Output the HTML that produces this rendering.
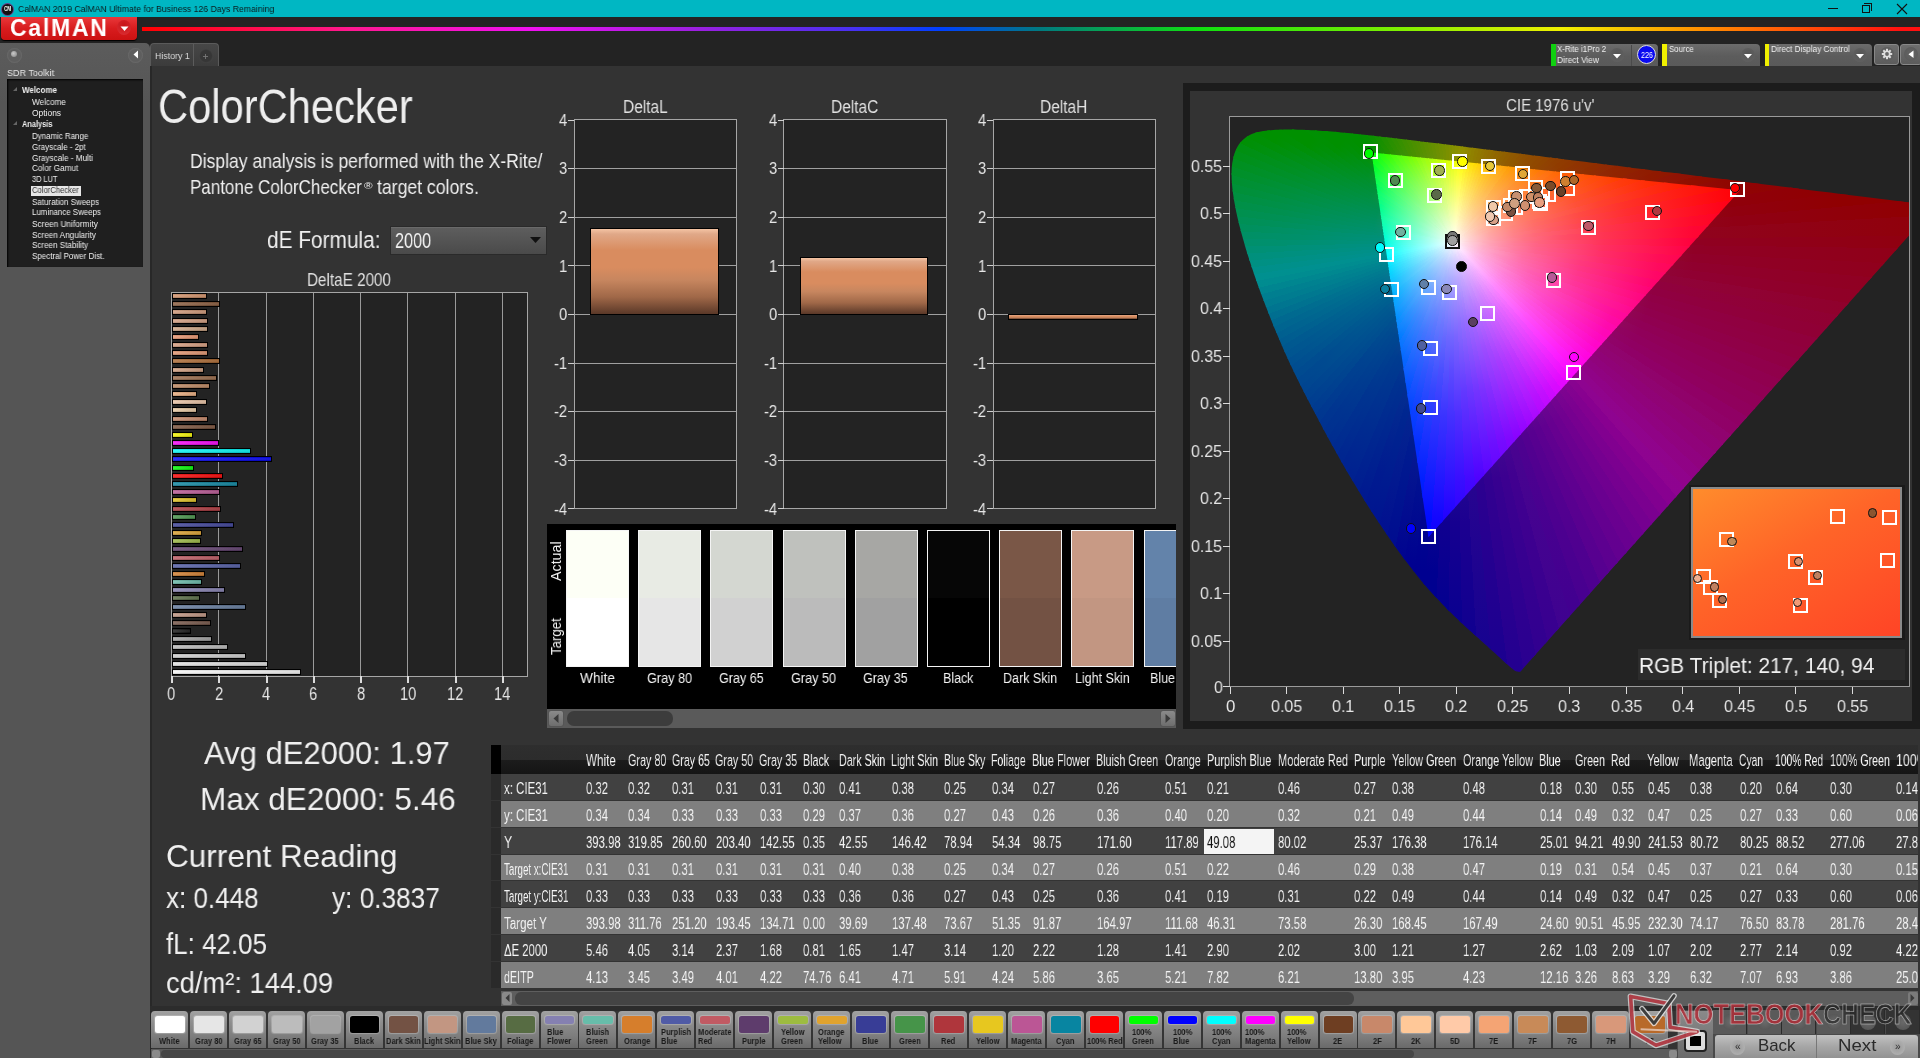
<!DOCTYPE html><html><head><meta charset="utf-8"><style>
*{margin:0;padding:0;box-sizing:border-box}
html,body{width:1920px;height:1058px;overflow:hidden;background:#232323;font-family:"Liberation Sans",sans-serif}
.b{position:absolute}
.t{position:absolute;white-space:nowrap;transform-origin:0 0;will-change:transform}
svg{position:absolute}
</style></head><body>
<div class="b" style="left:0px;top:0px;width:1920px;height:17px;background:#00b7c3"></div>
<div class="b" style="left:2px;top:4px;width:11px;height:11px;border-radius:50%;background:#111;box-shadow:0 0 0 1px #6a3d8a"></div>
<div class="t" style="left:4.00px;top:5.96px;font-size:6.54px;line-height:6.54px;color:#fff;font-weight:bold;transform:scaleX(0.6882);">CM</div>
<div class="t" style="left:17.50px;top:3.93px;font-size:9.88px;line-height:9.88px;color:#0b1a1c;transform:scaleX(0.8793);">CalMAN 2019 CalMAN Ultimate for Business 126 Days Remaining</div>
<div class="b" style="left:1828px;top:8px;width:10px;height:1px;background:#111"></div>
<div class="b" style="left:1862px;top:5px;width:8px;height:8px;border:1px solid #111"></div>
<div class="b" style="left:1864px;top:3px;width:8px;height:8px;border-top:1px solid #111;border-right:1px solid #111"></div>
<svg style="left:1896px;top:3px" width="12" height="12"><path d="M1 1L11 11M11 1L1 11" stroke="#111" stroke-width="1.1"/></svg>
<div class="b" style="left:1px;top:17px;width:136px;height:23px;border-radius:0 0 4px 4px;background:linear-gradient(#e8383a,#d81c1e 50%,#cc1212);box-shadow:0 1px 1px #000"></div>
<div class="t" style="left:10.00px;top:15.89px;font-size:23.98px;line-height:23.98px;color:#fff;font-weight:bold;transform:scaleX(0.9606);letter-spacing:1.8px;">CalMAN</div>
<div class="b" style="left:117px;top:20px;width:14px;height:15px;border-radius:50%;background:radial-gradient(circle at 50% 30%,#c81418,#dc3034)"></div>
<svg style="left:120px;top:26px" width="9" height="6"><path d="M0.5 0.5H8.5L4.5 5z" fill="#fff"/></svg>
<div class="b" style="left:142px;top:27px;width:1778px;height:3.5px;background:linear-gradient(90deg,#ff0000 0%,#ff1890 11.7%,#f010f0 21.8%,#9a20e0 31.4%,#4a30f0 39.8%,#0040ff 44.9%,#007a80 50.5%,#10e010 59.5%,#80f000 70.8%,#f0f000 79.8%,#ff9000 87.6%,#ff1010 99%,#ff1010 100%)"></div>
<div class="b" style="left:0;top:43px;width:150px;height:1015px;border-radius:0 5px 0 0;background:linear-gradient(#5c5c5c,#555 60px,#555)"></div>
<div class="b" style="left:7px;top:48px;width:15px;height:15px;border-radius:50%;background:radial-gradient(#5e5e5e 55%,#6e6e6e 75%,#5c5c5c)"></div>
<div class="b" style="left:11px;top:51px;width:6px;height:6px;border-radius:50%;background:radial-gradient(circle at 40% 40%,#c8c8c8,#808080)"></div>
<div class="b" style="left:128px;top:48px;width:15px;height:15px;border-radius:50%;background:radial-gradient(#5e5e5e 55%,#6e6e6e 75%,#5c5c5c)"></div>
<svg style="left:133px;top:50px" width="6" height="10"><path d="M5 0.5V8.5L0.5 4.5z" fill="#fff"/></svg>
<div class="t" style="left:7.00px;top:67.63px;font-size:9.88px;line-height:9.88px;color:#e8e8e8;transform:scaleX(0.9136);">SDR Toolkit</div>
<div class="b" style="left:7px;top:79px;width:136px;height:188px;background:#1f1f1f;box-shadow:inset 1px 1px 2px #000"></div>
<div class="t" style="left:21.70px;top:85.76px;font-size:8.43px;line-height:8.43px;color:#f0f0f0;font-weight:bold;transform:scaleX(0.9473);">Welcome</div>
<div class="t" style="left:31.60px;top:97.96px;font-size:8.43px;line-height:8.43px;color:#f0f0f0;transform:scaleX(0.9718);">Welcome</div>
<div class="t" style="left:31.60px;top:108.76px;font-size:8.43px;line-height:8.43px;color:#f0f0f0;transform:scaleX(0.9848);">Options</div>
<div class="t" style="left:21.70px;top:119.96px;font-size:8.43px;line-height:8.43px;color:#f0f0f0;font-weight:bold;transform:scaleX(0.8763);">Analysis</div>
<div class="t" style="left:31.60px;top:131.76px;font-size:8.43px;line-height:8.43px;color:#f0f0f0;transform:scaleX(0.9403);">Dynamic Range</div>
<div class="t" style="left:31.60px;top:142.56px;font-size:8.43px;line-height:8.43px;color:#f0f0f0;transform:scaleX(0.9395);">Grayscale - 2pt</div>
<div class="t" style="left:31.60px;top:153.66px;font-size:8.43px;line-height:8.43px;color:#f0f0f0;transform:scaleX(0.9632);">Grayscale - Multi</div>
<div class="t" style="left:31.60px;top:164.46px;font-size:8.43px;line-height:8.43px;color:#f0f0f0;transform:scaleX(0.9665);">Color Gamut</div>
<div class="t" style="left:31.60px;top:175.26px;font-size:8.43px;line-height:8.43px;color:#f0f0f0;transform:scaleX(0.8780);">3D LUT</div>
<div class="b" style="left:31px;top:185.6px;width:49.5px;height:10.3px;background:#e6e6e6"></div>
<div class="t" style="left:32.10px;top:186.36px;font-size:8.43px;line-height:8.43px;color:#333;transform:scaleX(0.9078);">ColorChecker</div>
<div class="t" style="left:31.60px;top:197.66px;font-size:8.43px;line-height:8.43px;color:#f0f0f0;transform:scaleX(0.9495);">Saturation Sweeps</div>
<div class="t" style="left:31.60px;top:208.46px;font-size:8.43px;line-height:8.43px;color:#f0f0f0;transform:scaleX(0.9375);">Luminance Sweeps</div>
<div class="t" style="left:31.60px;top:219.76px;font-size:8.43px;line-height:8.43px;color:#f0f0f0;transform:scaleX(0.9839);">Screen Uniformity</div>
<div class="t" style="left:31.60px;top:230.96px;font-size:8.43px;line-height:8.43px;color:#f0f0f0;transform:scaleX(0.9698);">Screen Angularity</div>
<div class="t" style="left:31.60px;top:241.36px;font-size:8.43px;line-height:8.43px;color:#f0f0f0;transform:scaleX(0.9575);">Screen Stability</div>
<div class="t" style="left:31.60px;top:252.46px;font-size:8.43px;line-height:8.43px;color:#f0f0f0;transform:scaleX(0.9505);">Spectral Power Dist.</div>
<svg style="left:13px;top:87px" width="5" height="5"><path d="M4 0V4H0z" fill="#666"/></svg>
<svg style="left:13px;top:121px" width="5" height="5"><path d="M4 0V4H0z" fill="#666"/></svg>
<div class="b" style="left:150px;top:43px;width:44px;height:23px;border-radius:4px 0 0 0;background:linear-gradient(#474747,#3c3c3c);border:1px solid #5a5a5a;border-bottom:none;border-right:1px solid #4a4a4a"></div>
<div class="t" style="left:154.60px;top:50.63px;font-size:9.88px;line-height:9.88px;color:#ddd;transform:scaleX(0.8925);">History 1</div>
<div class="b" style="left:193px;top:43px;width:26px;height:23px;border-radius:0 4px 0 0;background:linear-gradient(#474747,#3c3c3c);border:1px solid #5a5a5a;border-left:none;border-bottom:none"></div>
<div class="b" style="left:192.6px;top:44px;width:1.6px;height:22px;background:#5c5c5c"></div>
<div class="b" style="left:198.5px;top:49px;width:14px;height:14px;border-radius:50%;background:radial-gradient(#363636 55%,#4a4a4a 80%,#3e3e3e)"></div>
<svg style="left:203px;top:54px" width="5" height="5"><path d="M2.5 0V5M0 2.5H5" stroke="#777" stroke-width="0.9"/></svg>
<div class="b" style="left:1551px;top:44px;width:107px;height:22px;background:linear-gradient(#6c6c6c,#5c5c5c 55%,#5a5a5a);border-radius:0 4px 0 0;"></div>
<div class="b" style="left:1551px;top:44px;width:4.5px;height:22px;background:#10d010"></div>
<div class="t" style="left:1557.40px;top:45.32px;font-size:8.72px;line-height:8.72px;color:#f0f0f0;transform:scaleX(0.9026);">X-Rite i1Pro 2</div>
<div class="t" style="left:1557.40px;top:55.52px;font-size:8.72px;line-height:8.72px;color:#f0f0f0;transform:scaleX(0.9533);">Direct View</div>
<div class="b" style="left:1609.7px;top:47.9px;width:14px;height:14px;border-radius:50%;background:radial-gradient(circle at 50% 40%,#555,#606060 75%,#666)"></div>
<svg style="left:1612.7px;top:53.9px" width="8" height="5"><path d="M0 0H8L4 4.5z" fill="#fff"/></svg>
<div class="b" style="left:1631px;top:45px;width:1px;height:21px;background:#4a4a4a"></div>
<div class="b" style="left:1637px;top:45.2px;width:19px;height:19px;border-radius:50%;background:#0a0af0;border:1px solid #ddd"></div>
<div class="t" style="left:1640.50px;top:50.66px;font-size:8.43px;line-height:8.43px;color:#fff;transform:scaleX(0.8523);">226</div>
<div class="b" style="left:1662px;top:44px;width:98px;height:22px;background:linear-gradient(#6c6c6c,#5c5c5c 55%,#5a5a5a);border-radius:0 4px 0 0;"></div>
<div class="b" style="left:1662px;top:44px;width:4.5px;height:22px;background:#f0f000"></div>
<div class="t" style="left:1668.90px;top:45.32px;font-size:8.72px;line-height:8.72px;color:#f0f0f0;transform:scaleX(0.8971);">Source</div>
<div class="b" style="left:1740.8px;top:47.8px;width:14px;height:14px;border-radius:50%;background:radial-gradient(circle at 50% 40%,#555,#606060 75%,#666)"></div>
<svg style="left:1743.8px;top:53.8px" width="8" height="5"><path d="M0 0H8L4 4.5z" fill="#fff"/></svg>
<div class="b" style="left:1764.5px;top:44px;width:107.5px;height:22px;background:linear-gradient(#6c6c6c,#5c5c5c 55%,#5a5a5a);border-radius:0 4px 0 0;"></div>
<div class="b" style="left:1764.5px;top:44px;width:4.5px;height:22px;background:#f0f000"></div>
<div class="t" style="left:1771.25px;top:45.32px;font-size:8.72px;line-height:8.72px;color:#f0f0f0;transform:scaleX(0.9338);">Direct Display Control</div>
<div class="b" style="left:1853px;top:47.6px;width:14px;height:14px;border-radius:50%;background:radial-gradient(circle at 50% 40%,#555,#606060 75%,#666)"></div>
<svg style="left:1856px;top:53.6px" width="8" height="5"><path d="M0 0H8L4 4.5z" fill="#fff"/></svg>
<div class="b" style="left:1874px;top:44px;width:25px;height:21px;border-radius:3px;background:linear-gradient(#6e6e6e,#5c5c5c);border:1px solid #888"></div>
<div class="b" style="left:1880px;top:47px;width:14px;height:14px;border-radius:50%;background:radial-gradient(#666,#5a5a5a 80%)"></div>
<svg style="left:1881px;top:48px" width="12" height="12" viewBox="-6 -6 12 12"><g fill="#ddd"><circle r="3.6"/><rect x="-1" y="-5.2" width="2" height="10.4"/><rect x="-1" y="-5.2" width="2" height="10.4" transform="rotate(45)"/><rect x="-1" y="-5.2" width="2" height="10.4" transform="rotate(90)"/><rect x="-1" y="-5.2" width="2" height="10.4" transform="rotate(135)"/></g><circle r="1.9" fill="#666"/></svg>
<div class="b" style="left:1900px;top:44px;width:22px;height:21px;border-radius:3px;background:linear-gradient(#6e6e6e,#5c5c5c);border:1px solid #888"></div>
<div class="b" style="left:1904px;top:47px;width:14px;height:14px;border-radius:50%;background:radial-gradient(#666,#5a5a5a 80%)"></div>
<svg style="left:1908px;top:50px" width="6" height="9"><path d="M5.5 0.5V8L0.5 4.25z" fill="#fff"/></svg>
<div class="b" style="left:150px;top:66px;width:1770px;height:992px;background:#333333"></div>
<div class="b" style="left:150px;top:66px;width:1.5px;height:992px;background:#282828"></div>
<div class="t" style="left:158.40px;top:82.89px;font-size:47.97px;line-height:47.97px;color:#eeeeee;transform:scaleX(0.8687);">ColorChecker</div>
<div class="t" style="left:190.40px;top:152.39px;font-size:19.62px;line-height:19.62px;color:#f0f0f0;transform:scaleX(0.8956);">Display analysis is performed with the X-Rite/</div>
<div class="t" style="left:190.40px;top:177.69px;font-size:19.62px;line-height:19.62px;color:#f0f0f0;transform:scaleX(0.8666);">Pantone ColorChecker</div>
<div class="t" style="left:363.60px;top:180.70px;font-size:9.45px;line-height:9.45px;color:#f0f0f0;transform:scaleX(1.2385);">®</div>
<div class="t" style="left:377.10px;top:177.69px;font-size:19.62px;line-height:19.62px;color:#f0f0f0;transform:scaleX(0.8984);">target colors.</div>
<div class="t" style="left:267.30px;top:229.11px;font-size:23.26px;line-height:23.26px;color:#f0f0f0;transform:scaleX(0.8963);">dE Formula:</div>
<div class="b" style="left:390px;top:225.5px;width:156.5px;height:29.5px;background:linear-gradient(#5e5e5e,#4a4a4a);border:1px solid #2a2a2a;box-shadow:inset 0 1px 0 #6a6a6a"></div>
<div class="t" style="left:394.80px;top:229.72px;font-size:22.53px;line-height:22.53px;color:#f2f2f2;transform:scaleX(0.7222);">2000</div>
<svg style="left:530px;top:237px" width="11" height="7"><path d="M0 0H11L5.5 6z" fill="#111"/></svg>
<div class="t" style="left:307.00px;top:271.63px;font-size:17.44px;line-height:17.44px;color:#e0e0e0;transform:scaleX(0.8748);">DeltaE 2000</div>
<div class="b" style="left:171px;top:292px;width:356px;height:384px;background:#232323"></div>
<div class="b" style="left:218px;top:292px;width:1px;height:384px;background:#9a9a9a"></div>
<div class="b" style="left:266px;top:292px;width:1px;height:384px;background:#9a9a9a"></div>
<div class="b" style="left:313px;top:292px;width:1px;height:384px;background:#9a9a9a"></div>
<div class="b" style="left:360px;top:292px;width:1px;height:384px;background:#9a9a9a"></div>
<div class="b" style="left:407px;top:292px;width:1px;height:384px;background:#9a9a9a"></div>
<div class="b" style="left:455px;top:292px;width:1px;height:384px;background:#9a9a9a"></div>
<div class="b" style="left:502px;top:292px;width:1px;height:384px;background:#9a9a9a"></div>
<div class="b" style="left:171px;top:291.5px;width:356.5px;height:385px;border:1.3px solid #a6a6a6"></div>
<div class="b" style="left:171px;top:676px;width:1.5px;height:7px;background:#dcdcdc"></div>
<div class="t" style="left:167.43px;top:686.13px;font-size:17.44px;line-height:17.44px;color:#e6e6e6;transform:scaleX(0.8400);">0</div>
<div class="b" style="left:218px;top:676px;width:1.5px;height:7px;background:#dcdcdc"></div>
<div class="t" style="left:214.71px;top:686.13px;font-size:17.44px;line-height:17.44px;color:#e6e6e6;transform:scaleX(0.8400);">2</div>
<div class="b" style="left:266px;top:676px;width:1.5px;height:7px;background:#dcdcdc"></div>
<div class="t" style="left:261.99px;top:686.13px;font-size:17.44px;line-height:17.44px;color:#e6e6e6;transform:scaleX(0.8400);">4</div>
<div class="b" style="left:313px;top:676px;width:1.5px;height:7px;background:#dcdcdc"></div>
<div class="t" style="left:309.27px;top:686.13px;font-size:17.44px;line-height:17.44px;color:#e6e6e6;transform:scaleX(0.8400);">6</div>
<div class="b" style="left:360px;top:676px;width:1.5px;height:7px;background:#dcdcdc"></div>
<div class="t" style="left:356.55px;top:686.13px;font-size:17.44px;line-height:17.44px;color:#e6e6e6;transform:scaleX(0.8400);">8</div>
<div class="b" style="left:407px;top:676px;width:1.5px;height:7px;background:#dcdcdc"></div>
<div class="t" style="left:399.77px;top:686.13px;font-size:17.44px;line-height:17.44px;color:#e6e6e6;transform:scaleX(0.8400);">10</div>
<div class="b" style="left:455px;top:676px;width:1.5px;height:7px;background:#dcdcdc"></div>
<div class="t" style="left:447.05px;top:686.13px;font-size:17.44px;line-height:17.44px;color:#e6e6e6;transform:scaleX(0.8400);">12</div>
<div class="b" style="left:502px;top:676px;width:1.5px;height:7px;background:#dcdcdc"></div>
<div class="t" style="left:494.33px;top:686.13px;font-size:17.44px;line-height:17.44px;color:#e6e6e6;transform:scaleX(0.8400);">14</div>
<div class="b" style="left:172px;top:293.09px;width:34.5px;height:6px;background-color:#d8946a;border:1.5px solid #000;background-image:linear-gradient(rgba(0,0,0,.12),rgba(255,255,255,.12) 50%,rgba(0,0,0,.2)),linear-gradient(90deg,rgba(255,255,255,.12),rgba(0,0,0,.12))"></div>
<div class="b" style="left:172px;top:301.26px;width:47.5px;height:6px;background-color:#8a5a3a;border:1.5px solid #000;background-image:linear-gradient(rgba(0,0,0,.12),rgba(255,255,255,.12) 50%,rgba(0,0,0,.2)),linear-gradient(90deg,rgba(255,255,255,.12),rgba(0,0,0,.12))"></div>
<div class="b" style="left:172px;top:309.43px;width:34.5px;height:6px;background-color:#d49a78;border:1.5px solid #000;background-image:linear-gradient(rgba(0,0,0,.12),rgba(255,255,255,.12) 50%,rgba(0,0,0,.2)),linear-gradient(90deg,rgba(255,255,255,.12),rgba(0,0,0,.12))"></div>
<div class="b" style="left:172px;top:317.60px;width:36.2px;height:6px;background-color:#d8a080;border:1.5px solid #000;background-image:linear-gradient(rgba(0,0,0,.12),rgba(255,255,255,.12) 50%,rgba(0,0,0,.2)),linear-gradient(90deg,rgba(255,255,255,.12),rgba(0,0,0,.12))"></div>
<div class="b" style="left:172px;top:325.77px;width:36.4px;height:6px;background-color:#d4aa88;border:1.5px solid #000;background-image:linear-gradient(rgba(0,0,0,.12),rgba(255,255,255,.12) 50%,rgba(0,0,0,.2)),linear-gradient(90deg,rgba(255,255,255,.12),rgba(0,0,0,.12))"></div>
<div class="b" style="left:172px;top:333.94px;width:26.7px;height:6px;background-color:#f09870;border:1.5px solid #000;background-image:linear-gradient(rgba(0,0,0,.12),rgba(255,255,255,.12) 50%,rgba(0,0,0,.2)),linear-gradient(90deg,rgba(255,255,255,.12),rgba(0,0,0,.12))"></div>
<div class="b" style="left:172px;top:342.11px;width:36.4px;height:6px;background-color:#dca080;border:1.5px solid #000;background-image:linear-gradient(rgba(0,0,0,.12),rgba(255,255,255,.12) 50%,rgba(0,0,0,.2)),linear-gradient(90deg,rgba(255,255,255,.12),rgba(0,0,0,.12))"></div>
<div class="b" style="left:172px;top:350.28px;width:36.4px;height:6px;background-color:#e89870;border:1.5px solid #000;background-image:linear-gradient(rgba(0,0,0,.12),rgba(255,255,255,.12) 50%,rgba(0,0,0,.2)),linear-gradient(90deg,rgba(255,255,255,.12),rgba(0,0,0,.12))"></div>
<div class="b" style="left:172px;top:358.45px;width:47.5px;height:6px;background-color:#b06a30;border:1.5px solid #000;background-image:linear-gradient(rgba(0,0,0,.12),rgba(255,255,255,.12) 50%,rgba(0,0,0,.2)),linear-gradient(90deg,rgba(255,255,255,.12),rgba(0,0,0,.12))"></div>
<div class="b" style="left:172px;top:366.62px;width:31.9px;height:6px;background-color:#d4a080;border:1.5px solid #000;background-image:linear-gradient(rgba(0,0,0,.12),rgba(255,255,255,.12) 50%,rgba(0,0,0,.2)),linear-gradient(90deg,rgba(255,255,255,.12),rgba(0,0,0,.12))"></div>
<div class="b" style="left:172px;top:374.79px;width:45.2px;height:6px;background-color:#9a6a48;border:1.5px solid #000;background-image:linear-gradient(rgba(0,0,0,.12),rgba(255,255,255,.12) 50%,rgba(0,0,0,.2)),linear-gradient(90deg,rgba(255,255,255,.12),rgba(0,0,0,.12))"></div>
<div class="b" style="left:172px;top:382.96px;width:37.8px;height:6px;background-color:#c08860;border:1.5px solid #000;background-image:linear-gradient(rgba(0,0,0,.12),rgba(255,255,255,.12) 50%,rgba(0,0,0,.2)),linear-gradient(90deg,rgba(255,255,255,.12),rgba(0,0,0,.12))"></div>
<div class="b" style="left:172px;top:391.13px;width:24.8px;height:6px;background-color:#f0b080;border:1.5px solid #000;background-image:linear-gradient(rgba(0,0,0,.12),rgba(255,255,255,.12) 50%,rgba(0,0,0,.2)),linear-gradient(90deg,rgba(255,255,255,.12),rgba(0,0,0,.12))"></div>
<div class="b" style="left:172px;top:399.30px;width:34.5px;height:6px;background-color:#f0c8a8;border:1.5px solid #000;background-image:linear-gradient(rgba(0,0,0,.12),rgba(255,255,255,.12) 50%,rgba(0,0,0,.2)),linear-gradient(90deg,rgba(255,255,255,.12),rgba(0,0,0,.12))"></div>
<div class="b" style="left:172px;top:407.47px;width:24.8px;height:6px;background-color:#f0d0a8;border:1.5px solid #000;background-image:linear-gradient(rgba(0,0,0,.12),rgba(255,255,255,.12) 50%,rgba(0,0,0,.2)),linear-gradient(90deg,rgba(255,255,255,.12),rgba(0,0,0,.12))"></div>
<div class="b" style="left:172px;top:415.64px;width:36.4px;height:6px;background-color:#c88868;border:1.5px solid #000;background-image:linear-gradient(rgba(0,0,0,.12),rgba(255,255,255,.12) 50%,rgba(0,0,0,.2)),linear-gradient(90deg,rgba(255,255,255,.12),rgba(0,0,0,.12))"></div>
<div class="b" style="left:172px;top:423.81px;width:43.7px;height:6px;background-color:#7a5038;border:1.5px solid #000;background-image:linear-gradient(rgba(0,0,0,.12),rgba(255,255,255,.12) 50%,rgba(0,0,0,.2)),linear-gradient(90deg,rgba(255,255,255,.12),rgba(0,0,0,.12))"></div>
<div class="b" style="left:172px;top:431.98px;width:20.8px;height:6px;background-color:#ffff00;border:1.5px solid #000;background-image:linear-gradient(rgba(0,0,0,.12),rgba(255,255,255,.12) 50%,rgba(0,0,0,.2)),linear-gradient(90deg,rgba(255,255,255,.12),rgba(0,0,0,.12))"></div>
<div class="b" style="left:172px;top:440.15px;width:46.6px;height:6px;background-color:#ff00ff;border:1.5px solid #000;background-image:linear-gradient(rgba(0,0,0,.12),rgba(255,255,255,.12) 50%,rgba(0,0,0,.2)),linear-gradient(90deg,rgba(255,255,255,.12),rgba(0,0,0,.12))"></div>
<div class="b" style="left:172px;top:448.32px;width:78.5px;height:6px;background-color:#00ffff;border:1.5px solid #000;background-image:linear-gradient(rgba(0,0,0,.12),rgba(255,255,255,.12) 50%,rgba(0,0,0,.2)),linear-gradient(90deg,rgba(255,255,255,.12),rgba(0,0,0,.12))"></div>
<div class="b" style="left:172px;top:456.49px;width:100.2px;height:6px;background-color:#0000ff;border:1.5px solid #000;background-image:linear-gradient(rgba(0,0,0,.12),rgba(255,255,255,.12) 50%,rgba(0,0,0,.2)),linear-gradient(90deg,rgba(255,255,255,.12),rgba(0,0,0,.12))"></div>
<div class="b" style="left:172px;top:464.66px;width:21.7px;height:6px;background-color:#00ff00;border:1.5px solid #000;background-image:linear-gradient(rgba(0,0,0,.12),rgba(255,255,255,.12) 50%,rgba(0,0,0,.2)),linear-gradient(90deg,rgba(255,255,255,.12),rgba(0,0,0,.12))"></div>
<div class="b" style="left:172px;top:472.83px;width:50.6px;height:6px;background-color:#ff0000;border:1.5px solid #000;background-image:linear-gradient(rgba(0,0,0,.12),rgba(255,255,255,.12) 50%,rgba(0,0,0,.2)),linear-gradient(90deg,rgba(255,255,255,.12),rgba(0,0,0,.12))"></div>
<div class="b" style="left:172px;top:481.00px;width:65.5px;height:6px;background-color:#0885a1;border:1.5px solid #000;background-image:linear-gradient(rgba(0,0,0,.12),rgba(255,255,255,.12) 50%,rgba(0,0,0,.2)),linear-gradient(90deg,rgba(255,255,255,.12),rgba(0,0,0,.12))"></div>
<div class="b" style="left:172px;top:489.17px;width:47.8px;height:6px;background-color:#bb5695;border:1.5px solid #000;background-image:linear-gradient(rgba(0,0,0,.12),rgba(255,255,255,.12) 50%,rgba(0,0,0,.2)),linear-gradient(90deg,rgba(255,255,255,.12),rgba(0,0,0,.12))"></div>
<div class="b" style="left:172px;top:497.34px;width:25.3px;height:6px;background-color:#e7c71f;border:1.5px solid #000;background-image:linear-gradient(rgba(0,0,0,.12),rgba(255,255,255,.12) 50%,rgba(0,0,0,.2)),linear-gradient(90deg,rgba(255,255,255,.12),rgba(0,0,0,.12))"></div>
<div class="b" style="left:172px;top:505.51px;width:49.4px;height:6px;background-color:#af363c;border:1.5px solid #000;background-image:linear-gradient(rgba(0,0,0,.12),rgba(255,255,255,.12) 50%,rgba(0,0,0,.2)),linear-gradient(90deg,rgba(255,255,255,.12),rgba(0,0,0,.12))"></div>
<div class="b" style="left:172px;top:513.68px;width:24.3px;height:6px;background-color:#469449;border:1.5px solid #000;background-image:linear-gradient(rgba(0,0,0,.12),rgba(255,255,255,.12) 50%,rgba(0,0,0,.2)),linear-gradient(90deg,rgba(255,255,255,.12),rgba(0,0,0,.12))"></div>
<div class="b" style="left:172px;top:521.85px;width:61.9px;height:6px;background-color:#383d96;border:1.5px solid #000;background-image:linear-gradient(rgba(0,0,0,.12),rgba(255,255,255,.12) 50%,rgba(0,0,0,.2)),linear-gradient(90deg,rgba(255,255,255,.12),rgba(0,0,0,.12))"></div>
<div class="b" style="left:172px;top:530.02px;width:30.0px;height:6px;background-color:#e0a32e;border:1.5px solid #000;background-image:linear-gradient(rgba(0,0,0,.12),rgba(255,255,255,.12) 50%,rgba(0,0,0,.2)),linear-gradient(90deg,rgba(255,255,255,.12),rgba(0,0,0,.12))"></div>
<div class="b" style="left:172px;top:538.19px;width:28.6px;height:6px;background-color:#9dbc40;border:1.5px solid #000;background-image:linear-gradient(rgba(0,0,0,.12),rgba(255,255,255,.12) 50%,rgba(0,0,0,.2)),linear-gradient(90deg,rgba(255,255,255,.12),rgba(0,0,0,.12))"></div>
<div class="b" style="left:172px;top:546.36px;width:70.9px;height:6px;background-color:#5e3c6c;border:1.5px solid #000;background-image:linear-gradient(rgba(0,0,0,.12),rgba(255,255,255,.12) 50%,rgba(0,0,0,.2)),linear-gradient(90deg,rgba(255,255,255,.12),rgba(0,0,0,.12))"></div>
<div class="b" style="left:172px;top:554.53px;width:47.8px;height:6px;background-color:#c15a63;border:1.5px solid #000;background-image:linear-gradient(rgba(0,0,0,.12),rgba(255,255,255,.12) 50%,rgba(0,0,0,.2)),linear-gradient(90deg,rgba(255,255,255,.12),rgba(0,0,0,.12))"></div>
<div class="b" style="left:172px;top:562.70px;width:68.6px;height:6px;background-color:#505ba6;border:1.5px solid #000;background-image:linear-gradient(rgba(0,0,0,.12),rgba(255,255,255,.12) 50%,rgba(0,0,0,.2)),linear-gradient(90deg,rgba(255,255,255,.12),rgba(0,0,0,.12))"></div>
<div class="b" style="left:172px;top:570.87px;width:33.3px;height:6px;background-color:#d67e2c;border:1.5px solid #000;background-image:linear-gradient(rgba(0,0,0,.12),rgba(255,255,255,.12) 50%,rgba(0,0,0,.2)),linear-gradient(90deg,rgba(255,255,255,.12),rgba(0,0,0,.12))"></div>
<div class="b" style="left:172px;top:579.04px;width:30.3px;height:6px;background-color:#67bdaa;border:1.5px solid #000;background-image:linear-gradient(rgba(0,0,0,.12),rgba(255,255,255,.12) 50%,rgba(0,0,0,.2)),linear-gradient(90deg,rgba(255,255,255,.12),rgba(0,0,0,.12))"></div>
<div class="b" style="left:172px;top:587.21px;width:52.5px;height:6px;background-color:#8580b1;border:1.5px solid #000;background-image:linear-gradient(rgba(0,0,0,.12),rgba(255,255,255,.12) 50%,rgba(0,0,0,.2)),linear-gradient(90deg,rgba(255,255,255,.12),rgba(0,0,0,.12))"></div>
<div class="b" style="left:172px;top:595.38px;width:28.4px;height:6px;background-color:#576c43;border:1.5px solid #000;background-image:linear-gradient(rgba(0,0,0,.12),rgba(255,255,255,.12) 50%,rgba(0,0,0,.2)),linear-gradient(90deg,rgba(255,255,255,.12),rgba(0,0,0,.12))"></div>
<div class="b" style="left:172px;top:603.55px;width:74.2px;height:6px;background-color:#627a9d;border:1.5px solid #000;background-image:linear-gradient(rgba(0,0,0,.12),rgba(255,255,255,.12) 50%,rgba(0,0,0,.2)),linear-gradient(90deg,rgba(255,255,255,.12),rgba(0,0,0,.12))"></div>
<div class="b" style="left:172px;top:611.72px;width:34.8px;height:6px;background-color:#c29682;border:1.5px solid #000;background-image:linear-gradient(rgba(0,0,0,.12),rgba(255,255,255,.12) 50%,rgba(0,0,0,.2)),linear-gradient(90deg,rgba(255,255,255,.12),rgba(0,0,0,.12))"></div>
<div class="b" style="left:172px;top:619.89px;width:39.0px;height:6px;background-color:#735244;border:1.5px solid #000;background-image:linear-gradient(rgba(0,0,0,.12),rgba(255,255,255,.12) 50%,rgba(0,0,0,.2)),linear-gradient(90deg,rgba(255,255,255,.12),rgba(0,0,0,.12))"></div>
<div class="b" style="left:172px;top:628.06px;width:19.1px;height:6px;background-color:#111111;border:1.5px solid #000;background-image:linear-gradient(rgba(0,0,0,.12),rgba(255,255,255,.12) 50%,rgba(0,0,0,.2)),linear-gradient(90deg,rgba(255,255,255,.12),rgba(0,0,0,.12))"></div>
<div class="b" style="left:172px;top:636.23px;width:39.7px;height:6px;background-color:#a2a2a2;border:1.5px solid #000;background-image:linear-gradient(rgba(0,0,0,.12),rgba(255,255,255,.12) 50%,rgba(0,0,0,.2)),linear-gradient(90deg,rgba(255,255,255,.12),rgba(0,0,0,.12))"></div>
<div class="b" style="left:172px;top:644.40px;width:56.0px;height:6px;background-color:#bdbdbd;border:1.5px solid #000;background-image:linear-gradient(rgba(0,0,0,.12),rgba(255,255,255,.12) 50%,rgba(0,0,0,.2)),linear-gradient(90deg,rgba(255,255,255,.12),rgba(0,0,0,.12))"></div>
<div class="b" style="left:172px;top:652.57px;width:74.2px;height:6px;background-color:#d2d2d2;border:1.5px solid #000;background-image:linear-gradient(rgba(0,0,0,.12),rgba(255,255,255,.12) 50%,rgba(0,0,0,.2)),linear-gradient(90deg,rgba(255,255,255,.12),rgba(0,0,0,.12))"></div>
<div class="b" style="left:172px;top:660.74px;width:95.7px;height:6px;background-color:#e6e6e6;border:1.5px solid #000;background-image:linear-gradient(rgba(0,0,0,.12),rgba(255,255,255,.12) 50%,rgba(0,0,0,.2)),linear-gradient(90deg,rgba(255,255,255,.12),rgba(0,0,0,.12))"></div>
<div class="b" style="left:172px;top:668.91px;width:129.1px;height:6px;background-color:#ffffff;border:1.5px solid #000;background-image:linear-gradient(rgba(0,0,0,.12),rgba(255,255,255,.12) 50%,rgba(0,0,0,.2)),linear-gradient(90deg,rgba(255,255,255,.12),rgba(0,0,0,.12))"></div>
<div class="b" style="left:574px;top:119px;width:163px;height:389px;background:#232323"></div>
<div class="b" style="left:574px;top:460px;width:163px;height:1px;background:#a0a0a0"></div>
<div class="b" style="left:574px;top:411px;width:163px;height:1px;background:#a0a0a0"></div>
<div class="b" style="left:574px;top:363px;width:163px;height:1px;background:#a0a0a0"></div>
<div class="b" style="left:574px;top:314px;width:163px;height:1px;background:#a0a0a0"></div>
<div class="b" style="left:574px;top:265px;width:163px;height:1px;background:#a0a0a0"></div>
<div class="b" style="left:574px;top:217px;width:163px;height:1px;background:#a0a0a0"></div>
<div class="b" style="left:574px;top:168px;width:163px;height:1px;background:#a0a0a0"></div>
<div class="b" style="left:573.7px;top:118.5px;width:163.5px;height:390px;border:1.3px solid #a6a6a6"></div>
<div class="b" style="left:568px;top:508px;width:6px;height:1px;background:#d0d0d0"></div>
<div class="t" style="left:554.29px;top:501.72px;font-size:16.86px;line-height:16.86px;color:#e6e6e6;transform:scaleX(0.8800);">-4</div>
<div class="b" style="left:568px;top:460px;width:6px;height:1px;background:#d0d0d0"></div>
<div class="t" style="left:554.29px;top:453.10px;font-size:16.86px;line-height:16.86px;color:#e6e6e6;transform:scaleX(0.8800);">-3</div>
<div class="b" style="left:568px;top:411px;width:6px;height:1px;background:#d0d0d0"></div>
<div class="t" style="left:554.29px;top:404.47px;font-size:16.86px;line-height:16.86px;color:#e6e6e6;transform:scaleX(0.8800);">-2</div>
<div class="b" style="left:568px;top:363px;width:6px;height:1px;background:#d0d0d0"></div>
<div class="t" style="left:554.29px;top:355.85px;font-size:16.86px;line-height:16.86px;color:#e6e6e6;transform:scaleX(0.8800);">-1</div>
<div class="b" style="left:568px;top:314px;width:6px;height:1px;background:#d0d0d0"></div>
<div class="t" style="left:559.27px;top:307.22px;font-size:16.86px;line-height:16.86px;color:#e6e6e6;transform:scaleX(0.8800);">0</div>
<div class="b" style="left:568px;top:265px;width:6px;height:1px;background:#d0d0d0"></div>
<div class="t" style="left:559.27px;top:258.60px;font-size:16.86px;line-height:16.86px;color:#e6e6e6;transform:scaleX(0.8800);">1</div>
<div class="b" style="left:568px;top:217px;width:6px;height:1px;background:#d0d0d0"></div>
<div class="t" style="left:559.27px;top:209.97px;font-size:16.86px;line-height:16.86px;color:#e6e6e6;transform:scaleX(0.8800);">2</div>
<div class="b" style="left:568px;top:168px;width:6px;height:1px;background:#d0d0d0"></div>
<div class="t" style="left:559.27px;top:161.35px;font-size:16.86px;line-height:16.86px;color:#e6e6e6;transform:scaleX(0.8800);">3</div>
<div class="b" style="left:568px;top:120px;width:6px;height:1px;background:#d0d0d0"></div>
<div class="t" style="left:559.27px;top:112.72px;font-size:16.86px;line-height:16.86px;color:#e6e6e6;transform:scaleX(0.8800);">4</div>
<div class="t" style="left:623.01px;top:97.70px;font-size:18.90px;line-height:18.90px;color:#e0e0e0;transform:scaleX(0.8200);">DeltaL</div>
<div class="b" style="left:590px;top:228.3px;width:129px;height:87.19999999999999px;border:1.2px solid #000;background:linear-gradient(#f4c4a4 0,#e0a888 6%,#d98c5f 25%,#d98c5f 45%,#c7865f 60%,#a06848 80%,#5a3828 100%)"></div>
<div class="b" style="left:783.5px;top:119px;width:163px;height:389px;background:#232323"></div>
<div class="b" style="left:783.5px;top:460px;width:163px;height:1px;background:#a0a0a0"></div>
<div class="b" style="left:783.5px;top:411px;width:163px;height:1px;background:#a0a0a0"></div>
<div class="b" style="left:783.5px;top:363px;width:163px;height:1px;background:#a0a0a0"></div>
<div class="b" style="left:783.5px;top:314px;width:163px;height:1px;background:#a0a0a0"></div>
<div class="b" style="left:783.5px;top:265px;width:163px;height:1px;background:#a0a0a0"></div>
<div class="b" style="left:783.5px;top:217px;width:163px;height:1px;background:#a0a0a0"></div>
<div class="b" style="left:783.5px;top:168px;width:163px;height:1px;background:#a0a0a0"></div>
<div class="b" style="left:783.2px;top:118.5px;width:163.5px;height:390px;border:1.3px solid #a6a6a6"></div>
<div class="b" style="left:777.5px;top:508px;width:6px;height:1px;background:#d0d0d0"></div>
<div class="t" style="left:763.79px;top:501.72px;font-size:16.86px;line-height:16.86px;color:#e6e6e6;transform:scaleX(0.8800);">-4</div>
<div class="b" style="left:777.5px;top:460px;width:6px;height:1px;background:#d0d0d0"></div>
<div class="t" style="left:763.79px;top:453.10px;font-size:16.86px;line-height:16.86px;color:#e6e6e6;transform:scaleX(0.8800);">-3</div>
<div class="b" style="left:777.5px;top:411px;width:6px;height:1px;background:#d0d0d0"></div>
<div class="t" style="left:763.79px;top:404.47px;font-size:16.86px;line-height:16.86px;color:#e6e6e6;transform:scaleX(0.8800);">-2</div>
<div class="b" style="left:777.5px;top:363px;width:6px;height:1px;background:#d0d0d0"></div>
<div class="t" style="left:763.79px;top:355.85px;font-size:16.86px;line-height:16.86px;color:#e6e6e6;transform:scaleX(0.8800);">-1</div>
<div class="b" style="left:777.5px;top:314px;width:6px;height:1px;background:#d0d0d0"></div>
<div class="t" style="left:768.77px;top:307.22px;font-size:16.86px;line-height:16.86px;color:#e6e6e6;transform:scaleX(0.8800);">0</div>
<div class="b" style="left:777.5px;top:265px;width:6px;height:1px;background:#d0d0d0"></div>
<div class="t" style="left:768.77px;top:258.60px;font-size:16.86px;line-height:16.86px;color:#e6e6e6;transform:scaleX(0.8800);">1</div>
<div class="b" style="left:777.5px;top:217px;width:6px;height:1px;background:#d0d0d0"></div>
<div class="t" style="left:768.77px;top:209.97px;font-size:16.86px;line-height:16.86px;color:#e6e6e6;transform:scaleX(0.8800);">2</div>
<div class="b" style="left:777.5px;top:168px;width:6px;height:1px;background:#d0d0d0"></div>
<div class="t" style="left:768.77px;top:161.35px;font-size:16.86px;line-height:16.86px;color:#e6e6e6;transform:scaleX(0.8800);">3</div>
<div class="b" style="left:777.5px;top:120px;width:6px;height:1px;background:#d0d0d0"></div>
<div class="t" style="left:768.77px;top:112.72px;font-size:16.86px;line-height:16.86px;color:#e6e6e6;transform:scaleX(0.8800);">4</div>
<div class="t" style="left:831.13px;top:97.70px;font-size:18.90px;line-height:18.90px;color:#e0e0e0;transform:scaleX(0.8200);">DeltaC</div>
<div class="b" style="left:799.5px;top:257.2px;width:128.5px;height:58.30000000000001px;border:1.2px solid #000;background:linear-gradient(#f4c4a4 0,#e0a888 6%,#d98c5f 25%,#d98c5f 45%,#c7865f 60%,#a06848 80%,#5a3828 100%)"></div>
<div class="b" style="left:993px;top:119px;width:163px;height:389px;background:#232323"></div>
<div class="b" style="left:993px;top:460px;width:163px;height:1px;background:#a0a0a0"></div>
<div class="b" style="left:993px;top:411px;width:163px;height:1px;background:#a0a0a0"></div>
<div class="b" style="left:993px;top:363px;width:163px;height:1px;background:#a0a0a0"></div>
<div class="b" style="left:993px;top:314px;width:163px;height:1px;background:#a0a0a0"></div>
<div class="b" style="left:993px;top:265px;width:163px;height:1px;background:#a0a0a0"></div>
<div class="b" style="left:993px;top:217px;width:163px;height:1px;background:#a0a0a0"></div>
<div class="b" style="left:993px;top:168px;width:163px;height:1px;background:#a0a0a0"></div>
<div class="b" style="left:992.7px;top:118.5px;width:163.5px;height:390px;border:1.3px solid #a6a6a6"></div>
<div class="b" style="left:987px;top:508px;width:6px;height:1px;background:#d0d0d0"></div>
<div class="t" style="left:973.29px;top:501.72px;font-size:16.86px;line-height:16.86px;color:#e6e6e6;transform:scaleX(0.8800);">-4</div>
<div class="b" style="left:987px;top:460px;width:6px;height:1px;background:#d0d0d0"></div>
<div class="t" style="left:973.29px;top:453.10px;font-size:16.86px;line-height:16.86px;color:#e6e6e6;transform:scaleX(0.8800);">-3</div>
<div class="b" style="left:987px;top:411px;width:6px;height:1px;background:#d0d0d0"></div>
<div class="t" style="left:973.29px;top:404.47px;font-size:16.86px;line-height:16.86px;color:#e6e6e6;transform:scaleX(0.8800);">-2</div>
<div class="b" style="left:987px;top:363px;width:6px;height:1px;background:#d0d0d0"></div>
<div class="t" style="left:973.29px;top:355.85px;font-size:16.86px;line-height:16.86px;color:#e6e6e6;transform:scaleX(0.8800);">-1</div>
<div class="b" style="left:987px;top:314px;width:6px;height:1px;background:#d0d0d0"></div>
<div class="t" style="left:978.27px;top:307.22px;font-size:16.86px;line-height:16.86px;color:#e6e6e6;transform:scaleX(0.8800);">0</div>
<div class="b" style="left:987px;top:265px;width:6px;height:1px;background:#d0d0d0"></div>
<div class="t" style="left:978.27px;top:258.60px;font-size:16.86px;line-height:16.86px;color:#e6e6e6;transform:scaleX(0.8800);">1</div>
<div class="b" style="left:987px;top:217px;width:6px;height:1px;background:#d0d0d0"></div>
<div class="t" style="left:978.27px;top:209.97px;font-size:16.86px;line-height:16.86px;color:#e6e6e6;transform:scaleX(0.8800);">2</div>
<div class="b" style="left:987px;top:168px;width:6px;height:1px;background:#d0d0d0"></div>
<div class="t" style="left:978.27px;top:161.35px;font-size:16.86px;line-height:16.86px;color:#e6e6e6;transform:scaleX(0.8800);">3</div>
<div class="b" style="left:987px;top:120px;width:6px;height:1px;background:#d0d0d0"></div>
<div class="t" style="left:978.27px;top:112.72px;font-size:16.86px;line-height:16.86px;color:#e6e6e6;transform:scaleX(0.8800);">4</div>
<div class="t" style="left:1040.13px;top:97.70px;font-size:18.90px;line-height:18.90px;color:#e0e0e0;transform:scaleX(0.8200);">DeltaH</div>
<div class="b" style="left:1008px;top:313.5px;width:129.5px;height:6.0px;border:1.2px solid #000;background:linear-gradient(#f4c4a4 0,#e0a888 6%,#d98c5f 25%,#d98c5f 45%,#c7865f 60%,#a06848 80%,#5a3828 100%)"></div>
<div class="b" style="left:547px;top:523.5px;width:629px;height:186px;background:#000"></div>
<div class="b" style="left:547px;top:709px;width:629px;height:18.5px;background:#5a5a5a"></div>
<div class="b" style="left:548px;top:710px;width:16px;height:17px;border-radius:3px;background:linear-gradient(#8a8a8a,#6e6e6e);border:1px solid #555"></div>
<svg style="left:553px;top:714px" width="6" height="9"><path d="M5.5 0V9L0.5 4.5z" fill="#3a3a3a"/></svg>
<div class="b" style="left:566.5px;top:711px;width:106px;height:15px;border-radius:7px;background:#3c3c3c"></div>
<div class="b" style="left:1160px;top:710px;width:16px;height:17px;border-radius:3px;background:linear-gradient(#8a8a8a,#6e6e6e);border:1px solid #555"></div>
<svg style="left:1165px;top:714px" width="6" height="9"><path d="M0.5 0V9L5.5 4.5z" fill="#3a3a3a"/></svg>
<div class="t" style="left:550.29px;top:580.50px;font-size:13.95px;line-height:13.95px;color:#f0f0f0;transform:rotate(-90deg) scaleX(1.0234);">Actual</div>
<div class="t" style="left:550.29px;top:654.50px;font-size:13.95px;line-height:13.95px;color:#f0f0f0;transform:rotate(-90deg) scaleX(0.9538);">Target</div>
<div class="b" style="left:547px;top:523px;width:629px;height:186px;overflow:hidden">
<div class="b" style="left:19.0px;top:7px;width:63px;height:136.5px;border:1.5px solid #f4f4f4;background:linear-gradient(#fdfff6 50%,#ffffff 50%)"></div>
<div class="t" style="left:32.60px;top:147.75px;font-size:14.83px;line-height:14.83px;color:#f4f4f4;transform:scaleX(0.9213);">White</div>
<div class="b" style="left:91.2px;top:7px;width:63px;height:136.5px;border:1.5px solid #f4f4f4;background:linear-gradient(#e8ebe4 50%,#e6e6e6 50%)"></div>
<div class="t" style="left:99.60px;top:147.75px;font-size:14.83px;line-height:14.83px;color:#f4f4f4;transform:scaleX(0.8557);">Gray 80</div>
<div class="b" style="left:163.4px;top:7px;width:63px;height:136.5px;border:1.5px solid #f4f4f4;background:linear-gradient(#d4d7d1 50%,#d1d1d1 50%)"></div>
<div class="t" style="left:171.70px;top:147.75px;font-size:14.83px;line-height:14.83px;color:#f4f4f4;transform:scaleX(0.8481);">Gray 65</div>
<div class="b" style="left:235.6px;top:7px;width:63px;height:136.5px;border:1.5px solid #f4f4f4;background:linear-gradient(#bfc1bd 50%,#bbbbbb 50%)"></div>
<div class="t" style="left:244.20px;top:147.75px;font-size:14.83px;line-height:14.83px;color:#f4f4f4;transform:scaleX(0.8538);">Gray 50</div>
<div class="b" style="left:307.8px;top:7px;width:63px;height:136.5px;border:1.5px solid #f4f4f4;background:linear-gradient(#a7a7a4 50%,#a1a1a1 50%)"></div>
<div class="t" style="left:316.30px;top:147.75px;font-size:14.83px;line-height:14.83px;color:#f4f4f4;transform:scaleX(0.8481);">Gray 35</div>
<div class="b" style="left:380.0px;top:7px;width:63px;height:136.5px;border:1.5px solid #f4f4f4;background:linear-gradient(#060606 50%,#000000 50%)"></div>
<div class="t" style="left:395.80px;top:147.75px;font-size:14.83px;line-height:14.83px;color:#f4f4f4;transform:scaleX(0.8397);">Black</div>
<div class="b" style="left:452.2px;top:7px;width:63px;height:136.5px;border:1.5px solid #f4f4f4;background:linear-gradient(#7a5747 50%,#735244 50%)"></div>
<div class="t" style="left:456.10px;top:147.75px;font-size:14.83px;line-height:14.83px;color:#f4f4f4;transform:scaleX(0.8433);">Dark Skin</div>
<div class="b" style="left:524.4px;top:7px;width:63px;height:136.5px;border:1.5px solid #f4f4f4;background:linear-gradient(#c89a85 50%,#c29682 50%)"></div>
<div class="t" style="left:527.90px;top:147.75px;font-size:14.83px;line-height:14.83px;color:#f4f4f4;transform:scaleX(0.8420);">Light Skin</div>
<div class="b" style="left:596.6px;top:7px;width:63px;height:136.5px;border:1.5px solid #f4f4f4;background:linear-gradient(#6383aa 50%,#5f7da3 50%)"></div>
<div class="t" style="left:603.00px;top:147.75px;font-size:14.83px;line-height:14.83px;color:#f4f4f4;transform:scaleX(0.8378);">Blue Sky</div>
</div>
<div class="b" style="left:1183px;top:82.75px;width:737px;height:646px;background:#1c1c1c"></div>
<div class="b" style="left:1190px;top:90.5px;width:722px;height:630px;background:#333333"></div>
<div class="t" style="left:1506.25px;top:97.28px;font-size:17.15px;line-height:17.15px;color:#e0e0e0;transform:scaleX(0.8768);">CIE 1976 u'v'</div>
<div class="b" style="left:1230px;top:117px;width:679px;height:570px;background:#232323"></div>
<svg style="left:1230px;top:117px" width="679" height="570" viewBox="0 0 679 570"><defs><clipPath id="cl"><polygon points="290.6,554.2 290.5,554.3 290.4,554.5 290.2,554.6 290.0,554.7 289.7,554.8 289.4,554.9 288.9,554.8 288.2,554.7 287.5,554.6 286.8,554.4 286.0,554.2 285.4,554.0 284.9,553.7 284.4,553.4 283.9,553.0 283.5,552.7 283.0,552.3 282.5,551.8 281.9,551.4 281.3,550.9 280.7,550.4 280.0,549.8 279.3,549.2 278.5,548.5 277.7,547.8 276.8,547.0 275.9,546.2 274.9,545.3 273.9,544.4 272.8,543.4 271.7,542.4 270.6,541.4 269.4,540.3 268.2,539.2 266.9,538.0 265.6,536.7 264.2,535.5 262.8,534.2 261.3,532.9 259.8,531.5 258.2,530.0 256.5,528.5 254.7,526.9 252.8,525.2 250.8,523.5 248.8,521.6 246.7,519.8 244.5,517.8 242.3,515.8 240.0,513.8 237.7,511.7 235.2,509.4 232.7,507.1 230.1,504.7 227.4,502.1 224.6,499.4 221.7,496.6 218.7,493.7 215.6,490.6 212.4,487.2 209.2,483.8 205.9,480.3 202.5,476.7 198.9,472.7 195.2,468.4 191.2,463.7 187.0,458.4 182.5,452.8 177.9,446.8 173.1,440.4 168.1,433.7 163.0,426.6 157.8,419.0 152.4,411.1 146.9,402.8 141.3,394.2 135.6,385.2 129.8,375.8 123.9,366.1 117.9,355.9 111.8,345.4 105.7,334.6 99.7,323.7 93.7,312.7 87.8,301.6 81.8,290.2 75.8,278.7 70.0,267.2 64.3,255.7 59.0,244.4 53.9,233.2 49.1,222.0 44.4,210.9 40.0,199.9 35.8,189.2 31.9,178.9 28.2,168.9 24.8,159.2 21.6,149.7 18.6,140.6 15.9,131.9 13.5,123.6 11.3,115.8 9.4,108.4 7.7,101.5 6.2,94.8 5.0,88.5 3.9,82.6 3.1,77.0 2.4,71.8 2.0,67.0 1.7,62.4 1.6,58.1 1.6,54.0 1.8,50.1 2.2,46.5 2.8,43.2 3.5,40.0 4.3,37.1 5.3,34.3 6.4,31.8 7.6,29.4 9.0,27.3 10.6,25.3 12.2,23.5 13.9,21.9 15.7,20.4 17.6,19.2 19.7,18.1 21.8,17.1 23.9,16.3 26.2,15.5 28.4,14.9 30.8,14.4 33.2,14.0 35.7,13.7 38.2,13.4 40.7,13.2 43.3,13.0 45.9,12.8 48.6,12.7 51.3,12.7 54.0,12.6 56.7,12.6 59.3,12.6 62.0,12.6 64.7,12.6 67.4,12.7 70.1,12.7 72.8,12.8 75.6,12.9 78.3,13.0 81.1,13.2 83.9,13.3 86.8,13.5 89.7,13.7 92.6,13.9 95.6,14.1 98.6,14.3 101.6,14.6 104.7,14.8 107.8,15.1 111.0,15.4 114.2,15.7 117.5,16.0 120.8,16.3 124.1,16.7 127.5,17.0 131.0,17.4 134.5,17.8 138.1,18.2 141.7,18.6 145.4,19.0 149.2,19.4 153.1,19.9 157.0,20.3 160.9,20.8 165.0,21.3 169.1,21.7 173.3,22.2 177.5,22.7 181.8,23.3 186.2,23.8 190.7,24.4 195.2,24.9 199.8,25.5 204.5,26.1 209.3,26.6 214.2,27.2 219.1,27.8 224.2,28.5 229.3,29.1 234.5,29.7 239.7,30.4 245.1,31.1 250.5,31.8 256.0,32.4 261.6,33.1 267.3,33.9 273.0,34.6 278.9,35.3 284.8,36.1 290.8,36.8 296.9,37.6 303.0,38.4 309.3,39.1 315.6,39.9 322.0,40.7 328.4,41.5 334.9,42.4 341.5,43.2 348.1,44.0 354.8,44.8 361.6,45.7 368.4,46.5 375.2,47.4 382.0,48.3 388.9,49.1 395.9,50.0 402.8,50.9 409.7,51.7 416.5,52.6 422.9,53.4 428.7,54.1 434.5,54.9 440.7,55.6 448.0,56.6 456.6,57.6 467.2,59.0 479.5,60.5 492.7,62.1 506.1,63.8 519.1,65.4 530.9,66.9 541.4,68.2 551.0,69.4 560.1,70.6 569.1,71.7 578.5,72.9 588.8,74.2 600.1,75.6 612.4,77.2 625.0,78.8 637.5,80.3 649.3,81.8 659.8,83.1 669.4,84.3 678.6,85.5 687.1,86.5 694.6,87.5 700.8,88.2 705.5,88.8"/></clipPath><clipPath id="ct"><polygon points="141.5,35.6 510.0,73.2 198.5,420.0"/></clipPath><linearGradient id="o0" gradientUnits="userSpaceOnUse" x1="224" y1="125" x2="1124" y2="125"><stop offset="0.000" stop-color="#909090"/><stop offset="0.028" stop-color="#90686f"/><stop offset="0.078" stop-color="#90404e"/><stop offset="0.167" stop-color="#901c32"/><stop offset="0.267" stop-color="#900022"/><stop offset="0.511" stop-color="#90000f"/><stop offset="1.000" stop-color="#900000"/></linearGradient><linearGradient id="o1" gradientUnits="userSpaceOnUse" x1="224" y1="125" x2="1123" y2="157"><stop offset="0.000" stop-color="#909090"/><stop offset="0.033" stop-color="#90626b"/><stop offset="0.078" stop-color="#904051"/><stop offset="0.142" stop-color="#90233b"/><stop offset="0.267" stop-color="#900026"/><stop offset="0.600" stop-color="#900011"/><stop offset="1.000" stop-color="#900007"/></linearGradient><linearGradient id="o2" gradientUnits="userSpaceOnUse" x1="224" y1="125" x2="1122" y2="188"><stop offset="0.000" stop-color="#909090"/><stop offset="0.033" stop-color="#90626d"/><stop offset="0.091" stop-color="#90384d"/><stop offset="0.194" stop-color="#901134"/><stop offset="0.267" stop-color="#90002a"/><stop offset="0.511" stop-color="#90001a"/><stop offset="1.000" stop-color="#90000e"/></linearGradient><linearGradient id="o3" gradientUnits="userSpaceOnUse" x1="224" y1="125" x2="1119" y2="219"><stop offset="0.000" stop-color="#909090"/><stop offset="0.018" stop-color="#90747b"/><stop offset="0.040" stop-color="#905b69"/><stop offset="0.078" stop-color="#903f55"/><stop offset="0.142" stop-color="#902141"/><stop offset="0.228" stop-color="#900633"/><stop offset="0.267" stop-color="#90002e"/><stop offset="0.511" stop-color="#90001f"/><stop offset="1.000" stop-color="#900014"/></linearGradient><linearGradient id="o4" gradientUnits="userSpaceOnUse" x1="224" y1="125" x2="1115" y2="250"><stop offset="0.000" stop-color="#909090"/><stop offset="0.018" stop-color="#90747c"/><stop offset="0.040" stop-color="#905b6b"/><stop offset="0.078" stop-color="#903f57"/><stop offset="0.122" stop-color="#902849"/><stop offset="0.228" stop-color="#900537"/><stop offset="0.267" stop-color="#900032"/><stop offset="0.433" stop-color="#900027"/><stop offset="1.000" stop-color="#900019"/></linearGradient><linearGradient id="o5" gradientUnits="userSpaceOnUse" x1="224" y1="125" x2="1110" y2="281"><stop offset="0.000" stop-color="#909090"/><stop offset="0.018" stop-color="#90747d"/><stop offset="0.040" stop-color="#905b6c"/><stop offset="0.078" stop-color="#903f5a"/><stop offset="0.142" stop-color="#902047"/><stop offset="0.228" stop-color="#90033a"/><stop offset="0.511" stop-color="#900028"/><stop offset="1.000" stop-color="#90001f"/></linearGradient><linearGradient id="o6" gradientUnits="userSpaceOnUse" x1="224" y1="125" x2="1104" y2="312"><stop offset="0.000" stop-color="#909090"/><stop offset="0.033" stop-color="#906272"/><stop offset="0.078" stop-color="#903e5c"/><stop offset="0.122" stop-color="#90274f"/><stop offset="0.228" stop-color="#90013e"/><stop offset="0.511" stop-color="#90002d"/><stop offset="1.000" stop-color="#900024"/></linearGradient><linearGradient id="o7" gradientUnits="userSpaceOnUse" x1="224" y1="125" x2="1097" y2="343"><stop offset="0.000" stop-color="#909090"/><stop offset="0.033" stop-color="#906273"/><stop offset="0.078" stop-color="#903e5e"/><stop offset="0.122" stop-color="#902752"/><stop offset="0.228" stop-color="#900042"/><stop offset="0.433" stop-color="#900034"/><stop offset="1.000" stop-color="#900029"/></linearGradient><linearGradient id="o8" gradientUnits="userSpaceOnUse" x1="224" y1="125" x2="1089" y2="373"><stop offset="0.000" stop-color="#909090"/><stop offset="0.028" stop-color="#906878"/><stop offset="0.067" stop-color="#904565"/><stop offset="0.142" stop-color="#901e51"/><stop offset="0.228" stop-color="#900046"/><stop offset="0.511" stop-color="#900036"/><stop offset="1.000" stop-color="#90002e"/></linearGradient><linearGradient id="o9" gradientUnits="userSpaceOnUse" x1="224" y1="125" x2="1080" y2="403"><stop offset="0.000" stop-color="#909090"/><stop offset="0.033" stop-color="#906276"/><stop offset="0.078" stop-color="#903e63"/><stop offset="0.122" stop-color="#902658"/><stop offset="0.228" stop-color="#900049"/><stop offset="0.433" stop-color="#90003d"/><stop offset="1.000" stop-color="#900033"/></linearGradient><linearGradient id="o10" gradientUnits="userSpaceOnUse" x1="224" y1="125" x2="1070" y2="433"><stop offset="0.000" stop-color="#909090"/><stop offset="0.033" stop-color="#906278"/><stop offset="0.078" stop-color="#903e66"/><stop offset="0.142" stop-color="#901d58"/><stop offset="0.228" stop-color="#90004d"/><stop offset="0.433" stop-color="#900042"/><stop offset="1.000" stop-color="#900039"/></linearGradient><linearGradient id="o11" gradientUnits="userSpaceOnUse" x1="224" y1="125" x2="1058" y2="462"><stop offset="0.000" stop-color="#909090"/><stop offset="0.033" stop-color="#906379"/><stop offset="0.078" stop-color="#903e69"/><stop offset="0.142" stop-color="#901d5b"/><stop offset="0.228" stop-color="#900051"/><stop offset="0.511" stop-color="#900045"/><stop offset="1.000" stop-color="#90003e"/></linearGradient><linearGradient id="o12" gradientUnits="userSpaceOnUse" x1="224" y1="125" x2="1046" y2="491"><stop offset="0.000" stop-color="#909090"/><stop offset="0.033" stop-color="#90637b"/><stop offset="0.078" stop-color="#903e6b"/><stop offset="0.194" stop-color="#900758"/><stop offset="0.228" stop-color="#900056"/><stop offset="0.511" stop-color="#900049"/><stop offset="1.000" stop-color="#900043"/></linearGradient><linearGradient id="o13" gradientUnits="userSpaceOnUse" x1="224" y1="125" x2="1033" y2="520"><stop offset="0.000" stop-color="#909090"/><stop offset="0.033" stop-color="#90637d"/><stop offset="0.078" stop-color="#903e6e"/><stop offset="0.142" stop-color="#901c62"/><stop offset="0.228" stop-color="#90005a"/><stop offset="0.511" stop-color="#90004e"/><stop offset="1.000" stop-color="#900048"/></linearGradient><linearGradient id="o14" gradientUnits="userSpaceOnUse" x1="224" y1="125" x2="1018" y2="548"><stop offset="0.000" stop-color="#909090"/><stop offset="0.040" stop-color="#905d7c"/><stop offset="0.091" stop-color="#90366e"/><stop offset="0.194" stop-color="#900661"/><stop offset="0.228" stop-color="#90005e"/><stop offset="0.511" stop-color="#900053"/><stop offset="1.000" stop-color="#90004e"/></linearGradient><linearGradient id="o15" gradientUnits="userSpaceOnUse" x1="224" y1="125" x2="1003" y2="575"><stop offset="0.000" stop-color="#909090"/><stop offset="0.040" stop-color="#905d7e"/><stop offset="0.078" stop-color="#903f74"/><stop offset="0.194" stop-color="#900565"/><stop offset="0.228" stop-color="#900062"/><stop offset="0.433" stop-color="#90005a"/><stop offset="1.000" stop-color="#900053"/></linearGradient><linearGradient id="o16" gradientUnits="userSpaceOnUse" x1="224" y1="125" x2="987" y2="602"><stop offset="0.000" stop-color="#909090"/><stop offset="0.033" stop-color="#906482"/><stop offset="0.078" stop-color="#903f77"/><stop offset="0.194" stop-color="#900569"/><stop offset="0.228" stop-color="#900067"/><stop offset="1.000" stop-color="#900059"/></linearGradient><linearGradient id="o17" gradientUnits="userSpaceOnUse" x1="224" y1="125" x2="970" y2="628"><stop offset="0.000" stop-color="#909090"/><stop offset="0.022" stop-color="#907187"/><stop offset="0.067" stop-color="#90487c"/><stop offset="0.122" stop-color="#902674"/><stop offset="0.194" stop-color="#90046e"/><stop offset="0.433" stop-color="#900065"/><stop offset="1.000" stop-color="#90005e"/></linearGradient><linearGradient id="o18" gradientUnits="userSpaceOnUse" x1="224" y1="125" x2="952" y2="654"><stop offset="0.000" stop-color="#909090"/><stop offset="0.028" stop-color="#906b87"/><stop offset="0.067" stop-color="#90487f"/><stop offset="0.122" stop-color="#902678"/><stop offset="0.194" stop-color="#900472"/><stop offset="1.000" stop-color="#900064"/></linearGradient><linearGradient id="o19" gradientUnits="userSpaceOnUse" x1="224" y1="125" x2="933" y2="679"><stop offset="0.000" stop-color="#909090"/><stop offset="0.033" stop-color="#906687"/><stop offset="0.067" stop-color="#904982"/><stop offset="0.194" stop-color="#900377"/><stop offset="1.000" stop-color="#90006b"/></linearGradient><linearGradient id="o20" gradientUnits="userSpaceOnUse" x1="224" y1="125" x2="913" y2="704"><stop offset="0.000" stop-color="#909090"/><stop offset="0.033" stop-color="#906789"/><stop offset="0.067" stop-color="#904a85"/><stop offset="0.122" stop-color="#902780"/><stop offset="0.194" stop-color="#90037c"/><stop offset="1.000" stop-color="#900071"/></linearGradient><linearGradient id="o21" gradientUnits="userSpaceOnUse" x1="224" y1="125" x2="893" y2="727"><stop offset="0.000" stop-color="#909090"/><stop offset="0.022" stop-color="#90738c"/><stop offset="0.057" stop-color="#905288"/><stop offset="0.106" stop-color="#903185"/><stop offset="0.194" stop-color="#900381"/><stop offset="1.000" stop-color="#900078"/></linearGradient><linearGradient id="o22" gradientUnits="userSpaceOnUse" x1="224" y1="125" x2="871" y2="750"><stop offset="0.000" stop-color="#909090"/><stop offset="0.033" stop-color="#90688d"/><stop offset="0.057" stop-color="#90538b"/><stop offset="0.106" stop-color="#903289"/><stop offset="0.194" stop-color="#900387"/><stop offset="1.000" stop-color="#900080"/></linearGradient><linearGradient id="o23" gradientUnits="userSpaceOnUse" x1="224" y1="125" x2="849" y2="773"><stop offset="0.000" stop-color="#909090"/><stop offset="0.057" stop-color="#90548e"/><stop offset="0.106" stop-color="#90338d"/><stop offset="0.194" stop-color="#90048c"/><stop offset="1.000" stop-color="#900089"/></linearGradient><linearGradient id="o24" gradientUnits="userSpaceOnUse" x1="224" y1="125" x2="826" y2="794"><stop offset="0.000" stop-color="#909090"/><stop offset="0.033" stop-color="#8f6990"/><stop offset="0.067" stop-color="#8f4d90"/><stop offset="0.194" stop-color="#8e0490"/><stop offset="1.000" stop-color="#8f0090"/></linearGradient><linearGradient id="o25" gradientUnits="userSpaceOnUse" x1="224" y1="125" x2="802" y2="815"><stop offset="0.000" stop-color="#909090"/><stop offset="0.040" stop-color="#8d6290"/><stop offset="0.091" stop-color="#8b3c90"/><stop offset="0.194" stop-color="#880590"/><stop offset="0.228" stop-color="#880090"/><stop offset="1.000" stop-color="#850090"/></linearGradient><linearGradient id="o26" gradientUnits="userSpaceOnUse" x1="224" y1="125" x2="778" y2="834"><stop offset="0.000" stop-color="#909090"/><stop offset="0.033" stop-color="#8b6890"/><stop offset="0.091" stop-color="#873b90"/><stop offset="0.194" stop-color="#830590"/><stop offset="0.228" stop-color="#820090"/><stop offset="1.000" stop-color="#7d0090"/></linearGradient><linearGradient id="o27" gradientUnits="userSpaceOnUse" x1="224" y1="125" x2="753" y2="853"><stop offset="0.000" stop-color="#909090"/><stop offset="0.040" stop-color="#896190"/><stop offset="0.091" stop-color="#833b90"/><stop offset="0.194" stop-color="#7d0690"/><stop offset="0.228" stop-color="#7c0090"/><stop offset="1.000" stop-color="#740090"/></linearGradient><linearGradient id="o28" gradientUnits="userSpaceOnUse" x1="224" y1="125" x2="727" y2="871"><stop offset="0.000" stop-color="#909090"/><stop offset="0.033" stop-color="#886790"/><stop offset="0.078" stop-color="#814390"/><stop offset="0.194" stop-color="#780790"/><stop offset="0.228" stop-color="#770090"/><stop offset="1.000" stop-color="#6c0090"/></linearGradient><linearGradient id="o29" gradientUnits="userSpaceOnUse" x1="224" y1="125" x2="701" y2="888"><stop offset="0.000" stop-color="#909090"/><stop offset="0.033" stop-color="#866790"/><stop offset="0.091" stop-color="#7c3a90"/><stop offset="0.194" stop-color="#730790"/><stop offset="0.228" stop-color="#710090"/><stop offset="1.000" stop-color="#640090"/></linearGradient><linearGradient id="o30" gradientUnits="userSpaceOnUse" x1="224" y1="125" x2="674" y2="905"><stop offset="0.000" stop-color="#909090"/><stop offset="0.040" stop-color="#826090"/><stop offset="0.091" stop-color="#783a90"/><stop offset="0.194" stop-color="#6e0890"/><stop offset="0.228" stop-color="#6c0090"/><stop offset="1.000" stop-color="#5c0090"/></linearGradient><linearGradient id="o31" gradientUnits="userSpaceOnUse" x1="224" y1="125" x2="646" y2="920"><stop offset="0.000" stop-color="#909090"/><stop offset="0.040" stop-color="#806090"/><stop offset="0.091" stop-color="#753a90"/><stop offset="0.194" stop-color="#690990"/><stop offset="0.228" stop-color="#670090"/><stop offset="1.000" stop-color="#540090"/></linearGradient><linearGradient id="o32" gradientUnits="userSpaceOnUse" x1="224" y1="125" x2="618" y2="934"><stop offset="0.000" stop-color="#909090"/><stop offset="0.033" stop-color="#806690"/><stop offset="0.078" stop-color="#744290"/><stop offset="0.142" stop-color="#692090"/><stop offset="0.228" stop-color="#610090"/><stop offset="1.000" stop-color="#4c0090"/></linearGradient><linearGradient id="o33" gradientUnits="userSpaceOnUse" x1="224" y1="125" x2="590" y2="947"><stop offset="0.000" stop-color="#909090"/><stop offset="0.033" stop-color="#7e6690"/><stop offset="0.078" stop-color="#714290"/><stop offset="0.167" stop-color="#621690"/><stop offset="0.228" stop-color="#5c0090"/><stop offset="1.000" stop-color="#440090"/></linearGradient><linearGradient id="o34" gradientUnits="userSpaceOnUse" x1="224" y1="125" x2="561" y2="960"><stop offset="0.000" stop-color="#909090"/><stop offset="0.033" stop-color="#7d6690"/><stop offset="0.078" stop-color="#6e4290"/><stop offset="0.142" stop-color="#612190"/><stop offset="0.228" stop-color="#580090"/><stop offset="0.367" stop-color="#4f0090"/><stop offset="1.000" stop-color="#3d0090"/></linearGradient><linearGradient id="o35" gradientUnits="userSpaceOnUse" x1="224" y1="125" x2="532" y2="971"><stop offset="0.000" stop-color="#909090"/><stop offset="0.040" stop-color="#785f90"/><stop offset="0.091" stop-color="#673a90"/><stop offset="0.228" stop-color="#530090"/><stop offset="0.433" stop-color="#470090"/><stop offset="1.000" stop-color="#350090"/></linearGradient><linearGradient id="o36" gradientUnits="userSpaceOnUse" x1="224" y1="125" x2="502" y2="981"><stop offset="0.000" stop-color="#909090"/><stop offset="0.040" stop-color="#765f90"/><stop offset="0.078" stop-color="#684390"/><stop offset="0.142" stop-color="#592290"/><stop offset="0.228" stop-color="#4e0190"/><stop offset="0.433" stop-color="#410090"/><stop offset="1.000" stop-color="#2d0090"/></linearGradient><linearGradient id="o37" gradientUnits="userSpaceOnUse" x1="224" y1="125" x2="472" y2="990"><stop offset="0.000" stop-color="#909090"/><stop offset="0.040" stop-color="#745f90"/><stop offset="0.078" stop-color="#654390"/><stop offset="0.122" stop-color="#592b90"/><stop offset="0.228" stop-color="#490390"/><stop offset="1.000" stop-color="#250090"/></linearGradient><linearGradient id="o38" gradientUnits="userSpaceOnUse" x1="224" y1="125" x2="442" y2="998"><stop offset="0.000" stop-color="#909090"/><stop offset="0.033" stop-color="#766690"/><stop offset="0.078" stop-color="#624390"/><stop offset="0.122" stop-color="#552c90"/><stop offset="0.228" stop-color="#440590"/><stop offset="0.267" stop-color="#410090"/><stop offset="1.000" stop-color="#1d0090"/></linearGradient><linearGradient id="o39" gradientUnits="userSpaceOnUse" x1="224" y1="125" x2="411" y2="1005"><stop offset="0.000" stop-color="#909090"/><stop offset="0.018" stop-color="#7f7790"/><stop offset="0.048" stop-color="#6c5990"/><stop offset="0.106" stop-color="#563490"/><stop offset="0.228" stop-color="#400790"/><stop offset="0.267" stop-color="#3c0090"/><stop offset="1.000" stop-color="#140090"/></linearGradient><linearGradient id="o40" gradientUnits="userSpaceOnUse" x1="224" y1="125" x2="380" y2="1011"><stop offset="0.000" stop-color="#909090"/><stop offset="0.033" stop-color="#736690"/><stop offset="0.091" stop-color="#573c90"/><stop offset="0.167" stop-color="#441c90"/><stop offset="0.267" stop-color="#370090"/><stop offset="1.000" stop-color="#0a0090"/></linearGradient><linearGradient id="o41" gradientUnits="userSpaceOnUse" x1="224" y1="125" x2="349" y2="1016"><stop offset="0.000" stop-color="#909090"/><stop offset="0.033" stop-color="#716690"/><stop offset="0.078" stop-color="#594490"/><stop offset="0.167" stop-color="#401d90"/><stop offset="0.267" stop-color="#320090"/><stop offset="1.000" stop-color="#000090"/></linearGradient><linearGradient id="o42" gradientUnits="userSpaceOnUse" x1="224" y1="125" x2="318" y2="1020"><stop offset="0.000" stop-color="#909090"/><stop offset="0.033" stop-color="#706690"/><stop offset="0.091" stop-color="#513d90"/><stop offset="0.167" stop-color="#3c1e90"/><stop offset="0.267" stop-color="#2c0090"/><stop offset="0.711" stop-color="#070090"/><stop offset="1.000" stop-color="#000090"/></linearGradient><linearGradient id="o43" gradientUnits="userSpaceOnUse" x1="224" y1="125" x2="287" y2="1023"><stop offset="0.000" stop-color="#909090"/><stop offset="0.040" stop-color="#696090"/><stop offset="0.078" stop-color="#544590"/><stop offset="0.142" stop-color="#3e2890"/><stop offset="0.267" stop-color="#270490"/><stop offset="0.711" stop-color="#000090"/><stop offset="1.000" stop-color="#000090"/></linearGradient><linearGradient id="o44" gradientUnits="userSpaceOnUse" x1="224" y1="125" x2="255" y2="1025"><stop offset="0.000" stop-color="#909090"/><stop offset="0.018" stop-color="#7b7790"/><stop offset="0.048" stop-color="#625a90"/><stop offset="0.091" stop-color="#4b3f90"/><stop offset="0.167" stop-color="#342190"/><stop offset="0.267" stop-color="#220690"/><stop offset="0.311" stop-color="#1c0090"/><stop offset="0.600" stop-color="#000090"/><stop offset="1.000" stop-color="#000090"/></linearGradient><linearGradient id="o45" gradientUnits="userSpaceOnUse" x1="224" y1="125" x2="224" y2="1025"><stop offset="0.000" stop-color="#909090"/><stop offset="0.040" stop-color="#666190"/><stop offset="0.106" stop-color="#423890"/><stop offset="0.194" stop-color="#291a90"/><stop offset="0.311" stop-color="#160090"/><stop offset="0.511" stop-color="#000090"/><stop offset="1.000" stop-color="#000090"/></linearGradient><linearGradient id="o46" gradientUnits="userSpaceOnUse" x1="224" y1="125" x2="192" y2="1025"><stop offset="0.000" stop-color="#909090"/><stop offset="0.040" stop-color="#646190"/><stop offset="0.106" stop-color="#3f3990"/><stop offset="0.167" stop-color="#2b2390"/><stop offset="0.311" stop-color="#100090"/><stop offset="0.433" stop-color="#000090"/><stop offset="1.000" stop-color="#000090"/></linearGradient><linearGradient id="o47" gradientUnits="userSpaceOnUse" x1="224" y1="125" x2="161" y2="1023"><stop offset="0.000" stop-color="#909090"/><stop offset="0.040" stop-color="#636290"/><stop offset="0.106" stop-color="#3c3a90"/><stop offset="0.194" stop-color="#201d90"/><stop offset="0.311" stop-color="#090390"/><stop offset="0.367" stop-color="#000090"/><stop offset="1.000" stop-color="#000090"/></linearGradient><linearGradient id="o48" gradientUnits="userSpaceOnUse" x1="224" y1="125" x2="130" y2="1020"><stop offset="0.000" stop-color="#909090"/><stop offset="0.040" stop-color="#616290"/><stop offset="0.106" stop-color="#393b90"/><stop offset="0.194" stop-color="#1b1f90"/><stop offset="0.311" stop-color="#000690"/><stop offset="0.367" stop-color="#000090"/><stop offset="1.000" stop-color="#000090"/></linearGradient><linearGradient id="o49" gradientUnits="userSpaceOnUse" x1="224" y1="125" x2="99" y2="1016"><stop offset="0.000" stop-color="#909090"/><stop offset="0.033" stop-color="#666990"/><stop offset="0.078" stop-color="#444a90"/><stop offset="0.167" stop-color="#1e2790"/><stop offset="0.267" stop-color="#011190"/><stop offset="0.367" stop-color="#000090"/><stop offset="1.000" stop-color="#000190"/></linearGradient><linearGradient id="o50" gradientUnits="userSpaceOnUse" x1="224" y1="125" x2="68" y2="1011"><stop offset="0.000" stop-color="#909090"/><stop offset="0.028" stop-color="#6a6e90"/><stop offset="0.078" stop-color="#424a90"/><stop offset="0.142" stop-color="#233090"/><stop offset="0.228" stop-color="#051a90"/><stop offset="0.367" stop-color="#000290"/><stop offset="0.433" stop-color="#000090"/><stop offset="1.000" stop-color="#000590"/></linearGradient><linearGradient id="o51" gradientUnits="userSpaceOnUse" x1="224" y1="125" x2="37" y2="1005"><stop offset="0.000" stop-color="#909090"/><stop offset="0.033" stop-color="#636a90"/><stop offset="0.078" stop-color="#3f4b90"/><stop offset="0.142" stop-color="#1f3190"/><stop offset="0.228" stop-color="#001c90"/><stop offset="0.433" stop-color="#000090"/><stop offset="1.000" stop-color="#000890"/></linearGradient><linearGradient id="o52" gradientUnits="userSpaceOnUse" x1="224" y1="125" x2="6" y2="998"><stop offset="0.000" stop-color="#909090"/><stop offset="0.028" stop-color="#686f90"/><stop offset="0.057" stop-color="#4c5990"/><stop offset="0.122" stop-color="#243990"/><stop offset="0.194" stop-color="#032590"/><stop offset="0.433" stop-color="#000090"/><stop offset="1.000" stop-color="#000b90"/></linearGradient><linearGradient id="o53" gradientUnits="userSpaceOnUse" x1="224" y1="125" x2="-24" y2="990"><stop offset="0.000" stop-color="#909090"/><stop offset="0.028" stop-color="#677090"/><stop offset="0.067" stop-color="#435390"/><stop offset="0.122" stop-color="#203b90"/><stop offset="0.194" stop-color="#002790"/><stop offset="0.433" stop-color="#000390"/><stop offset="0.511" stop-color="#000090"/><stop offset="1.000" stop-color="#000e90"/></linearGradient><linearGradient id="o54" gradientUnits="userSpaceOnUse" x1="224" y1="125" x2="-54" y2="981"><stop offset="0.000" stop-color="#909090"/><stop offset="0.028" stop-color="#667090"/><stop offset="0.057" stop-color="#495a90"/><stop offset="0.106" stop-color="#264290"/><stop offset="0.167" stop-color="#032f90"/><stop offset="0.267" stop-color="#001b90"/><stop offset="0.511" stop-color="#000090"/><stop offset="1.000" stop-color="#001190"/></linearGradient><linearGradient id="o55" gradientUnits="userSpaceOnUse" x1="224" y1="125" x2="-84" y2="971"><stop offset="0.000" stop-color="#909090"/><stop offset="0.028" stop-color="#657190"/><stop offset="0.067" stop-color="#3e5690"/><stop offset="0.167" stop-color="#003190"/><stop offset="0.311" stop-color="#001790"/><stop offset="0.511" stop-color="#000390"/><stop offset="1.000" stop-color="#001390"/></linearGradient><linearGradient id="o56" gradientUnits="userSpaceOnUse" x1="224" y1="125" x2="-113" y2="960"><stop offset="0.000" stop-color="#909090"/><stop offset="0.022" stop-color="#6c7790"/><stop offset="0.067" stop-color="#3c5790"/><stop offset="0.142" stop-color="#073990"/><stop offset="0.167" stop-color="#003290"/><stop offset="0.311" stop-color="#001a90"/><stop offset="0.511" stop-color="#000790"/><stop offset="1.000" stop-color="#001590"/></linearGradient><linearGradient id="o57" gradientUnits="userSpaceOnUse" x1="224" y1="125" x2="-142" y2="947"><stop offset="0.000" stop-color="#909090"/><stop offset="0.022" stop-color="#6b7790"/><stop offset="0.048" stop-color="#4c6390"/><stop offset="0.091" stop-color="#274c90"/><stop offset="0.142" stop-color="#003b90"/><stop offset="0.311" stop-color="#001c90"/><stop offset="0.511" stop-color="#000a90"/><stop offset="1.000" stop-color="#001890"/></linearGradient><linearGradient id="o58" gradientUnits="userSpaceOnUse" x1="224" y1="125" x2="-171" y2="934"><stop offset="0.000" stop-color="#909090"/><stop offset="0.018" stop-color="#717c90"/><stop offset="0.048" stop-color="#4b6490"/><stop offset="0.091" stop-color="#244d90"/><stop offset="0.142" stop-color="#003c90"/><stop offset="0.267" stop-color="#002490"/><stop offset="0.511" stop-color="#000d90"/><stop offset="1.000" stop-color="#001a90"/></linearGradient><linearGradient id="o59" gradientUnits="userSpaceOnUse" x1="224" y1="125" x2="-199" y2="920"><stop offset="0.000" stop-color="#909090"/><stop offset="0.028" stop-color="#627490"/><stop offset="0.057" stop-color="#406090"/><stop offset="0.122" stop-color="#074490"/><stop offset="0.142" stop-color="#003e90"/><stop offset="0.267" stop-color="#002690"/><stop offset="0.511" stop-color="#001190"/><stop offset="1.000" stop-color="#001c90"/></linearGradient><linearGradient id="o60" gradientUnits="userSpaceOnUse" x1="224" y1="125" x2="-226" y2="905"><stop offset="0.000" stop-color="#909090"/><stop offset="0.022" stop-color="#697990"/><stop offset="0.048" stop-color="#486690"/><stop offset="0.122" stop-color="#004690"/><stop offset="0.194" stop-color="#003490"/><stop offset="0.311" stop-color="#002390"/><stop offset="0.511" stop-color="#001490"/><stop offset="1.000" stop-color="#001e90"/></linearGradient><linearGradient id="o61" gradientUnits="userSpaceOnUse" x1="224" y1="125" x2="-253" y2="888"><stop offset="0.000" stop-color="#909090"/><stop offset="0.040" stop-color="#506c90"/><stop offset="0.122" stop-color="#004790"/><stop offset="0.267" stop-color="#002b90"/><stop offset="0.511" stop-color="#001790"/><stop offset="0.600" stop-color="#001490"/><stop offset="1.000" stop-color="#002090"/></linearGradient><linearGradient id="o62" gradientUnits="userSpaceOnUse" x1="224" y1="125" x2="-279" y2="871"><stop offset="0.000" stop-color="#909090"/><stop offset="0.022" stop-color="#687a90"/><stop offset="0.048" stop-color="#466890"/><stop offset="0.106" stop-color="#0a4e90"/><stop offset="0.122" stop-color="#004990"/><stop offset="0.228" stop-color="#003390"/><stop offset="0.367" stop-color="#002390"/><stop offset="0.600" stop-color="#001690"/><stop offset="1.000" stop-color="#002290"/></linearGradient><linearGradient id="o63" gradientUnits="userSpaceOnUse" x1="224" y1="125" x2="-305" y2="853"><stop offset="0.000" stop-color="#909090"/><stop offset="0.028" stop-color="#5f7790"/><stop offset="0.057" stop-color="#3a6590"/><stop offset="0.106" stop-color="#055090"/><stop offset="0.122" stop-color="#004b90"/><stop offset="0.228" stop-color="#003590"/><stop offset="0.311" stop-color="#002b90"/><stop offset="0.600" stop-color="#001990"/><stop offset="1.000" stop-color="#002490"/></linearGradient><linearGradient id="o64" gradientUnits="userSpaceOnUse" x1="224" y1="125" x2="-330" y2="834"><stop offset="0.000" stop-color="#909090"/><stop offset="0.033" stop-color="#577490"/><stop offset="0.106" stop-color="#005290"/><stop offset="0.167" stop-color="#004290"/><stop offset="0.267" stop-color="#003390"/><stop offset="0.511" stop-color="#002090"/><stop offset="0.600" stop-color="#001c90"/><stop offset="1.000" stop-color="#002690"/></linearGradient><linearGradient id="o65" gradientUnits="userSpaceOnUse" x1="224" y1="125" x2="-355" y2="815"><stop offset="0.000" stop-color="#909090"/><stop offset="0.033" stop-color="#567590"/><stop offset="0.106" stop-color="#005490"/><stop offset="0.267" stop-color="#003590"/><stop offset="0.511" stop-color="#002390"/><stop offset="0.711" stop-color="#002090"/><stop offset="1.000" stop-color="#002990"/></linearGradient><linearGradient id="o66" gradientUnits="userSpaceOnUse" x1="224" y1="125" x2="-378" y2="794"><stop offset="0.000" stop-color="#909090"/><stop offset="0.040" stop-color="#4c7290"/><stop offset="0.091" stop-color="#0c5b90"/><stop offset="0.106" stop-color="#005690"/><stop offset="0.267" stop-color="#003890"/><stop offset="0.511" stop-color="#002690"/><stop offset="0.711" stop-color="#002290"/><stop offset="1.000" stop-color="#002b90"/></linearGradient><linearGradient id="o67" gradientUnits="userSpaceOnUse" x1="224" y1="125" x2="-401" y2="773"><stop offset="0.000" stop-color="#909090"/><stop offset="0.040" stop-color="#4b7390"/><stop offset="0.091" stop-color="#095d90"/><stop offset="0.106" stop-color="#005890"/><stop offset="0.267" stop-color="#003b90"/><stop offset="0.511" stop-color="#002a90"/><stop offset="0.711" stop-color="#002490"/><stop offset="1.000" stop-color="#002d90"/></linearGradient><linearGradient id="o68" gradientUnits="userSpaceOnUse" x1="224" y1="125" x2="-424" y2="750"><stop offset="0.000" stop-color="#909090"/><stop offset="0.022" stop-color="#667f90"/><stop offset="0.048" stop-color="#407090"/><stop offset="0.091" stop-color="#055f90"/><stop offset="0.106" stop-color="#005a90"/><stop offset="0.267" stop-color="#003e90"/><stop offset="0.511" stop-color="#002d90"/><stop offset="0.711" stop-color="#002690"/><stop offset="1.000" stop-color="#002f90"/></linearGradient><linearGradient id="o69" gradientUnits="userSpaceOnUse" x1="224" y1="125" x2="-445" y2="727"><stop offset="0.000" stop-color="#909090"/><stop offset="0.033" stop-color="#547990"/><stop offset="0.091" stop-color="#006190"/><stop offset="0.194" stop-color="#004a90"/><stop offset="0.433" stop-color="#003490"/><stop offset="0.711" stop-color="#002a90"/><stop offset="1.000" stop-color="#003190"/></linearGradient><linearGradient id="o70" gradientUnits="userSpaceOnUse" x1="224" y1="125" x2="-466" y2="704"><stop offset="0.000" stop-color="#909090"/><stop offset="0.040" stop-color="#497790"/><stop offset="0.091" stop-color="#006390"/><stop offset="0.194" stop-color="#004d90"/><stop offset="0.433" stop-color="#003890"/><stop offset="0.711" stop-color="#002e90"/><stop offset="1.000" stop-color="#003390"/></linearGradient><linearGradient id="o71" gradientUnits="userSpaceOnUse" x1="224" y1="125" x2="-485" y2="679"><stop offset="0.000" stop-color="#909090"/><stop offset="0.033" stop-color="#537b90"/><stop offset="0.091" stop-color="#006590"/><stop offset="0.228" stop-color="#004c90"/><stop offset="0.433" stop-color="#003c90"/><stop offset="0.711" stop-color="#003290"/><stop offset="1.000" stop-color="#003690"/></linearGradient><linearGradient id="o72" gradientUnits="userSpaceOnUse" x1="224" y1="125" x2="-504" y2="654"><stop offset="0.000" stop-color="#909090"/><stop offset="0.033" stop-color="#537d90"/><stop offset="0.091" stop-color="#006890"/><stop offset="0.228" stop-color="#004f90"/><stop offset="0.433" stop-color="#003f90"/><stop offset="0.844" stop-color="#003390"/><stop offset="1.000" stop-color="#003890"/></linearGradient><linearGradient id="o73" gradientUnits="userSpaceOnUse" x1="224" y1="125" x2="-522" y2="628"><stop offset="0.000" stop-color="#909090"/><stop offset="0.040" stop-color="#487b90"/><stop offset="0.078" stop-color="#0e6e90"/><stop offset="0.091" stop-color="#006a90"/><stop offset="0.194" stop-color="#005790"/><stop offset="0.367" stop-color="#004790"/><stop offset="0.844" stop-color="#003790"/><stop offset="1.000" stop-color="#003a90"/></linearGradient><linearGradient id="o74" gradientUnits="userSpaceOnUse" x1="224" y1="125" x2="-539" y2="602"><stop offset="0.000" stop-color="#909090"/><stop offset="0.022" stop-color="#658490"/><stop offset="0.078" stop-color="#0c7090"/><stop offset="0.091" stop-color="#006d90"/><stop offset="0.194" stop-color="#005a90"/><stop offset="0.367" stop-color="#004b90"/><stop offset="0.844" stop-color="#003c90"/><stop offset="1.000" stop-color="#003d90"/></linearGradient><linearGradient id="o75" gradientUnits="userSpaceOnUse" x1="224" y1="125" x2="-556" y2="575"><stop offset="0.000" stop-color="#909090"/><stop offset="0.018" stop-color="#6d8790"/><stop offset="0.078" stop-color="#0a7390"/><stop offset="0.091" stop-color="#006f90"/><stop offset="0.228" stop-color="#005a90"/><stop offset="0.433" stop-color="#004c90"/><stop offset="1.000" stop-color="#003f90"/></linearGradient><linearGradient id="o76" gradientUnits="userSpaceOnUse" x1="224" y1="125" x2="-571" y2="548"><stop offset="0.000" stop-color="#909090"/><stop offset="0.078" stop-color="#087590"/><stop offset="0.091" stop-color="#007290"/><stop offset="0.228" stop-color="#005e90"/><stop offset="0.367" stop-color="#005490"/><stop offset="1.000" stop-color="#004490"/></linearGradient><linearGradient id="o77" gradientUnits="userSpaceOnUse" x1="224" y1="125" x2="-585" y2="520"><stop offset="0.000" stop-color="#909090"/><stop offset="0.078" stop-color="#067890"/><stop offset="0.091" stop-color="#007590"/><stop offset="0.194" stop-color="#006690"/><stop offset="0.367" stop-color="#005990"/><stop offset="1.000" stop-color="#004a90"/></linearGradient><linearGradient id="o78" gradientUnits="userSpaceOnUse" x1="224" y1="125" x2="-598" y2="491"><stop offset="0.000" stop-color="#909090"/><stop offset="0.078" stop-color="#047b90"/><stop offset="0.091" stop-color="#007890"/><stop offset="0.194" stop-color="#006a90"/><stop offset="0.367" stop-color="#005e90"/><stop offset="1.000" stop-color="#005090"/></linearGradient><linearGradient id="o79" gradientUnits="userSpaceOnUse" x1="224" y1="125" x2="-611" y2="462"><stop offset="0.000" stop-color="#909090"/><stop offset="0.078" stop-color="#027d90"/><stop offset="0.091" stop-color="#007b90"/><stop offset="0.267" stop-color="#006990"/><stop offset="0.433" stop-color="#006190"/><stop offset="1.000" stop-color="#005790"/></linearGradient><linearGradient id="o80" gradientUnits="userSpaceOnUse" x1="224" y1="125" x2="-622" y2="433"><stop offset="0.000" stop-color="#909090"/><stop offset="0.067" stop-color="#1a8290"/><stop offset="0.078" stop-color="#008090"/><stop offset="0.311" stop-color="#006c90"/><stop offset="1.000" stop-color="#005e90"/></linearGradient><linearGradient id="o81" gradientUnits="userSpaceOnUse" x1="224" y1="125" x2="-632" y2="403"><stop offset="0.000" stop-color="#909090"/><stop offset="0.067" stop-color="#198590"/><stop offset="0.078" stop-color="#008390"/><stop offset="0.367" stop-color="#007190"/><stop offset="1.000" stop-color="#006690"/></linearGradient><linearGradient id="o82" gradientUnits="userSpaceOnUse" x1="224" y1="125" x2="-641" y2="373"><stop offset="0.000" stop-color="#909090"/><stop offset="0.067" stop-color="#198790"/><stop offset="0.078" stop-color="#008690"/><stop offset="0.311" stop-color="#007990"/><stop offset="1.000" stop-color="#006f90"/></linearGradient><linearGradient id="o83" gradientUnits="userSpaceOnUse" x1="224" y1="125" x2="-649" y2="343"><stop offset="0.000" stop-color="#909090"/><stop offset="0.057" stop-color="#2c8b90"/><stop offset="0.078" stop-color="#008a90"/><stop offset="0.367" stop-color="#007f90"/><stop offset="1.000" stop-color="#007990"/></linearGradient><linearGradient id="o84" gradientUnits="userSpaceOnUse" x1="224" y1="125" x2="-656" y2="312"><stop offset="0.000" stop-color="#909090"/><stop offset="0.057" stop-color="#2c8e90"/><stop offset="0.078" stop-color="#008d90"/><stop offset="1.000" stop-color="#008590"/></linearGradient><linearGradient id="o85" gradientUnits="userSpaceOnUse" x1="224" y1="125" x2="-662" y2="281"><stop offset="0.000" stop-color="#909090"/><stop offset="0.057" stop-color="#2c9090"/><stop offset="0.078" stop-color="#009090"/><stop offset="1.000" stop-color="#00908e"/></linearGradient><linearGradient id="o86" gradientUnits="userSpaceOnUse" x1="224" y1="125" x2="-667" y2="250"><stop offset="0.000" stop-color="#909090"/><stop offset="0.057" stop-color="#2c908d"/><stop offset="0.078" stop-color="#00908c"/><stop offset="1.000" stop-color="#009081"/></linearGradient><linearGradient id="o87" gradientUnits="userSpaceOnUse" x1="224" y1="125" x2="-671" y2="219"><stop offset="0.000" stop-color="#909090"/><stop offset="0.057" stop-color="#2c908a"/><stop offset="0.078" stop-color="#009089"/><stop offset="0.433" stop-color="#00907a"/><stop offset="1.000" stop-color="#009073"/></linearGradient><linearGradient id="o88" gradientUnits="userSpaceOnUse" x1="224" y1="125" x2="-674" y2="188"><stop offset="0.000" stop-color="#909090"/><stop offset="0.057" stop-color="#2c9088"/><stop offset="0.078" stop-color="#009085"/><stop offset="0.433" stop-color="#009070"/><stop offset="1.000" stop-color="#009067"/></linearGradient><linearGradient id="o89" gradientUnits="userSpaceOnUse" x1="224" y1="125" x2="-676" y2="157"><stop offset="0.000" stop-color="#909090"/><stop offset="0.057" stop-color="#2c9085"/><stop offset="0.078" stop-color="#009082"/><stop offset="0.311" stop-color="#00906c"/><stop offset="1.000" stop-color="#00905a"/></linearGradient><linearGradient id="o90" gradientUnits="userSpaceOnUse" x1="224" y1="125" x2="-676" y2="125"><stop offset="0.000" stop-color="#909090"/><stop offset="0.057" stop-color="#2c9082"/><stop offset="0.078" stop-color="#00907e"/><stop offset="0.194" stop-color="#00906e"/><stop offset="0.433" stop-color="#00905d"/><stop offset="1.000" stop-color="#00904e"/></linearGradient><linearGradient id="o91" gradientUnits="userSpaceOnUse" x1="224" y1="125" x2="-676" y2="94"><stop offset="0.000" stop-color="#909090"/><stop offset="0.057" stop-color="#2d9080"/><stop offset="0.078" stop-color="#00907b"/><stop offset="0.167" stop-color="#00906b"/><stop offset="0.367" stop-color="#009058"/><stop offset="1.000" stop-color="#009041"/></linearGradient><linearGradient id="o92" gradientUnits="userSpaceOnUse" x1="224" y1="125" x2="-674" y2="62"><stop offset="0.000" stop-color="#909090"/><stop offset="0.067" stop-color="#1b907a"/><stop offset="0.078" stop-color="#009078"/><stop offset="0.228" stop-color="#00905d"/><stop offset="0.367" stop-color="#00904f"/><stop offset="0.844" stop-color="#009039"/><stop offset="1.000" stop-color="#900000"/></linearGradient><linearGradient id="o93" gradientUnits="userSpaceOnUse" x1="224" y1="125" x2="-671" y2="31"><stop offset="0.000" stop-color="#909090"/><stop offset="0.067" stop-color="#1c9077"/><stop offset="0.078" stop-color="#039074"/><stop offset="0.091" stop-color="#009071"/><stop offset="0.194" stop-color="#00905b"/><stop offset="0.311" stop-color="#00904c"/><stop offset="0.511" stop-color="#00903c"/><stop offset="0.844" stop-color="#00902d"/><stop offset="1.000" stop-color="#900000"/></linearGradient><linearGradient id="o94" gradientUnits="userSpaceOnUse" x1="224" y1="125" x2="-667" y2="-0"><stop offset="0.000" stop-color="#909090"/><stop offset="0.067" stop-color="#1d9075"/><stop offset="0.078" stop-color="#059071"/><stop offset="0.091" stop-color="#00906d"/><stop offset="0.194" stop-color="#009055"/><stop offset="0.311" stop-color="#009044"/><stop offset="0.711" stop-color="#009026"/><stop offset="0.844" stop-color="#900000"/><stop offset="1.000" stop-color="#900000"/></linearGradient><linearGradient id="o95" gradientUnits="userSpaceOnUse" x1="224" y1="125" x2="-662" y2="-31"><stop offset="0.000" stop-color="#909090"/><stop offset="0.078" stop-color="#07906e"/><stop offset="0.091" stop-color="#009069"/><stop offset="0.194" stop-color="#00904f"/><stop offset="0.311" stop-color="#00903c"/><stop offset="0.711" stop-color="#009019"/><stop offset="0.844" stop-color="#900000"/><stop offset="1.000" stop-color="#900000"/></linearGradient><linearGradient id="o96" gradientUnits="userSpaceOnUse" x1="224" y1="125" x2="-656" y2="-62"><stop offset="0.000" stop-color="#909090"/><stop offset="0.078" stop-color="#0a906b"/><stop offset="0.091" stop-color="#009066"/><stop offset="0.194" stop-color="#009049"/><stop offset="0.311" stop-color="#009034"/><stop offset="0.711" stop-color="#00900b"/><stop offset="0.844" stop-color="#900000"/><stop offset="1.000" stop-color="#900000"/></linearGradient><linearGradient id="o97" gradientUnits="userSpaceOnUse" x1="224" y1="125" x2="-649" y2="-93"><stop offset="0.000" stop-color="#909090"/><stop offset="0.078" stop-color="#0c9068"/><stop offset="0.091" stop-color="#009062"/><stop offset="0.228" stop-color="#00903b"/><stop offset="0.600" stop-color="#009005"/><stop offset="0.711" stop-color="#900000"/><stop offset="1.000" stop-color="#900000"/></linearGradient><linearGradient id="o98" gradientUnits="userSpaceOnUse" x1="224" y1="125" x2="-641" y2="-123"><stop offset="0.000" stop-color="#909090"/><stop offset="0.078" stop-color="#0e9064"/><stop offset="0.091" stop-color="#00905f"/><stop offset="0.194" stop-color="#00903d"/><stop offset="0.311" stop-color="#009023"/><stop offset="0.511" stop-color="#009000"/><stop offset="0.600" stop-color="#009000"/><stop offset="0.711" stop-color="#900000"/><stop offset="1.000" stop-color="#900000"/></linearGradient><linearGradient id="o99" gradientUnits="userSpaceOnUse" x1="224" y1="125" x2="-632" y2="-153"><stop offset="0.000" stop-color="#909090"/><stop offset="0.078" stop-color="#119061"/><stop offset="0.091" stop-color="#00905b"/><stop offset="0.228" stop-color="#00902e"/><stop offset="0.433" stop-color="#009000"/><stop offset="0.600" stop-color="#009000"/><stop offset="0.711" stop-color="#900000"/><stop offset="1.000" stop-color="#900000"/></linearGradient><linearGradient id="o100" gradientUnits="userSpaceOnUse" x1="224" y1="125" x2="-622" y2="-183"><stop offset="0.000" stop-color="#909090"/><stop offset="0.040" stop-color="#4e9073"/><stop offset="0.091" stop-color="#009058"/><stop offset="0.194" stop-color="#009031"/><stop offset="0.367" stop-color="#009000"/><stop offset="0.511" stop-color="#009000"/><stop offset="0.600" stop-color="#900000"/><stop offset="1.000" stop-color="#900000"/></linearGradient><linearGradient id="o101" gradientUnits="userSpaceOnUse" x1="224" y1="125" x2="-611" y2="-212"><stop offset="0.000" stop-color="#909090"/><stop offset="0.033" stop-color="#599076"/><stop offset="0.091" stop-color="#009055"/><stop offset="0.167" stop-color="#009034"/><stop offset="0.311" stop-color="#009005"/><stop offset="0.511" stop-color="#009000"/><stop offset="0.600" stop-color="#900000"/><stop offset="1.000" stop-color="#900000"/></linearGradient><linearGradient id="o102" gradientUnits="userSpaceOnUse" x1="224" y1="125" x2="-598" y2="-241"><stop offset="0.000" stop-color="#909090"/><stop offset="0.040" stop-color="#509070"/><stop offset="0.091" stop-color="#009051"/><stop offset="0.194" stop-color="#009024"/><stop offset="0.311" stop-color="#009000"/><stop offset="0.511" stop-color="#009000"/><stop offset="0.600" stop-color="#900000"/><stop offset="0.844" stop-color="#900000"/><stop offset="1.000" stop-color="#900008"/></linearGradient><linearGradient id="o103" gradientUnits="userSpaceOnUse" x1="224" y1="125" x2="-585" y2="-269"><stop offset="0.000" stop-color="#909090"/><stop offset="0.048" stop-color="#469069"/><stop offset="0.091" stop-color="#03904e"/><stop offset="0.106" stop-color="#009046"/><stop offset="0.267" stop-color="#009000"/><stop offset="0.511" stop-color="#009000"/><stop offset="0.600" stop-color="#900000"/><stop offset="0.844" stop-color="#900003"/><stop offset="1.000" stop-color="#900010"/></linearGradient><linearGradient id="o104" gradientUnits="userSpaceOnUse" x1="224" y1="125" x2="-571" y2="-297"><stop offset="0.000" stop-color="#909090"/><stop offset="0.048" stop-color="#479067"/><stop offset="0.091" stop-color="#08904b"/><stop offset="0.106" stop-color="#009042"/><stop offset="0.228" stop-color="#009007"/><stop offset="0.267" stop-color="#009000"/><stop offset="0.433" stop-color="#009000"/><stop offset="0.511" stop-color="#900000"/><stop offset="0.711" stop-color="#900000"/><stop offset="1.000" stop-color="#900018"/></linearGradient><linearGradient id="o105" gradientUnits="userSpaceOnUse" x1="224" y1="125" x2="-556" y2="-325"><stop offset="0.000" stop-color="#909090"/><stop offset="0.040" stop-color="#53906b"/><stop offset="0.091" stop-color="#0c9048"/><stop offset="0.106" stop-color="#00903f"/><stop offset="0.228" stop-color="#009000"/><stop offset="0.433" stop-color="#009000"/><stop offset="0.511" stop-color="#900000"/><stop offset="0.711" stop-color="#900007"/><stop offset="0.844" stop-color="#900017"/><stop offset="1.000" stop-color="#900020"/></linearGradient><linearGradient id="o106" gradientUnits="userSpaceOnUse" x1="224" y1="125" x2="-539" y2="-352"><stop offset="0.000" stop-color="#909090"/><stop offset="0.048" stop-color="#4a9063"/><stop offset="0.106" stop-color="#00903b"/><stop offset="0.194" stop-color="#009008"/><stop offset="0.228" stop-color="#009000"/><stop offset="0.433" stop-color="#009000"/><stop offset="0.511" stop-color="#900000"/><stop offset="0.600" stop-color="#900000"/><stop offset="0.711" stop-color="#900012"/><stop offset="1.000" stop-color="#900028"/></linearGradient><linearGradient id="o107" gradientUnits="userSpaceOnUse" x1="224" y1="125" x2="-522" y2="-378"><stop offset="0.000" stop-color="#909090"/><stop offset="0.040" stop-color="#569068"/><stop offset="0.106" stop-color="#009038"/><stop offset="0.194" stop-color="#009000"/><stop offset="0.433" stop-color="#009000"/><stop offset="0.511" stop-color="#900000"/><stop offset="0.600" stop-color="#900006"/><stop offset="0.711" stop-color="#90001c"/><stop offset="1.000" stop-color="#900031"/></linearGradient><linearGradient id="o108" gradientUnits="userSpaceOnUse" x1="224" y1="125" x2="-504" y2="-404"><stop offset="0.000" stop-color="#909090"/><stop offset="0.048" stop-color="#4d9060"/><stop offset="0.106" stop-color="#029034"/><stop offset="0.122" stop-color="#009029"/><stop offset="0.167" stop-color="#00900b"/><stop offset="0.194" stop-color="#009000"/><stop offset="0.433" stop-color="#009000"/><stop offset="0.511" stop-color="#900000"/><stop offset="0.711" stop-color="#900026"/><stop offset="1.000" stop-color="#900039"/></linearGradient><linearGradient id="o109" gradientUnits="userSpaceOnUse" x1="224" y1="125" x2="-485" y2="-429"><stop offset="0.000" stop-color="#909090"/><stop offset="0.048" stop-color="#4f905e"/><stop offset="0.106" stop-color="#099031"/><stop offset="0.122" stop-color="#009025"/><stop offset="0.167" stop-color="#009003"/><stop offset="0.433" stop-color="#009000"/><stop offset="0.511" stop-color="#900000"/><stop offset="0.600" stop-color="#90001f"/><stop offset="0.711" stop-color="#900030"/><stop offset="1.000" stop-color="#900043"/></linearGradient><linearGradient id="o110" gradientUnits="userSpaceOnUse" x1="224" y1="125" x2="-466" y2="-453"><stop offset="0.000" stop-color="#909090"/><stop offset="0.048" stop-color="#50905d"/><stop offset="0.122" stop-color="#009021"/><stop offset="0.167" stop-color="#009000"/><stop offset="0.367" stop-color="#009000"/><stop offset="0.433" stop-color="#900000"/><stop offset="0.600" stop-color="#90002c"/><stop offset="0.711" stop-color="#90003c"/><stop offset="1.000" stop-color="#90004d"/></linearGradient><linearGradient id="o111" gradientUnits="userSpaceOnUse" x1="224" y1="125" x2="-445" y2="-477"><stop offset="0.000" stop-color="#909090"/><stop offset="0.048" stop-color="#52905b"/><stop offset="0.122" stop-color="#00901c"/><stop offset="0.142" stop-color="#00900b"/><stop offset="0.167" stop-color="#009000"/><stop offset="0.367" stop-color="#009000"/><stop offset="0.433" stop-color="#900000"/><stop offset="0.511" stop-color="#900022"/><stop offset="0.600" stop-color="#90003b"/><stop offset="0.711" stop-color="#900049"/><stop offset="1.000" stop-color="#900058"/></linearGradient><linearGradient id="o112" gradientUnits="userSpaceOnUse" x1="224" y1="125" x2="-424" y2="-500"><stop offset="0.000" stop-color="#909090"/><stop offset="0.057" stop-color="#4a9051"/><stop offset="0.122" stop-color="#059018"/><stop offset="0.142" stop-color="#009005"/><stop offset="0.167" stop-color="#009000"/><stop offset="0.367" stop-color="#009000"/><stop offset="0.433" stop-color="#900000"/><stop offset="0.511" stop-color="#900035"/><stop offset="0.600" stop-color="#90004b"/><stop offset="0.711" stop-color="#900058"/><stop offset="1.000" stop-color="#900065"/></linearGradient><linearGradient id="o113" gradientUnits="userSpaceOnUse" x1="224" y1="125" x2="-401" y2="-522"><stop offset="0.000" stop-color="#909090"/><stop offset="0.067" stop-color="#429046"/><stop offset="0.122" stop-color="#0c9014"/><stop offset="0.142" stop-color="#009000"/><stop offset="0.367" stop-color="#009000"/><stop offset="0.433" stop-color="#900019"/><stop offset="0.511" stop-color="#90004c"/><stop offset="0.600" stop-color="#90005f"/><stop offset="0.711" stop-color="#90006a"/><stop offset="1.000" stop-color="#900074"/></linearGradient><linearGradient id="o114" gradientUnits="userSpaceOnUse" x1="224" y1="125" x2="-378" y2="-544"><stop offset="0.000" stop-color="#909090"/><stop offset="0.048" stop-color="#589057"/><stop offset="0.142" stop-color="#009000"/><stop offset="0.367" stop-color="#009000"/><stop offset="0.433" stop-color="#900044"/><stop offset="0.511" stop-color="#90006b"/><stop offset="0.600" stop-color="#900078"/><stop offset="1.000" stop-color="#900086"/></linearGradient><linearGradient id="o115" gradientUnits="userSpaceOnUse" x1="224" y1="125" x2="-355" y2="-564"><stop offset="0.000" stop-color="#909090"/><stop offset="0.048" stop-color="#5a9055"/><stop offset="0.122" stop-color="#18900a"/><stop offset="0.142" stop-color="#059000"/><stop offset="0.167" stop-color="#009000"/><stop offset="0.367" stop-color="#009000"/><stop offset="0.433" stop-color="#8a0090"/><stop offset="1.000" stop-color="#860090"/></linearGradient><linearGradient id="o116" gradientUnits="userSpaceOnUse" x1="224" y1="125" x2="-330" y2="-584"><stop offset="0.000" stop-color="#909090"/><stop offset="0.040" stop-color="#63905d"/><stop offset="0.122" stop-color="#1e9004"/><stop offset="0.142" stop-color="#0d9000"/><stop offset="0.167" stop-color="#009000"/><stop offset="0.367" stop-color="#009000"/><stop offset="0.433" stop-color="#230090"/><stop offset="0.511" stop-color="#580090"/><stop offset="0.600" stop-color="#650090"/><stop offset="1.000" stop-color="#720090"/></linearGradient><linearGradient id="o117" gradientUnits="userSpaceOnUse" x1="224" y1="125" x2="-305" y2="-603"><stop offset="0.000" stop-color="#909090"/><stop offset="0.067" stop-color="#4d903e"/><stop offset="0.122" stop-color="#239000"/><stop offset="0.167" stop-color="#009000"/><stop offset="0.367" stop-color="#009000"/><stop offset="0.433" stop-color="#000090"/><stop offset="0.511" stop-color="#2d0090"/><stop offset="0.600" stop-color="#470090"/><stop offset="0.711" stop-color="#540090"/><stop offset="1.000" stop-color="#600090"/></linearGradient><linearGradient id="o118" gradientUnits="userSpaceOnUse" x1="224" y1="125" x2="-279" y2="-621"><stop offset="0.000" stop-color="#909090"/><stop offset="0.057" stop-color="#589048"/><stop offset="0.122" stop-color="#289000"/><stop offset="0.167" stop-color="#0a9000"/><stop offset="0.194" stop-color="#009000"/><stop offset="0.367" stop-color="#009000"/><stop offset="0.433" stop-color="#001590"/><stop offset="0.511" stop-color="#000090"/><stop offset="0.600" stop-color="#2a0090"/><stop offset="0.711" stop-color="#3d0090"/><stop offset="1.000" stop-color="#4e0090"/></linearGradient><linearGradient id="o119" gradientUnits="userSpaceOnUse" x1="224" y1="125" x2="-253" y2="-638"><stop offset="0.000" stop-color="#909090"/><stop offset="0.048" stop-color="#629051"/><stop offset="0.106" stop-color="#38900d"/><stop offset="0.122" stop-color="#2e9000"/><stop offset="0.194" stop-color="#009000"/><stop offset="0.367" stop-color="#009000"/><stop offset="0.433" stop-color="#002290"/><stop offset="0.511" stop-color="#000090"/><stop offset="0.600" stop-color="#090090"/><stop offset="0.711" stop-color="#260090"/><stop offset="1.000" stop-color="#3d0090"/></linearGradient><linearGradient id="o120" gradientUnits="userSpaceOnUse" x1="224" y1="125" x2="-226" y2="-654"><stop offset="0.000" stop-color="#909090"/><stop offset="0.057" stop-color="#5d9045"/><stop offset="0.106" stop-color="#3d900a"/><stop offset="0.122" stop-color="#339000"/><stop offset="0.194" stop-color="#0a9000"/><stop offset="0.228" stop-color="#009000"/><stop offset="0.367" stop-color="#009000"/><stop offset="0.433" stop-color="#002b90"/><stop offset="0.511" stop-color="#000790"/><stop offset="0.600" stop-color="#000090"/><stop offset="0.844" stop-color="#200090"/><stop offset="1.000" stop-color="#2c0090"/></linearGradient><linearGradient id="o121" gradientUnits="userSpaceOnUse" x1="224" y1="125" x2="-199" y2="-670"><stop offset="0.000" stop-color="#909090"/><stop offset="0.040" stop-color="#6c9058"/><stop offset="0.106" stop-color="#419006"/><stop offset="0.122" stop-color="#389000"/><stop offset="0.228" stop-color="#009000"/><stop offset="0.311" stop-color="#009000"/><stop offset="0.367" stop-color="#008a90"/><stop offset="0.433" stop-color="#003290"/><stop offset="0.511" stop-color="#001190"/><stop offset="0.600" stop-color="#000090"/><stop offset="0.711" stop-color="#000090"/><stop offset="1.000" stop-color="#1a0090"/></linearGradient><linearGradient id="o122" gradientUnits="userSpaceOnUse" x1="224" y1="125" x2="-171" y2="-684"><stop offset="0.000" stop-color="#909090"/><stop offset="0.040" stop-color="#6e9057"/><stop offset="0.091" stop-color="#4e9018"/><stop offset="0.106" stop-color="#469000"/><stop offset="0.228" stop-color="#0d9000"/><stop offset="0.267" stop-color="#009000"/><stop offset="0.311" stop-color="#009000"/><stop offset="0.367" stop-color="#008690"/><stop offset="0.433" stop-color="#003890"/><stop offset="0.511" stop-color="#001990"/><stop offset="0.600" stop-color="#000590"/><stop offset="1.000" stop-color="#040090"/></linearGradient><linearGradient id="o123" gradientUnits="userSpaceOnUse" x1="224" y1="125" x2="-142" y2="-697"><stop offset="0.000" stop-color="#909090"/><stop offset="0.040" stop-color="#709057"/><stop offset="0.106" stop-color="#4a9000"/><stop offset="0.267" stop-color="#099000"/><stop offset="0.311" stop-color="#009000"/><stop offset="0.367" stop-color="#008490"/><stop offset="0.433" stop-color="#003d90"/><stop offset="0.511" stop-color="#002090"/><stop offset="0.711" stop-color="#000090"/><stop offset="1.000" stop-color="#000090"/></linearGradient><linearGradient id="o124" gradientUnits="userSpaceOnUse" x1="224" y1="125" x2="-113" y2="-709"><stop offset="0.000" stop-color="#909090"/><stop offset="0.048" stop-color="#6d904c"/><stop offset="0.106" stop-color="#4f9000"/><stop offset="0.311" stop-color="#069000"/><stop offset="0.367" stop-color="#008390"/><stop offset="0.433" stop-color="#004290"/><stop offset="0.511" stop-color="#002690"/><stop offset="0.600" stop-color="#001490"/><stop offset="0.711" stop-color="#000790"/><stop offset="1.000" stop-color="#000090"/></linearGradient><linearGradient id="o125" gradientUnits="userSpaceOnUse" x1="224" y1="125" x2="-84" y2="-721"><stop offset="0.000" stop-color="#909090"/><stop offset="0.040" stop-color="#749056"/><stop offset="0.106" stop-color="#539000"/><stop offset="0.194" stop-color="#339000"/><stop offset="0.311" stop-color="#149000"/><stop offset="0.367" stop-color="#008390"/><stop offset="0.433" stop-color="#004690"/><stop offset="0.511" stop-color="#002b90"/><stop offset="0.711" stop-color="#000d90"/><stop offset="0.844" stop-color="#000290"/><stop offset="1.000" stop-color="#000090"/></linearGradient><linearGradient id="o126" gradientUnits="userSpaceOnUse" x1="224" y1="125" x2="-54" y2="-731"><stop offset="0.000" stop-color="#909090"/><stop offset="0.091" stop-color="#5e900e"/><stop offset="0.106" stop-color="#589000"/><stop offset="0.194" stop-color="#3b9000"/><stop offset="0.311" stop-color="#1f9000"/><stop offset="0.367" stop-color="#008390"/><stop offset="0.433" stop-color="#004a90"/><stop offset="0.511" stop-color="#002f90"/><stop offset="0.711" stop-color="#001390"/><stop offset="1.000" stop-color="#000090"/></linearGradient><linearGradient id="o127" gradientUnits="userSpaceOnUse" x1="224" y1="125" x2="-24" y2="-740"><stop offset="0.000" stop-color="#909090"/><stop offset="0.091" stop-color="#62900c"/><stop offset="0.106" stop-color="#5d9000"/><stop offset="0.167" stop-color="#499000"/><stop offset="0.311" stop-color="#299000"/><stop offset="0.367" stop-color="#008590"/><stop offset="0.433" stop-color="#004e90"/><stop offset="0.511" stop-color="#003490"/><stop offset="0.711" stop-color="#001890"/><stop offset="1.000" stop-color="#000890"/></linearGradient><linearGradient id="o128" gradientUnits="userSpaceOnUse" x1="224" y1="125" x2="6" y2="-748"><stop offset="0.000" stop-color="#909090"/><stop offset="0.091" stop-color="#66900a"/><stop offset="0.106" stop-color="#619000"/><stop offset="0.194" stop-color="#499000"/><stop offset="0.311" stop-color="#339000"/><stop offset="0.367" stop-color="#008690"/><stop offset="0.433" stop-color="#005290"/><stop offset="0.511" stop-color="#003890"/><stop offset="0.711" stop-color="#001c90"/><stop offset="1.000" stop-color="#000d90"/></linearGradient><linearGradient id="o129" gradientUnits="userSpaceOnUse" x1="224" y1="125" x2="37" y2="-755"><stop offset="0.000" stop-color="#909090"/><stop offset="0.091" stop-color="#6a9008"/><stop offset="0.106" stop-color="#669000"/><stop offset="0.194" stop-color="#509000"/><stop offset="0.311" stop-color="#3d9000"/><stop offset="0.367" stop-color="#008890"/><stop offset="0.433" stop-color="#005590"/><stop offset="0.511" stop-color="#003c90"/><stop offset="0.711" stop-color="#002190"/><stop offset="1.000" stop-color="#001290"/></linearGradient><linearGradient id="o130" gradientUnits="userSpaceOnUse" x1="224" y1="125" x2="68" y2="-761"><stop offset="0.000" stop-color="#909090"/><stop offset="0.091" stop-color="#6f9006"/><stop offset="0.106" stop-color="#6b9000"/><stop offset="0.311" stop-color="#479000"/><stop offset="0.367" stop-color="#008a90"/><stop offset="0.433" stop-color="#005990"/><stop offset="0.511" stop-color="#003f90"/><stop offset="0.711" stop-color="#002590"/><stop offset="1.000" stop-color="#001690"/></linearGradient><linearGradient id="o131" gradientUnits="userSpaceOnUse" x1="224" y1="125" x2="99" y2="-766"><stop offset="0.000" stop-color="#909090"/><stop offset="0.091" stop-color="#739004"/><stop offset="0.106" stop-color="#709000"/><stop offset="0.311" stop-color="#509000"/><stop offset="0.367" stop-color="#008d90"/><stop offset="0.433" stop-color="#005c90"/><stop offset="0.511" stop-color="#004390"/><stop offset="0.711" stop-color="#002890"/><stop offset="1.000" stop-color="#001a90"/></linearGradient><linearGradient id="o132" gradientUnits="userSpaceOnUse" x1="224" y1="125" x2="130" y2="-770"><stop offset="0.000" stop-color="#909090"/><stop offset="0.078" stop-color="#7a901c"/><stop offset="0.091" stop-color="#779002"/><stop offset="0.106" stop-color="#749000"/><stop offset="0.311" stop-color="#5a9000"/><stop offset="0.367" stop-color="#009090"/><stop offset="0.433" stop-color="#006090"/><stop offset="0.511" stop-color="#004790"/><stop offset="0.711" stop-color="#002c90"/><stop offset="1.000" stop-color="#001d90"/></linearGradient><linearGradient id="o133" gradientUnits="userSpaceOnUse" x1="224" y1="125" x2="161" y2="-773"><stop offset="0.000" stop-color="#909090"/><stop offset="0.078" stop-color="#7e901b"/><stop offset="0.091" stop-color="#7c9000"/><stop offset="0.228" stop-color="#6a9000"/><stop offset="0.367" stop-color="#609000"/><stop offset="0.433" stop-color="#006390"/><stop offset="0.511" stop-color="#004a90"/><stop offset="0.600" stop-color="#003b90"/><stop offset="0.711" stop-color="#002f90"/><stop offset="1.000" stop-color="#002190"/></linearGradient><linearGradient id="o134" gradientUnits="userSpaceOnUse" x1="224" y1="125" x2="192" y2="-774"><stop offset="0.000" stop-color="#909090"/><stop offset="0.067" stop-color="#84902c"/><stop offset="0.091" stop-color="#809000"/><stop offset="0.367" stop-color="#6a9000"/><stop offset="0.433" stop-color="#006790"/><stop offset="0.511" stop-color="#004e90"/><stop offset="0.600" stop-color="#003e90"/><stop offset="0.844" stop-color="#002a90"/><stop offset="1.000" stop-color="#002490"/></linearGradient><linearGradient id="o135" gradientUnits="userSpaceOnUse" x1="224" y1="125" x2="224" y2="-775"><stop offset="0.000" stop-color="#909090"/><stop offset="0.067" stop-color="#87902c"/><stop offset="0.091" stop-color="#859000"/><stop offset="0.367" stop-color="#759000"/><stop offset="0.433" stop-color="#006b90"/><stop offset="0.511" stop-color="#005190"/><stop offset="0.600" stop-color="#004290"/><stop offset="0.711" stop-color="#003690"/><stop offset="1.000" stop-color="#002790"/></linearGradient><linearGradient id="o136" gradientUnits="userSpaceOnUse" x1="224" y1="125" x2="255" y2="-774"><stop offset="0.000" stop-color="#909090"/><stop offset="0.067" stop-color="#8b902c"/><stop offset="0.091" stop-color="#899000"/><stop offset="0.367" stop-color="#809000"/><stop offset="0.433" stop-color="#006f90"/><stop offset="0.511" stop-color="#005590"/><stop offset="0.600" stop-color="#004590"/><stop offset="0.711" stop-color="#003990"/><stop offset="1.000" stop-color="#002b90"/></linearGradient><linearGradient id="o137" gradientUnits="userSpaceOnUse" x1="224" y1="125" x2="287" y2="-773"><stop offset="0.000" stop-color="#909090"/><stop offset="0.067" stop-color="#8e902c"/><stop offset="0.091" stop-color="#8e9000"/><stop offset="0.367" stop-color="#8b9000"/><stop offset="0.433" stop-color="#007390"/><stop offset="0.511" stop-color="#005990"/><stop offset="0.600" stop-color="#004990"/><stop offset="0.711" stop-color="#003d90"/><stop offset="1.000" stop-color="#002e90"/></linearGradient><linearGradient id="o138" gradientUnits="userSpaceOnUse" x1="224" y1="125" x2="318" y2="-770"><stop offset="0.000" stop-color="#909090"/><stop offset="0.057" stop-color="#908e3b"/><stop offset="0.091" stop-color="#908e00"/><stop offset="0.367" stop-color="#908a00"/><stop offset="0.433" stop-color="#007790"/><stop offset="0.511" stop-color="#005c90"/><stop offset="0.600" stop-color="#004c90"/><stop offset="0.711" stop-color="#004090"/><stop offset="1.000" stop-color="#003190"/></linearGradient><linearGradient id="o139" gradientUnits="userSpaceOnUse" x1="224" y1="125" x2="349" y2="-766"><stop offset="0.000" stop-color="#909090"/><stop offset="0.067" stop-color="#908b2b"/><stop offset="0.091" stop-color="#908900"/><stop offset="0.367" stop-color="#908000"/><stop offset="0.433" stop-color="#007b90"/><stop offset="0.511" stop-color="#006090"/><stop offset="0.600" stop-color="#005090"/><stop offset="0.711" stop-color="#004390"/><stop offset="1.000" stop-color="#003490"/></linearGradient><linearGradient id="o140" gradientUnits="userSpaceOnUse" x1="224" y1="125" x2="380" y2="-761"><stop offset="0.000" stop-color="#909090"/><stop offset="0.091" stop-color="#908500"/><stop offset="0.367" stop-color="#907700"/><stop offset="0.433" stop-color="#008090"/><stop offset="0.511" stop-color="#006490"/><stop offset="0.600" stop-color="#005390"/><stop offset="0.711" stop-color="#004790"/><stop offset="1.000" stop-color="#003790"/></linearGradient><linearGradient id="o141" gradientUnits="userSpaceOnUse" x1="224" y1="125" x2="411" y2="-755"><stop offset="0.000" stop-color="#909090"/><stop offset="0.091" stop-color="#908100"/><stop offset="0.367" stop-color="#906f00"/><stop offset="0.433" stop-color="#008490"/><stop offset="0.511" stop-color="#006890"/><stop offset="0.600" stop-color="#005790"/><stop offset="0.711" stop-color="#004a90"/><stop offset="1.000" stop-color="#003a90"/></linearGradient><linearGradient id="o142" gradientUnits="userSpaceOnUse" x1="224" y1="125" x2="442" y2="-748"><stop offset="0.000" stop-color="#909090"/><stop offset="0.091" stop-color="#907d00"/><stop offset="0.367" stop-color="#906800"/><stop offset="0.433" stop-color="#008a90"/><stop offset="0.511" stop-color="#006c90"/><stop offset="0.600" stop-color="#005a90"/><stop offset="0.711" stop-color="#004d90"/><stop offset="1.000" stop-color="#003d90"/></linearGradient><linearGradient id="o143" gradientUnits="userSpaceOnUse" x1="224" y1="125" x2="472" y2="-740"><stop offset="0.000" stop-color="#909090"/><stop offset="0.091" stop-color="#907a00"/><stop offset="0.228" stop-color="#906a00"/><stop offset="0.367" stop-color="#906200"/><stop offset="0.433" stop-color="#008f90"/><stop offset="0.511" stop-color="#007190"/><stop offset="0.600" stop-color="#005e90"/><stop offset="0.711" stop-color="#005190"/><stop offset="1.000" stop-color="#004090"/></linearGradient><linearGradient id="o144" gradientUnits="userSpaceOnUse" x1="224" y1="125" x2="502" y2="-731"><stop offset="0.000" stop-color="#909090"/><stop offset="0.091" stop-color="#907602"/><stop offset="0.106" stop-color="#907400"/><stop offset="0.228" stop-color="#906500"/><stop offset="0.433" stop-color="#905900"/><stop offset="0.511" stop-color="#007590"/><stop offset="0.600" stop-color="#006290"/><stop offset="0.711" stop-color="#005490"/><stop offset="1.000" stop-color="#004390"/></linearGradient><linearGradient id="o145" gradientUnits="userSpaceOnUse" x1="224" y1="125" x2="532" y2="-721"><stop offset="0.000" stop-color="#909090"/><stop offset="0.033" stop-color="#908358"/><stop offset="0.091" stop-color="#907304"/><stop offset="0.106" stop-color="#907000"/><stop offset="0.228" stop-color="#906000"/><stop offset="0.433" stop-color="#905300"/><stop offset="0.511" stop-color="#007a90"/><stop offset="0.600" stop-color="#006690"/><stop offset="0.711" stop-color="#005890"/><stop offset="1.000" stop-color="#004690"/></linearGradient><linearGradient id="o146" gradientUnits="userSpaceOnUse" x1="224" y1="125" x2="561" y2="-709"><stop offset="0.000" stop-color="#909090"/><stop offset="0.028" stop-color="#908360"/><stop offset="0.091" stop-color="#907006"/><stop offset="0.106" stop-color="#906d00"/><stop offset="0.228" stop-color="#905b00"/><stop offset="0.433" stop-color="#904e00"/><stop offset="0.511" stop-color="#007f90"/><stop offset="0.600" stop-color="#006b90"/><stop offset="0.711" stop-color="#005c90"/><stop offset="1.000" stop-color="#004a90"/></linearGradient><linearGradient id="o147" gradientUnits="userSpaceOnUse" x1="224" y1="125" x2="590" y2="-697"><stop offset="0.000" stop-color="#909090"/><stop offset="0.028" stop-color="#908260"/><stop offset="0.091" stop-color="#906d07"/><stop offset="0.106" stop-color="#906a00"/><stop offset="0.267" stop-color="#905300"/><stop offset="0.433" stop-color="#904900"/><stop offset="0.511" stop-color="#008590"/><stop offset="0.600" stop-color="#006f90"/><stop offset="0.711" stop-color="#006090"/><stop offset="1.000" stop-color="#004d90"/></linearGradient><linearGradient id="o148" gradientUnits="userSpaceOnUse" x1="224" y1="125" x2="618" y2="-684"><stop offset="0.000" stop-color="#909090"/><stop offset="0.048" stop-color="#907843"/><stop offset="0.091" stop-color="#906a09"/><stop offset="0.106" stop-color="#906600"/><stop offset="0.228" stop-color="#905300"/><stop offset="0.433" stop-color="#904400"/><stop offset="0.511" stop-color="#008b90"/><stop offset="0.600" stop-color="#007490"/><stop offset="0.711" stop-color="#006490"/><stop offset="1.000" stop-color="#005190"/></linearGradient><linearGradient id="o149" gradientUnits="userSpaceOnUse" x1="224" y1="125" x2="646" y2="-670"><stop offset="0.000" stop-color="#909090"/><stop offset="0.022" stop-color="#908268"/><stop offset="0.048" stop-color="#907643"/><stop offset="0.091" stop-color="#90670b"/><stop offset="0.106" stop-color="#906400"/><stop offset="0.228" stop-color="#904f00"/><stop offset="0.433" stop-color="#904000"/><stop offset="0.511" stop-color="#00908f"/><stop offset="0.600" stop-color="#007990"/><stop offset="0.711" stop-color="#006990"/><stop offset="1.000" stop-color="#005490"/></linearGradient><linearGradient id="o150" gradientUnits="userSpaceOnUse" x1="224" y1="125" x2="674" y2="-654"><stop offset="0.000" stop-color="#909090"/><stop offset="0.018" stop-color="#90846f"/><stop offset="0.048" stop-color="#907443"/><stop offset="0.091" stop-color="#90650c"/><stop offset="0.106" stop-color="#906100"/><stop offset="0.267" stop-color="#904700"/><stop offset="0.511" stop-color="#903800"/><stop offset="0.600" stop-color="#007f90"/><stop offset="0.711" stop-color="#006d90"/><stop offset="1.000" stop-color="#005890"/></linearGradient><linearGradient id="o151" gradientUnits="userSpaceOnUse" x1="224" y1="125" x2="701" y2="-638"><stop offset="0.000" stop-color="#909090"/><stop offset="0.018" stop-color="#90836f"/><stop offset="0.048" stop-color="#907243"/><stop offset="0.106" stop-color="#905e00"/><stop offset="0.267" stop-color="#904400"/><stop offset="0.511" stop-color="#903500"/><stop offset="0.600" stop-color="#008590"/><stop offset="0.711" stop-color="#007290"/><stop offset="1.000" stop-color="#005c90"/></linearGradient><linearGradient id="o152" gradientUnits="userSpaceOnUse" x1="224" y1="125" x2="727" y2="-621"><stop offset="0.000" stop-color="#909090"/><stop offset="0.018" stop-color="#90826f"/><stop offset="0.048" stop-color="#907143"/><stop offset="0.106" stop-color="#905b00"/><stop offset="0.194" stop-color="#904900"/><stop offset="0.311" stop-color="#903c00"/><stop offset="0.511" stop-color="#903100"/><stop offset="0.600" stop-color="#008b90"/><stop offset="0.711" stop-color="#007790"/><stop offset="1.000" stop-color="#006090"/></linearGradient><linearGradient id="o153" gradientUnits="userSpaceOnUse" x1="224" y1="125" x2="753" y2="-603"><stop offset="0.000" stop-color="#909090"/><stop offset="0.033" stop-color="#907757"/><stop offset="0.106" stop-color="#905900"/><stop offset="0.267" stop-color="#903d00"/><stop offset="0.600" stop-color="#902a00"/><stop offset="0.711" stop-color="#007d90"/><stop offset="1.000" stop-color="#006490"/></linearGradient><linearGradient id="o154" gradientUnits="userSpaceOnUse" x1="224" y1="125" x2="778" y2="-584"><stop offset="0.000" stop-color="#909090"/><stop offset="0.028" stop-color="#90795f"/><stop offset="0.057" stop-color="#906939"/><stop offset="0.106" stop-color="#905701"/><stop offset="0.122" stop-color="#905200"/><stop offset="0.267" stop-color="#903a00"/><stop offset="0.600" stop-color="#902600"/><stop offset="0.711" stop-color="#008390"/><stop offset="1.000" stop-color="#006890"/></linearGradient><linearGradient id="o155" gradientUnits="userSpaceOnUse" x1="224" y1="125" x2="802" y2="-564"><stop offset="0.000" stop-color="#909090"/><stop offset="0.028" stop-color="#90785f"/><stop offset="0.048" stop-color="#906c44"/><stop offset="0.106" stop-color="#905405"/><stop offset="0.122" stop-color="#905000"/><stop offset="0.267" stop-color="#903700"/><stop offset="0.600" stop-color="#902300"/><stop offset="0.711" stop-color="#008990"/><stop offset="1.000" stop-color="#006d90"/></linearGradient><linearGradient id="o156" gradientUnits="userSpaceOnUse" x1="224" y1="125" x2="826" y2="-544"><stop offset="0.000" stop-color="#909090"/><stop offset="0.028" stop-color="#90775f"/><stop offset="0.048" stop-color="#906a45"/><stop offset="0.106" stop-color="#905208"/><stop offset="0.122" stop-color="#904d00"/><stop offset="0.311" stop-color="#903000"/><stop offset="0.600" stop-color="#902000"/><stop offset="0.711" stop-color="#009090"/><stop offset="1.000" stop-color="#007290"/></linearGradient><linearGradient id="o157" gradientUnits="userSpaceOnUse" x1="224" y1="125" x2="849" y2="-522"><stop offset="0.000" stop-color="#909090"/><stop offset="0.022" stop-color="#907a68"/><stop offset="0.048" stop-color="#906945"/><stop offset="0.106" stop-color="#90500b"/><stop offset="0.122" stop-color="#904b00"/><stop offset="0.311" stop-color="#902d00"/><stop offset="0.711" stop-color="#901900"/><stop offset="0.844" stop-color="#008590"/><stop offset="1.000" stop-color="#007890"/></linearGradient><linearGradient id="o158" gradientUnits="userSpaceOnUse" x1="224" y1="125" x2="871" y2="-500"><stop offset="0.000" stop-color="#909090"/><stop offset="0.018" stop-color="#907d6f"/><stop offset="0.040" stop-color="#906c4f"/><stop offset="0.122" stop-color="#904900"/><stop offset="0.228" stop-color="#903400"/><stop offset="0.367" stop-color="#902600"/><stop offset="0.711" stop-color="#901600"/><stop offset="0.844" stop-color="#008c90"/><stop offset="1.000" stop-color="#007e90"/></linearGradient><linearGradient id="o159" gradientUnits="userSpaceOnUse" x1="224" y1="125" x2="893" y2="-477"><stop offset="0.000" stop-color="#909090"/><stop offset="0.018" stop-color="#907d6f"/><stop offset="0.040" stop-color="#906b50"/><stop offset="0.122" stop-color="#904700"/><stop offset="0.228" stop-color="#903200"/><stop offset="0.367" stop-color="#902300"/><stop offset="0.844" stop-color="#900f00"/><stop offset="1.000" stop-color="#008490"/></linearGradient><linearGradient id="o160" gradientUnits="userSpaceOnUse" x1="224" y1="125" x2="913" y2="-453"><stop offset="0.000" stop-color="#909090"/><stop offset="0.022" stop-color="#907868"/><stop offset="0.048" stop-color="#906547"/><stop offset="0.122" stop-color="#904504"/><stop offset="0.142" stop-color="#904000"/><stop offset="0.311" stop-color="#902500"/><stop offset="0.511" stop-color="#901700"/><stop offset="0.844" stop-color="#900c00"/><stop offset="1.000" stop-color="#008b90"/></linearGradient><linearGradient id="o161" gradientUnits="userSpaceOnUse" x1="224" y1="125" x2="933" y2="-429"><stop offset="0.000" stop-color="#909090"/><stop offset="0.022" stop-color="#907769"/><stop offset="0.048" stop-color="#906448"/><stop offset="0.122" stop-color="#904308"/><stop offset="0.142" stop-color="#903e00"/><stop offset="0.267" stop-color="#902800"/><stop offset="0.433" stop-color="#901900"/><stop offset="1.000" stop-color="#900400"/></linearGradient><linearGradient id="o162" gradientUnits="userSpaceOnUse" x1="224" y1="125" x2="952" y2="-404"><stop offset="0.000" stop-color="#909090"/><stop offset="0.022" stop-color="#907769"/><stop offset="0.048" stop-color="#906249"/><stop offset="0.091" stop-color="#904c22"/><stop offset="0.142" stop-color="#903c00"/><stop offset="0.228" stop-color="#902b00"/><stop offset="0.367" stop-color="#901b00"/><stop offset="0.600" stop-color="#900d00"/><stop offset="1.000" stop-color="#900000"/></linearGradient><linearGradient id="o163" gradientUnits="userSpaceOnUse" x1="224" y1="125" x2="970" y2="-378"><stop offset="0.000" stop-color="#909090"/><stop offset="0.022" stop-color="#907669"/><stop offset="0.048" stop-color="#90614a"/><stop offset="0.106" stop-color="#90451a"/><stop offset="0.142" stop-color="#903a00"/><stop offset="0.267" stop-color="#902300"/><stop offset="0.433" stop-color="#901400"/><stop offset="0.844" stop-color="#900000"/><stop offset="1.000" stop-color="#900000"/></linearGradient><linearGradient id="o164" gradientUnits="userSpaceOnUse" x1="224" y1="125" x2="987" y2="-352"><stop offset="0.000" stop-color="#909090"/><stop offset="0.028" stop-color="#907062"/><stop offset="0.067" stop-color="#905539"/><stop offset="0.142" stop-color="#903804"/><stop offset="0.167" stop-color="#903200"/><stop offset="0.311" stop-color="#901c00"/><stop offset="0.511" stop-color="#900c00"/><stop offset="0.711" stop-color="#900100"/><stop offset="1.000" stop-color="#900000"/></linearGradient><linearGradient id="o165" gradientUnits="userSpaceOnUse" x1="224" y1="125" x2="1003" y2="-325"><stop offset="0.000" stop-color="#909090"/><stop offset="0.022" stop-color="#90756a"/><stop offset="0.057" stop-color="#905943"/><stop offset="0.106" stop-color="#90421f"/><stop offset="0.167" stop-color="#903100"/><stop offset="0.367" stop-color="#901400"/><stop offset="0.600" stop-color="#900300"/><stop offset="1.000" stop-color="#900000"/></linearGradient><linearGradient id="o166" gradientUnits="userSpaceOnUse" x1="224" y1="125" x2="1018" y2="-297"><stop offset="0.000" stop-color="#909090"/><stop offset="0.028" stop-color="#906e63"/><stop offset="0.067" stop-color="#90523c"/><stop offset="0.167" stop-color="#902f00"/><stop offset="0.311" stop-color="#901800"/><stop offset="0.600" stop-color="#900000"/><stop offset="1.000" stop-color="#900000"/></linearGradient><linearGradient id="o167" gradientUnits="userSpaceOnUse" x1="224" y1="125" x2="1033" y2="-269"><stop offset="0.000" stop-color="#909090"/><stop offset="0.022" stop-color="#90736b"/><stop offset="0.057" stop-color="#905746"/><stop offset="0.106" stop-color="#903f24"/><stop offset="0.167" stop-color="#902d03"/><stop offset="0.311" stop-color="#901500"/><stop offset="0.511" stop-color="#900200"/><stop offset="1.000" stop-color="#900000"/></linearGradient><linearGradient id="o168" gradientUnits="userSpaceOnUse" x1="224" y1="125" x2="1046" y2="-241"><stop offset="0.000" stop-color="#909090"/><stop offset="0.028" stop-color="#906d64"/><stop offset="0.067" stop-color="#90503f"/><stop offset="0.122" stop-color="#90381d"/><stop offset="0.194" stop-color="#902500"/><stop offset="0.311" stop-color="#901300"/><stop offset="0.511" stop-color="#900000"/><stop offset="1.000" stop-color="#900000"/></linearGradient><linearGradient id="o169" gradientUnits="userSpaceOnUse" x1="224" y1="125" x2="1058" y2="-212"><stop offset="0.000" stop-color="#909090"/><stop offset="0.022" stop-color="#90726c"/><stop offset="0.057" stop-color="#905548"/><stop offset="0.122" stop-color="#903720"/><stop offset="0.194" stop-color="#902400"/><stop offset="0.433" stop-color="#900300"/><stop offset="1.000" stop-color="#900000"/></linearGradient><linearGradient id="o170" gradientUnits="userSpaceOnUse" x1="224" y1="125" x2="1070" y2="-183"><stop offset="0.000" stop-color="#909090"/><stop offset="0.028" stop-color="#906c66"/><stop offset="0.067" stop-color="#904e42"/><stop offset="0.142" stop-color="#902f1a"/><stop offset="0.194" stop-color="#902206"/><stop offset="0.228" stop-color="#901c00"/><stop offset="0.433" stop-color="#900000"/><stop offset="1.000" stop-color="#900000"/></linearGradient><linearGradient id="o171" gradientUnits="userSpaceOnUse" x1="224" y1="125" x2="1080" y2="-153"><stop offset="0.000" stop-color="#909090"/><stop offset="0.033" stop-color="#906660"/><stop offset="0.078" stop-color="#90473c"/><stop offset="0.122" stop-color="#903425"/><stop offset="0.228" stop-color="#901a00"/><stop offset="0.433" stop-color="#900000"/><stop offset="1.000" stop-color="#900000"/></linearGradient><linearGradient id="o172" gradientUnits="userSpaceOnUse" x1="224" y1="125" x2="1089" y2="-123"><stop offset="0.000" stop-color="#909090"/><stop offset="0.033" stop-color="#906661"/><stop offset="0.078" stop-color="#90463e"/><stop offset="0.142" stop-color="#902c20"/><stop offset="0.228" stop-color="#901805"/><stop offset="0.367" stop-color="#900200"/><stop offset="1.000" stop-color="#900000"/></linearGradient><linearGradient id="o173" gradientUnits="userSpaceOnUse" x1="224" y1="125" x2="1097" y2="-93"><stop offset="0.000" stop-color="#909090"/><stop offset="0.033" stop-color="#906562"/><stop offset="0.078" stop-color="#904540"/><stop offset="0.167" stop-color="#90241b"/><stop offset="0.267" stop-color="#900f00"/><stop offset="0.367" stop-color="#900000"/><stop offset="1.000" stop-color="#900000"/></linearGradient><linearGradient id="o174" gradientUnits="userSpaceOnUse" x1="224" y1="125" x2="1104" y2="-62"><stop offset="0.000" stop-color="#909090"/><stop offset="0.022" stop-color="#90706f"/><stop offset="0.048" stop-color="#905856"/><stop offset="0.106" stop-color="#903734"/><stop offset="0.194" stop-color="#901c17"/><stop offset="0.311" stop-color="#900600"/><stop offset="0.367" stop-color="#900000"/><stop offset="1.000" stop-color="#900000"/></linearGradient><linearGradient id="o175" gradientUnits="userSpaceOnUse" x1="224" y1="125" x2="1110" y2="-31"><stop offset="0.000" stop-color="#909090"/><stop offset="0.018" stop-color="#907575"/><stop offset="0.040" stop-color="#905e5e"/><stop offset="0.106" stop-color="#903637"/><stop offset="0.194" stop-color="#901b1b"/><stop offset="0.311" stop-color="#900304"/><stop offset="1.000" stop-color="#900000"/></linearGradient><linearGradient id="o176" gradientUnits="userSpaceOnUse" x1="224" y1="125" x2="1115" y2="-0"><stop offset="0.000" stop-color="#909090"/><stop offset="0.014" stop-color="#90797a"/><stop offset="0.040" stop-color="#905e5f"/><stop offset="0.106" stop-color="#903539"/><stop offset="0.167" stop-color="#902025"/><stop offset="0.311" stop-color="#90000b"/><stop offset="0.433" stop-color="#900000"/><stop offset="1.000" stop-color="#900000"/></linearGradient><linearGradient id="o177" gradientUnits="userSpaceOnUse" x1="224" y1="125" x2="1119" y2="31"><stop offset="0.000" stop-color="#909090"/><stop offset="0.022" stop-color="#906f72"/><stop offset="0.048" stop-color="#90565b"/><stop offset="0.106" stop-color="#90343c"/><stop offset="0.194" stop-color="#901822"/><stop offset="0.311" stop-color="#900010"/><stop offset="0.433" stop-color="#900001"/><stop offset="1.000" stop-color="#900000"/></linearGradient><linearGradient id="o178" gradientUnits="userSpaceOnUse" x1="224" y1="125" x2="1122" y2="62"><stop offset="0.000" stop-color="#909090"/><stop offset="0.033" stop-color="#906368"/><stop offset="0.091" stop-color="#903a44"/><stop offset="0.167" stop-color="#901e2c"/><stop offset="0.267" stop-color="#90051a"/><stop offset="0.311" stop-color="#900015"/><stop offset="0.511" stop-color="#900002"/><stop offset="1.000" stop-color="#900000"/></linearGradient><linearGradient id="o179" gradientUnits="userSpaceOnUse" x1="224" y1="125" x2="1123" y2="94"><stop offset="0.000" stop-color="#909090"/><stop offset="0.014" stop-color="#90797c"/><stop offset="0.040" stop-color="#905c63"/><stop offset="0.078" stop-color="#90414c"/><stop offset="0.167" stop-color="#901d2f"/><stop offset="0.267" stop-color="#90031e"/><stop offset="0.600" stop-color="#900004"/><stop offset="1.000" stop-color="#900000"/></linearGradient><linearGradient id="i0" gradientUnits="userSpaceOnUse" x1="224" y1="125" x2="1124" y2="125"><stop offset="0.000" stop-color="#ffffff"/><stop offset="0.014" stop-color="#ffd6dd"/><stop offset="0.033" stop-color="#ffaebc"/><stop offset="0.067" stop-color="#ff7e94"/><stop offset="0.091" stop-color="#ff6580"/><stop offset="0.167" stop-color="#ff3159"/><stop offset="0.267" stop-color="#ff003d"/><stop offset="0.511" stop-color="#ff001b"/><stop offset="0.844" stop-color="#ff0003"/><stop offset="1.000" stop-color="#ff0000"/></linearGradient><linearGradient id="i1" gradientUnits="userSpaceOnUse" x1="224" y1="125" x2="1123" y2="163"><stop offset="0.000" stop-color="#ffffff"/><stop offset="0.018" stop-color="#ffced8"/><stop offset="0.040" stop-color="#ffa2b5"/><stop offset="0.067" stop-color="#ff7d99"/><stop offset="0.091" stop-color="#ff6486"/><stop offset="0.167" stop-color="#ff2f60"/><stop offset="0.267" stop-color="#ff0046"/><stop offset="0.433" stop-color="#ff002e"/><stop offset="0.600" stop-color="#ff0020"/><stop offset="1.000" stop-color="#ff000e"/></linearGradient><linearGradient id="i2" gradientUnits="userSpaceOnUse" x1="224" y1="125" x2="1121" y2="200"><stop offset="0.000" stop-color="#ffffff"/><stop offset="0.018" stop-color="#ffced9"/><stop offset="0.040" stop-color="#ffa2b8"/><stop offset="0.057" stop-color="#ff89a6"/><stop offset="0.091" stop-color="#ff638b"/><stop offset="0.167" stop-color="#ff2d67"/><stop offset="0.228" stop-color="#ff0d56"/><stop offset="0.267" stop-color="#ff004e"/><stop offset="0.511" stop-color="#ff0032"/><stop offset="1.000" stop-color="#ff001c"/></linearGradient><linearGradient id="i3" gradientUnits="userSpaceOnUse" x1="224" y1="125" x2="1117" y2="238"><stop offset="0.000" stop-color="#ffffff"/><stop offset="0.011" stop-color="#ffdee7"/><stop offset="0.033" stop-color="#ffadc4"/><stop offset="0.067" stop-color="#ff7ca1"/><stop offset="0.091" stop-color="#ff6290"/><stop offset="0.167" stop-color="#ff2b6e"/><stop offset="0.228" stop-color="#ff0a5e"/><stop offset="0.267" stop-color="#ff0056"/><stop offset="0.511" stop-color="#ff003c"/><stop offset="1.000" stop-color="#ff0029"/></linearGradient><linearGradient id="i4" gradientUnits="userSpaceOnUse" x1="224" y1="125" x2="1111" y2="275"><stop offset="0.000" stop-color="#ffffff"/><stop offset="0.011" stop-color="#ffdee8"/><stop offset="0.033" stop-color="#ffadc7"/><stop offset="0.057" stop-color="#ff88ae"/><stop offset="0.078" stop-color="#ff6f9e"/><stop offset="0.142" stop-color="#ff397d"/><stop offset="0.228" stop-color="#ff0666"/><stop offset="0.267" stop-color="#ff005f"/><stop offset="0.433" stop-color="#ff004b"/><stop offset="1.000" stop-color="#ff0034"/></linearGradient><linearGradient id="i5" gradientUnits="userSpaceOnUse" x1="224" y1="125" x2="1104" y2="312"><stop offset="0.000" stop-color="#ffffff"/><stop offset="0.011" stop-color="#ffdeea"/><stop offset="0.033" stop-color="#ffadca"/><stop offset="0.078" stop-color="#ff6ea3"/><stop offset="0.142" stop-color="#ff3784"/><stop offset="0.228" stop-color="#ff016e"/><stop offset="0.367" stop-color="#ff005b"/><stop offset="0.511" stop-color="#ff0050"/><stop offset="1.000" stop-color="#ff0040"/></linearGradient><linearGradient id="i6" gradientUnits="userSpaceOnUse" x1="224" y1="125" x2="1096" y2="349"><stop offset="0.000" stop-color="#ffffff"/><stop offset="0.014" stop-color="#ffd6e6"/><stop offset="0.033" stop-color="#ffadcd"/><stop offset="0.078" stop-color="#ff6ea8"/><stop offset="0.142" stop-color="#ff368b"/><stop offset="0.228" stop-color="#ff0076"/><stop offset="0.433" stop-color="#ff005e"/><stop offset="1.000" stop-color="#ff004b"/></linearGradient><linearGradient id="i7" gradientUnits="userSpaceOnUse" x1="224" y1="125" x2="1085" y2="385"><stop offset="0.000" stop-color="#ffffff"/><stop offset="0.014" stop-color="#ffd6e7"/><stop offset="0.028" stop-color="#ffb8d6"/><stop offset="0.048" stop-color="#ff95c2"/><stop offset="0.078" stop-color="#ff6ead"/><stop offset="0.142" stop-color="#ff3592"/><stop offset="0.228" stop-color="#ff007e"/><stop offset="0.311" stop-color="#ff0072"/><stop offset="0.511" stop-color="#ff0063"/><stop offset="1.000" stop-color="#ff0056"/></linearGradient><linearGradient id="i8" gradientUnits="userSpaceOnUse" x1="224" y1="125" x2="1074" y2="421"><stop offset="0.000" stop-color="#ffffff"/><stop offset="0.011" stop-color="#ffdfed"/><stop offset="0.033" stop-color="#ffaed3"/><stop offset="0.057" stop-color="#ff88c0"/><stop offset="0.078" stop-color="#ff6eb3"/><stop offset="0.142" stop-color="#ff3499"/><stop offset="0.228" stop-color="#ff0086"/><stop offset="0.511" stop-color="#ff006d"/><stop offset="1.000" stop-color="#ff0060"/></linearGradient><linearGradient id="i9" gradientUnits="userSpaceOnUse" x1="224" y1="125" x2="1061" y2="456"><stop offset="0.000" stop-color="#ffffff"/><stop offset="0.011" stop-color="#ffdfef"/><stop offset="0.033" stop-color="#ffaed6"/><stop offset="0.067" stop-color="#ff7bbe"/><stop offset="0.091" stop-color="#ff5fb2"/><stop offset="0.167" stop-color="#ff229a"/><stop offset="0.228" stop-color="#ff008f"/><stop offset="0.511" stop-color="#ff0078"/><stop offset="1.000" stop-color="#ff006b"/></linearGradient><linearGradient id="i10" gradientUnits="userSpaceOnUse" x1="224" y1="125" x2="1046" y2="491"><stop offset="0.000" stop-color="#ffffff"/><stop offset="0.018" stop-color="#ffcfe9"/><stop offset="0.033" stop-color="#ffafda"/><stop offset="0.078" stop-color="#ff6ebe"/><stop offset="0.106" stop-color="#ff51b3"/><stop offset="0.167" stop-color="#ff21a2"/><stop offset="0.194" stop-color="#ff0d9d"/><stop offset="0.228" stop-color="#ff0097"/><stop offset="0.511" stop-color="#ff0082"/><stop offset="1.000" stop-color="#ff0077"/></linearGradient><linearGradient id="i11" gradientUnits="userSpaceOnUse" x1="224" y1="125" x2="1030" y2="525"><stop offset="0.000" stop-color="#ffffff"/><stop offset="0.018" stop-color="#ffd0eb"/><stop offset="0.040" stop-color="#ffa4d9"/><stop offset="0.067" stop-color="#ff7cc9"/><stop offset="0.091" stop-color="#ff60be"/><stop offset="0.194" stop-color="#ff0ba5"/><stop offset="0.228" stop-color="#ff00a0"/><stop offset="0.511" stop-color="#ff008c"/><stop offset="1.000" stop-color="#ff0082"/></linearGradient><linearGradient id="i12" gradientUnits="userSpaceOnUse" x1="224" y1="125" x2="1013" y2="559"><stop offset="0.000" stop-color="#ffffff"/><stop offset="0.018" stop-color="#ffd0ed"/><stop offset="0.040" stop-color="#ffa5dd"/><stop offset="0.091" stop-color="#ff60c5"/><stop offset="0.194" stop-color="#ff0aae"/><stop offset="0.228" stop-color="#ff00aa"/><stop offset="0.511" stop-color="#ff0097"/><stop offset="1.000" stop-color="#ff008e"/></linearGradient><linearGradient id="i13" gradientUnits="userSpaceOnUse" x1="224" y1="125" x2="994" y2="591"><stop offset="0.000" stop-color="#ffffff"/><stop offset="0.018" stop-color="#ffd1ef"/><stop offset="0.033" stop-color="#ffb1e5"/><stop offset="0.067" stop-color="#ff7ed4"/><stop offset="0.106" stop-color="#ff52c8"/><stop offset="0.194" stop-color="#ff08b7"/><stop offset="0.228" stop-color="#ff00b3"/><stop offset="0.433" stop-color="#ff00a5"/><stop offset="1.000" stop-color="#ff0099"/></linearGradient><linearGradient id="i14" gradientUnits="userSpaceOnUse" x1="224" y1="125" x2="973" y2="623"><stop offset="0.000" stop-color="#ffffff"/><stop offset="0.033" stop-color="#ffb2e8"/><stop offset="0.067" stop-color="#ff7fda"/><stop offset="0.122" stop-color="#ff43cb"/><stop offset="0.194" stop-color="#ff07c0"/><stop offset="0.228" stop-color="#ff00bd"/><stop offset="0.511" stop-color="#ff00ae"/><stop offset="1.000" stop-color="#ff00a5"/></linearGradient><linearGradient id="i15" gradientUnits="userSpaceOnUse" x1="224" y1="125" x2="952" y2="654"><stop offset="0.000" stop-color="#ffffff"/><stop offset="0.028" stop-color="#ffbeef"/><stop offset="0.067" stop-color="#ff80e0"/><stop offset="0.122" stop-color="#ff44d4"/><stop offset="0.194" stop-color="#ff06ca"/><stop offset="0.228" stop-color="#ff00c7"/><stop offset="0.433" stop-color="#ff00bd"/><stop offset="1.000" stop-color="#ff00b2"/></linearGradient><linearGradient id="i16" gradientUnits="userSpaceOnUse" x1="224" y1="125" x2="929" y2="684"><stop offset="0.000" stop-color="#ffffff"/><stop offset="0.028" stop-color="#ffbff2"/><stop offset="0.067" stop-color="#ff82e6"/><stop offset="0.106" stop-color="#ff55df"/><stop offset="0.194" stop-color="#ff06d4"/><stop offset="0.228" stop-color="#ff00d2"/><stop offset="1.000" stop-color="#ff00bf"/></linearGradient><linearGradient id="i17" gradientUnits="userSpaceOnUse" x1="224" y1="125" x2="905" y2="713"><stop offset="0.000" stop-color="#ffffff"/><stop offset="0.033" stop-color="#ffb6f4"/><stop offset="0.067" stop-color="#ff83ed"/><stop offset="0.106" stop-color="#ff56e7"/><stop offset="0.194" stop-color="#ff06df"/><stop offset="0.228" stop-color="#ff00dd"/><stop offset="1.000" stop-color="#ff00cd"/></linearGradient><linearGradient id="i18" gradientUnits="userSpaceOnUse" x1="224" y1="125" x2="880" y2="741"><stop offset="0.000" stop-color="#ffffff"/><stop offset="0.028" stop-color="#ffc2f9"/><stop offset="0.067" stop-color="#ff85f3"/><stop offset="0.106" stop-color="#ff58ef"/><stop offset="0.194" stop-color="#ff06ea"/><stop offset="0.228" stop-color="#ff00e9"/><stop offset="1.000" stop-color="#ff00dd"/></linearGradient><linearGradient id="i19" gradientUnits="userSpaceOnUse" x1="224" y1="125" x2="854" y2="768"><stop offset="0.000" stop-color="#ffffff"/><stop offset="0.022" stop-color="#ffcefd"/><stop offset="0.067" stop-color="#ff87fa"/><stop offset="0.122" stop-color="#ff49f8"/><stop offset="0.194" stop-color="#ff06f6"/><stop offset="0.228" stop-color="#ff00f6"/><stop offset="1.000" stop-color="#ff00ef"/></linearGradient><linearGradient id="i20" gradientUnits="userSpaceOnUse" x1="224" y1="125" x2="826" y2="794"><stop offset="0.000" stop-color="#ffffff"/><stop offset="0.028" stop-color="#fec4ff"/><stop offset="0.067" stop-color="#fd88ff"/><stop offset="0.122" stop-color="#fc4aff"/><stop offset="0.194" stop-color="#fb07ff"/><stop offset="0.228" stop-color="#fb00ff"/><stop offset="1.000" stop-color="#fc00ff"/></linearGradient><linearGradient id="i21" gradientUnits="userSpaceOnUse" x1="224" y1="125" x2="798" y2="819"><stop offset="0.000" stop-color="#ffffff"/><stop offset="0.028" stop-color="#fac3ff"/><stop offset="0.067" stop-color="#f687ff"/><stop offset="0.106" stop-color="#f35aff"/><stop offset="0.194" stop-color="#ef08ff"/><stop offset="0.228" stop-color="#ee00ff"/><stop offset="1.000" stop-color="#e900ff"/></linearGradient><linearGradient id="i22" gradientUnits="userSpaceOnUse" x1="224" y1="125" x2="768" y2="842"><stop offset="0.000" stop-color="#ffffff"/><stop offset="0.018" stop-color="#f9d6ff"/><stop offset="0.040" stop-color="#f4adff"/><stop offset="0.091" stop-color="#ec69ff"/><stop offset="0.194" stop-color="#e309ff"/><stop offset="0.228" stop-color="#e200ff"/><stop offset="1.000" stop-color="#d600ff"/></linearGradient><linearGradient id="i23" gradientUnits="userSpaceOnUse" x1="224" y1="125" x2="737" y2="864"><stop offset="0.000" stop-color="#ffffff"/><stop offset="0.033" stop-color="#f1b7ff"/><stop offset="0.067" stop-color="#e985ff"/><stop offset="0.091" stop-color="#e468ff"/><stop offset="0.194" stop-color="#d80bff"/><stop offset="0.228" stop-color="#d600ff"/><stop offset="1.000" stop-color="#c400ff"/></linearGradient><linearGradient id="i24" gradientUnits="userSpaceOnUse" x1="224" y1="125" x2="706" y2="885"><stop offset="0.000" stop-color="#ffffff"/><stop offset="0.018" stop-color="#f4d5ff"/><stop offset="0.040" stop-color="#ebabff"/><stop offset="0.091" stop-color="#dc67ff"/><stop offset="0.194" stop-color="#cd0dff"/><stop offset="0.228" stop-color="#ca00ff"/><stop offset="1.000" stop-color="#b300ff"/></linearGradient><linearGradient id="i25" gradientUnits="userSpaceOnUse" x1="224" y1="125" x2="674" y2="905"><stop offset="0.000" stop-color="#ffffff"/><stop offset="0.014" stop-color="#f4dbff"/><stop offset="0.033" stop-color="#e9b6ff"/><stop offset="0.057" stop-color="#df91ff"/><stop offset="0.091" stop-color="#d467ff"/><stop offset="0.194" stop-color="#c20fff"/><stop offset="0.228" stop-color="#bf00ff"/><stop offset="0.433" stop-color="#b200ff"/><stop offset="1.000" stop-color="#a200ff"/></linearGradient><linearGradient id="i26" gradientUnits="userSpaceOnUse" x1="224" y1="125" x2="641" y2="923"><stop offset="0.000" stop-color="#ffffff"/><stop offset="0.033" stop-color="#e6b5ff"/><stop offset="0.067" stop-color="#d583ff"/><stop offset="0.091" stop-color="#cd67ff"/><stop offset="0.142" stop-color="#c038ff"/><stop offset="0.194" stop-color="#b811ff"/><stop offset="0.228" stop-color="#b400ff"/><stop offset="0.433" stop-color="#a500ff"/><stop offset="1.000" stop-color="#9100ff"/></linearGradient><linearGradient id="i27" gradientUnits="userSpaceOnUse" x1="224" y1="125" x2="607" y2="939"><stop offset="0.000" stop-color="#ffffff"/><stop offset="0.018" stop-color="#edd3ff"/><stop offset="0.033" stop-color="#e2b5ff"/><stop offset="0.057" stop-color="#d490ff"/><stop offset="0.091" stop-color="#c667ff"/><stop offset="0.142" stop-color="#b739ff"/><stop offset="0.228" stop-color="#a900ff"/><stop offset="0.367" stop-color="#9c00ff"/><stop offset="1.000" stop-color="#8100ff"/></linearGradient><linearGradient id="i28" gradientUnits="userSpaceOnUse" x1="224" y1="125" x2="573" y2="955"><stop offset="0.000" stop-color="#ffffff"/><stop offset="0.014" stop-color="#eedaff"/><stop offset="0.040" stop-color="#d9a9ff"/><stop offset="0.091" stop-color="#bf67ff"/><stop offset="0.142" stop-color="#af3aff"/><stop offset="0.228" stop-color="#9e00ff"/><stop offset="0.433" stop-color="#8c00ff"/><stop offset="1.000" stop-color="#7100ff"/></linearGradient><linearGradient id="i29" gradientUnits="userSpaceOnUse" x1="224" y1="125" x2="538" y2="969"><stop offset="0.000" stop-color="#ffffff"/><stop offset="0.014" stop-color="#eddaff"/><stop offset="0.033" stop-color="#dab4ff"/><stop offset="0.057" stop-color="#c990ff"/><stop offset="0.091" stop-color="#b867ff"/><stop offset="0.142" stop-color="#a63bff"/><stop offset="0.228" stop-color="#9400ff"/><stop offset="0.433" stop-color="#8000ff"/><stop offset="1.000" stop-color="#6000ff"/></linearGradient><linearGradient id="i30" gradientUnits="userSpaceOnUse" x1="224" y1="125" x2="502" y2="981"><stop offset="0.000" stop-color="#ffffff"/><stop offset="0.014" stop-color="#ebdaff"/><stop offset="0.033" stop-color="#d7b4ff"/><stop offset="0.078" stop-color="#b776ff"/><stop offset="0.122" stop-color="#a44cff"/><stop offset="0.228" stop-color="#8a02ff"/><stop offset="0.311" stop-color="#7e00ff"/><stop offset="0.600" stop-color="#6700ff"/><stop offset="1.000" stop-color="#5000ff"/></linearGradient><linearGradient id="i31" gradientUnits="userSpaceOnUse" x1="224" y1="125" x2="466" y2="992"><stop offset="0.000" stop-color="#ffffff"/><stop offset="0.028" stop-color="#d9beff"/><stop offset="0.067" stop-color="#b883ff"/><stop offset="0.122" stop-color="#9c4dff"/><stop offset="0.228" stop-color="#8007ff"/><stop offset="0.267" stop-color="#7900ff"/><stop offset="0.711" stop-color="#5000ff"/><stop offset="1.000" stop-color="#3f00ff"/></linearGradient><linearGradient id="i32" gradientUnits="userSpaceOnUse" x1="224" y1="125" x2="429" y2="1001"><stop offset="0.000" stop-color="#ffffff"/><stop offset="0.022" stop-color="#ddc9ff"/><stop offset="0.040" stop-color="#c9a9ff"/><stop offset="0.091" stop-color="#a369ff"/><stop offset="0.167" stop-color="#852fff"/><stop offset="0.228" stop-color="#760bff"/><stop offset="0.267" stop-color="#6f00ff"/><stop offset="0.711" stop-color="#4100ff"/><stop offset="1.000" stop-color="#2d00ff"/></linearGradient><linearGradient id="i33" gradientUnits="userSpaceOnUse" x1="224" y1="125" x2="392" y2="1009"><stop offset="0.000" stop-color="#ffffff"/><stop offset="0.022" stop-color="#dac9ff"/><stop offset="0.040" stop-color="#c5a9ff"/><stop offset="0.091" stop-color="#9d6aff"/><stop offset="0.167" stop-color="#7c31ff"/><stop offset="0.228" stop-color="#6c0fff"/><stop offset="0.267" stop-color="#6400ff"/><stop offset="0.711" stop-color="#3100ff"/><stop offset="1.000" stop-color="#1900ff"/></linearGradient><linearGradient id="i34" gradientUnits="userSpaceOnUse" x1="224" y1="125" x2="355" y2="1015"><stop offset="0.000" stop-color="#ffffff"/><stop offset="0.022" stop-color="#d8c9ff"/><stop offset="0.040" stop-color="#c1aaff"/><stop offset="0.067" stop-color="#a885ff"/><stop offset="0.091" stop-color="#966bff"/><stop offset="0.167" stop-color="#7334ff"/><stop offset="0.267" stop-color="#5900ff"/><stop offset="1.000" stop-color="#0000ff"/></linearGradient><linearGradient id="i35" gradientUnits="userSpaceOnUse" x1="224" y1="125" x2="318" y2="1020"><stop offset="0.000" stop-color="#ffffff"/><stop offset="0.014" stop-color="#e2daff"/><stop offset="0.040" stop-color="#bdaaff"/><stop offset="0.067" stop-color="#a286ff"/><stop offset="0.091" stop-color="#906dff"/><stop offset="0.167" stop-color="#6a36ff"/><stop offset="0.267" stop-color="#4f00ff"/><stop offset="0.711" stop-color="#0c00ff"/><stop offset="0.844" stop-color="#0000ff"/><stop offset="1.000" stop-color="#0000ff"/></linearGradient><linearGradient id="i36" gradientUnits="userSpaceOnUse" x1="224" y1="125" x2="280" y2="1023"><stop offset="0.000" stop-color="#ffffff"/><stop offset="0.018" stop-color="#dbd3ff"/><stop offset="0.040" stop-color="#baabff"/><stop offset="0.067" stop-color="#9d87ff"/><stop offset="0.091" stop-color="#896eff"/><stop offset="0.167" stop-color="#6238ff"/><stop offset="0.267" stop-color="#4407ff"/><stop offset="0.311" stop-color="#3a00ff"/><stop offset="0.511" stop-color="#1d00ff"/><stop offset="0.600" stop-color="#0a00ff"/><stop offset="0.711" stop-color="#0000ff"/><stop offset="1.000" stop-color="#0000ff"/></linearGradient><linearGradient id="i37" gradientUnits="userSpaceOnUse" x1="224" y1="125" x2="243" y2="1025"><stop offset="0.000" stop-color="#ffffff"/><stop offset="0.018" stop-color="#d9d3ff"/><stop offset="0.040" stop-color="#b6abff"/><stop offset="0.067" stop-color="#9888ff"/><stop offset="0.106" stop-color="#7963ff"/><stop offset="0.194" stop-color="#4e2dff"/><stop offset="0.267" stop-color="#380dff"/><stop offset="0.311" stop-color="#2e00ff"/><stop offset="0.600" stop-color="#0000ff"/><stop offset="1.000" stop-color="#0000ff"/></linearGradient><linearGradient id="i38" gradientUnits="userSpaceOnUse" x1="224" y1="125" x2="205" y2="1025"><stop offset="0.000" stop-color="#ffffff"/><stop offset="0.018" stop-color="#d7d4ff"/><stop offset="0.040" stop-color="#b3acff"/><stop offset="0.067" stop-color="#9389ff"/><stop offset="0.106" stop-color="#7265ff"/><stop offset="0.142" stop-color="#5c4bff"/><stop offset="0.194" stop-color="#4430ff"/><stop offset="0.311" stop-color="#2100ff"/><stop offset="0.433" stop-color="#0600ff"/><stop offset="0.511" stop-color="#0000ff"/><stop offset="1.000" stop-color="#0000ff"/></linearGradient><linearGradient id="i39" gradientUnits="userSpaceOnUse" x1="224" y1="125" x2="167" y2="1023"><stop offset="0.000" stop-color="#ffffff"/><stop offset="0.018" stop-color="#d5d4ff"/><stop offset="0.040" stop-color="#afadff"/><stop offset="0.067" stop-color="#8e8bff"/><stop offset="0.106" stop-color="#6c67ff"/><stop offset="0.194" stop-color="#3a33ff"/><stop offset="0.311" stop-color="#1205ff"/><stop offset="0.367" stop-color="#0000ff"/><stop offset="1.000" stop-color="#0000ff"/></linearGradient><linearGradient id="i40" gradientUnits="userSpaceOnUse" x1="224" y1="125" x2="130" y2="1020"><stop offset="0.000" stop-color="#ffffff"/><stop offset="0.018" stop-color="#d4d5ff"/><stop offset="0.040" stop-color="#acaeff"/><stop offset="0.067" stop-color="#898cff"/><stop offset="0.106" stop-color="#6569ff"/><stop offset="0.142" stop-color="#4b50ff"/><stop offset="0.194" stop-color="#3036ff"/><stop offset="0.311" stop-color="#000bff"/><stop offset="0.367" stop-color="#0000ff"/><stop offset="1.000" stop-color="#0000ff"/></linearGradient><linearGradient id="i41" gradientUnits="userSpaceOnUse" x1="224" y1="125" x2="92" y2="1015"><stop offset="0.000" stop-color="#ffffff"/><stop offset="0.014" stop-color="#d9dcff"/><stop offset="0.040" stop-color="#a9afff"/><stop offset="0.067" stop-color="#848eff"/><stop offset="0.091" stop-color="#6b77ff"/><stop offset="0.167" stop-color="#3446ff"/><stop offset="0.267" stop-color="#001fff"/><stop offset="0.367" stop-color="#0000ff"/><stop offset="1.000" stop-color="#0004ff"/></linearGradient><linearGradient id="i42" gradientUnits="userSpaceOnUse" x1="224" y1="125" x2="55" y2="1009"><stop offset="0.000" stop-color="#ffffff"/><stop offset="0.018" stop-color="#d0d6ff"/><stop offset="0.033" stop-color="#b1baff"/><stop offset="0.078" stop-color="#7385ff"/><stop offset="0.142" stop-color="#3b56ff"/><stop offset="0.228" stop-color="#0330ff"/><stop offset="0.367" stop-color="#0006ff"/><stop offset="0.433" stop-color="#0000ff"/><stop offset="0.711" stop-color="#0000ff"/><stop offset="1.000" stop-color="#000cff"/></linearGradient><linearGradient id="i43" gradientUnits="userSpaceOnUse" x1="224" y1="125" x2="18" y2="1001"><stop offset="0.000" stop-color="#ffffff"/><stop offset="0.018" stop-color="#cfd7ff"/><stop offset="0.040" stop-color="#a3b2ff"/><stop offset="0.067" stop-color="#7b91ff"/><stop offset="0.091" stop-color="#5f7bff"/><stop offset="0.142" stop-color="#3259ff"/><stop offset="0.194" stop-color="#0b40ff"/><stop offset="0.228" stop-color="#0034ff"/><stop offset="0.433" stop-color="#0000ff"/><stop offset="0.711" stop-color="#0001ff"/><stop offset="1.000" stop-color="#0012ff"/></linearGradient><linearGradient id="i44" gradientUnits="userSpaceOnUse" x1="224" y1="125" x2="-18" y2="992"><stop offset="0.000" stop-color="#ffffff"/><stop offset="0.011" stop-color="#dee5ff"/><stop offset="0.033" stop-color="#acbdff"/><stop offset="0.078" stop-color="#6889ff"/><stop offset="0.122" stop-color="#3a67ff"/><stop offset="0.194" stop-color="#0044ff"/><stop offset="0.311" stop-color="#0020ff"/><stop offset="0.433" stop-color="#0004ff"/><stop offset="0.600" stop-color="#0000ff"/><stop offset="1.000" stop-color="#0018ff"/></linearGradient><linearGradient id="i45" gradientUnits="userSpaceOnUse" x1="224" y1="125" x2="-54" y2="981"><stop offset="0.000" stop-color="#ffffff"/><stop offset="0.028" stop-color="#b5c7ff"/><stop offset="0.067" stop-color="#7295ff"/><stop offset="0.106" stop-color="#4375ff"/><stop offset="0.167" stop-color="#0653ff"/><stop offset="0.194" stop-color="#0048ff"/><stop offset="0.311" stop-color="#0025ff"/><stop offset="0.511" stop-color="#0000ff"/><stop offset="1.000" stop-color="#001dff"/></linearGradient><linearGradient id="i46" gradientUnits="userSpaceOnUse" x1="224" y1="125" x2="-90" y2="969"><stop offset="0.000" stop-color="#ffffff"/><stop offset="0.028" stop-color="#b3c8ff"/><stop offset="0.057" stop-color="#7da2ff"/><stop offset="0.106" stop-color="#3c78ff"/><stop offset="0.167" stop-color="#0057ff"/><stop offset="0.311" stop-color="#002aff"/><stop offset="0.511" stop-color="#0006ff"/><stop offset="1.000" stop-color="#0022ff"/></linearGradient><linearGradient id="i47" gradientUnits="userSpaceOnUse" x1="224" y1="125" x2="-125" y2="955"><stop offset="0.000" stop-color="#ffffff"/><stop offset="0.009" stop-color="#e2ebff"/><stop offset="0.028" stop-color="#b1c9ff"/><stop offset="0.057" stop-color="#79a4ff"/><stop offset="0.091" stop-color="#4785ff"/><stop offset="0.142" stop-color="#0866ff"/><stop offset="0.167" stop-color="#005bff"/><stop offset="0.311" stop-color="#002fff"/><stop offset="0.511" stop-color="#000eff"/><stop offset="1.000" stop-color="#0027ff"/></linearGradient><linearGradient id="i48" gradientUnits="userSpaceOnUse" x1="224" y1="125" x2="-159" y2="939"><stop offset="0.000" stop-color="#ffffff"/><stop offset="0.022" stop-color="#bdd3ff"/><stop offset="0.057" stop-color="#76a6ff"/><stop offset="0.091" stop-color="#4188ff"/><stop offset="0.142" stop-color="#0069ff"/><stop offset="0.267" stop-color="#003eff"/><stop offset="0.511" stop-color="#0015ff"/><stop offset="1.000" stop-color="#002cff"/></linearGradient><linearGradient id="i49" gradientUnits="userSpaceOnUse" x1="224" y1="125" x2="-193" y2="923"><stop offset="0.000" stop-color="#ffffff"/><stop offset="0.009" stop-color="#e1ecff"/><stop offset="0.028" stop-color="#aeccff"/><stop offset="0.057" stop-color="#72a9ff"/><stop offset="0.091" stop-color="#3b8bff"/><stop offset="0.122" stop-color="#0e78ff"/><stop offset="0.142" stop-color="#006dff"/><stop offset="0.267" stop-color="#0043ff"/><stop offset="0.511" stop-color="#001cff"/><stop offset="0.600" stop-color="#001bff"/><stop offset="1.000" stop-color="#0031ff"/></linearGradient><linearGradient id="i50" gradientUnits="userSpaceOnUse" x1="224" y1="125" x2="-226" y2="905"><stop offset="0.000" stop-color="#ffffff"/><stop offset="0.014" stop-color="#d0e3ff"/><stop offset="0.040" stop-color="#90beff"/><stop offset="0.078" stop-color="#4b98ff"/><stop offset="0.122" stop-color="#007bff"/><stop offset="0.194" stop-color="#005cff"/><stop offset="0.267" stop-color="#0048ff"/><stop offset="0.511" stop-color="#0023ff"/><stop offset="0.600" stop-color="#0020ff"/><stop offset="1.000" stop-color="#0035ff"/></linearGradient><linearGradient id="i51" gradientUnits="userSpaceOnUse" x1="224" y1="125" x2="-258" y2="885"><stop offset="0.000" stop-color="#ffffff"/><stop offset="0.022" stop-color="#b9d7ff"/><stop offset="0.048" stop-color="#7db7ff"/><stop offset="0.091" stop-color="#2f92ff"/><stop offset="0.122" stop-color="#007fff"/><stop offset="0.194" stop-color="#0061ff"/><stop offset="0.267" stop-color="#004dff"/><stop offset="0.511" stop-color="#0029ff"/><stop offset="0.600" stop-color="#0024ff"/><stop offset="1.000" stop-color="#003aff"/></linearGradient><linearGradient id="i52" gradientUnits="userSpaceOnUse" x1="224" y1="125" x2="-290" y2="864"><stop offset="0.000" stop-color="#ffffff"/><stop offset="0.022" stop-color="#b8d9ff"/><stop offset="0.048" stop-color="#7bb9ff"/><stop offset="0.106" stop-color="#0e8cff"/><stop offset="0.122" stop-color="#0083ff"/><stop offset="0.194" stop-color="#0066ff"/><stop offset="0.311" stop-color="#004aff"/><stop offset="0.600" stop-color="#0028ff"/><stop offset="1.000" stop-color="#003eff"/></linearGradient><linearGradient id="i53" gradientUnits="userSpaceOnUse" x1="224" y1="125" x2="-320" y2="842"><stop offset="0.000" stop-color="#ffffff"/><stop offset="0.018" stop-color="#c4e1ff"/><stop offset="0.040" stop-color="#8ac4ff"/><stop offset="0.078" stop-color="#3ca2ff"/><stop offset="0.106" stop-color="#0390ff"/><stop offset="0.167" stop-color="#0074ff"/><stop offset="0.267" stop-color="#0058ff"/><stop offset="0.511" stop-color="#0036ff"/><stop offset="0.600" stop-color="#002fff"/><stop offset="1.000" stop-color="#0043ff"/></linearGradient><linearGradient id="i54" gradientUnits="userSpaceOnUse" x1="224" y1="125" x2="-350" y2="819"><stop offset="0.000" stop-color="#ffffff"/><stop offset="0.018" stop-color="#c4e2ff"/><stop offset="0.040" stop-color="#88c7ff"/><stop offset="0.067" stop-color="#4eaeff"/><stop offset="0.106" stop-color="#0094ff"/><stop offset="0.142" stop-color="#0082ff"/><stop offset="0.228" stop-color="#0066ff"/><stop offset="0.311" stop-color="#0055ff"/><stop offset="0.511" stop-color="#003dff"/><stop offset="0.600" stop-color="#0036ff"/><stop offset="0.711" stop-color="#0038ff"/><stop offset="1.000" stop-color="#0047ff"/></linearGradient><linearGradient id="i55" gradientUnits="userSpaceOnUse" x1="224" y1="125" x2="-378" y2="794"><stop offset="0.000" stop-color="#ffffff"/><stop offset="0.022" stop-color="#b6deff"/><stop offset="0.048" stop-color="#74c2ff"/><stop offset="0.091" stop-color="#16a1ff"/><stop offset="0.106" stop-color="#0098ff"/><stop offset="0.167" stop-color="#007eff"/><stop offset="0.267" stop-color="#0063ff"/><stop offset="0.511" stop-color="#0044ff"/><stop offset="0.711" stop-color="#003cff"/><stop offset="1.000" stop-color="#004bff"/></linearGradient><linearGradient id="i56" gradientUnits="userSpaceOnUse" x1="224" y1="125" x2="-406" y2="768"><stop offset="0.000" stop-color="#ffffff"/><stop offset="0.018" stop-color="#c2e5ff"/><stop offset="0.048" stop-color="#72c5ff"/><stop offset="0.091" stop-color="#0fa5ff"/><stop offset="0.106" stop-color="#009dff"/><stop offset="0.167" stop-color="#0083ff"/><stop offset="0.267" stop-color="#006aff"/><stop offset="0.511" stop-color="#004bff"/><stop offset="0.711" stop-color="#0041ff"/><stop offset="1.000" stop-color="#0050ff"/></linearGradient><linearGradient id="i57" gradientUnits="userSpaceOnUse" x1="224" y1="125" x2="-432" y2="741"><stop offset="0.000" stop-color="#ffffff"/><stop offset="0.011" stop-color="#d7efff"/><stop offset="0.033" stop-color="#95d5ff"/><stop offset="0.091" stop-color="#06a9ff"/><stop offset="0.106" stop-color="#00a2ff"/><stop offset="0.194" stop-color="#0080ff"/><stop offset="0.267" stop-color="#0070ff"/><stop offset="0.511" stop-color="#0052ff"/><stop offset="0.711" stop-color="#0046ff"/><stop offset="1.000" stop-color="#0055ff"/></linearGradient><linearGradient id="i58" gradientUnits="userSpaceOnUse" x1="224" y1="125" x2="-457" y2="713"><stop offset="0.000" stop-color="#ffffff"/><stop offset="0.014" stop-color="#ccecff"/><stop offset="0.033" stop-color="#94d8ff"/><stop offset="0.091" stop-color="#00aeff"/><stop offset="0.142" stop-color="#0097ff"/><stop offset="0.228" stop-color="#007eff"/><stop offset="0.433" stop-color="#0060ff"/><stop offset="0.711" stop-color="#004eff"/><stop offset="1.000" stop-color="#0059ff"/></linearGradient><linearGradient id="i59" gradientUnits="userSpaceOnUse" x1="224" y1="125" x2="-481" y2="684"><stop offset="0.000" stop-color="#ffffff"/><stop offset="0.028" stop-color="#a3dfff"/><stop offset="0.091" stop-color="#00b3ff"/><stop offset="0.142" stop-color="#009dff"/><stop offset="0.228" stop-color="#0085ff"/><stop offset="0.433" stop-color="#0068ff"/><stop offset="0.711" stop-color="#0056ff"/><stop offset="1.000" stop-color="#005eff"/></linearGradient><linearGradient id="i60" gradientUnits="userSpaceOnUse" x1="224" y1="125" x2="-504" y2="654"><stop offset="0.000" stop-color="#ffffff"/><stop offset="0.014" stop-color="#cceeff"/><stop offset="0.040" stop-color="#80d7ff"/><stop offset="0.078" stop-color="#1dbfff"/><stop offset="0.091" stop-color="#00b8ff"/><stop offset="0.167" stop-color="#009bff"/><stop offset="0.228" stop-color="#008cff"/><stop offset="0.433" stop-color="#0070ff"/><stop offset="0.844" stop-color="#005bff"/><stop offset="1.000" stop-color="#0063ff"/></linearGradient><linearGradient id="i61" gradientUnits="userSpaceOnUse" x1="224" y1="125" x2="-526" y2="623"><stop offset="0.000" stop-color="#ffffff"/><stop offset="0.014" stop-color="#ccf0ff"/><stop offset="0.048" stop-color="#6ad5ff"/><stop offset="0.078" stop-color="#18c3ff"/><stop offset="0.091" stop-color="#00bdff"/><stop offset="0.194" stop-color="#009bff"/><stop offset="0.367" stop-color="#007fff"/><stop offset="0.711" stop-color="#0068ff"/><stop offset="1.000" stop-color="#0068ff"/></linearGradient><linearGradient id="i62" gradientUnits="userSpaceOnUse" x1="224" y1="125" x2="-546" y2="591"><stop offset="0.000" stop-color="#ffffff"/><stop offset="0.033" stop-color="#92e2ff"/><stop offset="0.078" stop-color="#14c8ff"/><stop offset="0.091" stop-color="#00c2ff"/><stop offset="0.194" stop-color="#00a2ff"/><stop offset="0.367" stop-color="#0088ff"/><stop offset="0.711" stop-color="#0072ff"/><stop offset="1.000" stop-color="#006dff"/></linearGradient><linearGradient id="i63" gradientUnits="userSpaceOnUse" x1="224" y1="125" x2="-565" y2="559"><stop offset="0.000" stop-color="#ffffff"/><stop offset="0.022" stop-color="#b4edff"/><stop offset="0.078" stop-color="#10ceff"/><stop offset="0.091" stop-color="#00c8ff"/><stop offset="0.194" stop-color="#00aaff"/><stop offset="0.367" stop-color="#0092ff"/><stop offset="0.600" stop-color="#0082ff"/><stop offset="1.000" stop-color="#0075ff"/></linearGradient><linearGradient id="i64" gradientUnits="userSpaceOnUse" x1="224" y1="125" x2="-582" y2="525"><stop offset="0.000" stop-color="#ffffff"/><stop offset="0.022" stop-color="#b4efff"/><stop offset="0.067" stop-color="#31d8ff"/><stop offset="0.078" stop-color="#0bd3ff"/><stop offset="0.091" stop-color="#00ceff"/><stop offset="0.194" stop-color="#00b3ff"/><stop offset="0.367" stop-color="#009cff"/><stop offset="0.600" stop-color="#008dff"/><stop offset="1.000" stop-color="#0081ff"/></linearGradient><linearGradient id="i65" gradientUnits="userSpaceOnUse" x1="224" y1="125" x2="-598" y2="491"><stop offset="0.000" stop-color="#ffffff"/><stop offset="0.028" stop-color="#a3eeff"/><stop offset="0.067" stop-color="#2fddff"/><stop offset="0.078" stop-color="#07d9ff"/><stop offset="0.091" stop-color="#00d4ff"/><stop offset="0.194" stop-color="#00bcff"/><stop offset="0.367" stop-color="#00a7ff"/><stop offset="0.600" stop-color="#0099ff"/><stop offset="1.000" stop-color="#008eff"/></linearGradient><linearGradient id="i66" gradientUnits="userSpaceOnUse" x1="224" y1="125" x2="-613" y2="456"><stop offset="0.000" stop-color="#ffffff"/><stop offset="0.022" stop-color="#b5f4ff"/><stop offset="0.067" stop-color="#2ee2ff"/><stop offset="0.078" stop-color="#02dfff"/><stop offset="0.167" stop-color="#00caff"/><stop offset="0.367" stop-color="#00b3ff"/><stop offset="1.000" stop-color="#009cff"/></linearGradient><linearGradient id="i67" gradientUnits="userSpaceOnUse" x1="224" y1="125" x2="-626" y2="421"><stop offset="0.000" stop-color="#ffffff"/><stop offset="0.067" stop-color="#2de8ff"/><stop offset="0.078" stop-color="#00e5ff"/><stop offset="0.194" stop-color="#00d0ff"/><stop offset="0.367" stop-color="#00c0ff"/><stop offset="1.000" stop-color="#00acff"/></linearGradient><linearGradient id="i68" gradientUnits="userSpaceOnUse" x1="224" y1="125" x2="-638" y2="385"><stop offset="0.000" stop-color="#ffffff"/><stop offset="0.057" stop-color="#4df0ff"/><stop offset="0.078" stop-color="#00ecff"/><stop offset="0.194" stop-color="#00dbff"/><stop offset="0.367" stop-color="#00cfff"/><stop offset="1.000" stop-color="#00beff"/></linearGradient><linearGradient id="i69" gradientUnits="userSpaceOnUse" x1="224" y1="125" x2="-648" y2="349"><stop offset="0.000" stop-color="#ffffff"/><stop offset="0.057" stop-color="#4df5ff"/><stop offset="0.078" stop-color="#00f2ff"/><stop offset="0.433" stop-color="#00dcff"/><stop offset="1.000" stop-color="#00d3ff"/></linearGradient><linearGradient id="i70" gradientUnits="userSpaceOnUse" x1="224" y1="125" x2="-656" y2="312"><stop offset="0.000" stop-color="#ffffff"/><stop offset="0.057" stop-color="#4efbff"/><stop offset="0.078" stop-color="#00faff"/><stop offset="0.367" stop-color="#00f1ff"/><stop offset="1.000" stop-color="#00ebff"/></linearGradient><linearGradient id="i71" gradientUnits="userSpaceOnUse" x1="224" y1="125" x2="-664" y2="275"><stop offset="0.000" stop-color="#ffffff"/><stop offset="0.057" stop-color="#4efffd"/><stop offset="0.078" stop-color="#00fffd"/><stop offset="1.000" stop-color="#00fff7"/></linearGradient><linearGradient id="i72" gradientUnits="userSpaceOnUse" x1="224" y1="125" x2="-669" y2="238"><stop offset="0.000" stop-color="#ffffff"/><stop offset="0.057" stop-color="#4efff8"/><stop offset="0.078" stop-color="#00fff5"/><stop offset="0.433" stop-color="#00ffe3"/><stop offset="1.000" stop-color="#00ffda"/></linearGradient><linearGradient id="i73" gradientUnits="userSpaceOnUse" x1="224" y1="125" x2="-673" y2="200"><stop offset="0.000" stop-color="#ffffff"/><stop offset="0.057" stop-color="#4efff2"/><stop offset="0.078" stop-color="#00ffee"/><stop offset="0.194" stop-color="#00ffde"/><stop offset="0.367" stop-color="#00ffd1"/><stop offset="1.000" stop-color="#00ffbf"/></linearGradient><linearGradient id="i74" gradientUnits="userSpaceOnUse" x1="224" y1="125" x2="-675" y2="163"><stop offset="0.000" stop-color="#ffffff"/><stop offset="0.057" stop-color="#4effec"/><stop offset="0.078" stop-color="#00ffe7"/><stop offset="0.228" stop-color="#00ffcc"/><stop offset="0.433" stop-color="#00ffb9"/><stop offset="1.000" stop-color="#00ffa4"/></linearGradient><linearGradient id="i75" gradientUnits="userSpaceOnUse" x1="224" y1="125" x2="-676" y2="125"><stop offset="0.000" stop-color="#ffffff"/><stop offset="0.057" stop-color="#4effe7"/><stop offset="0.078" stop-color="#00ffdf"/><stop offset="0.167" stop-color="#00ffc8"/><stop offset="0.367" stop-color="#00ffab"/><stop offset="0.600" stop-color="#00ff99"/><stop offset="1.000" stop-color="#00ff8a"/></linearGradient><linearGradient id="i76" gradientUnits="userSpaceOnUse" x1="224" y1="125" x2="-675" y2="87"><stop offset="0.000" stop-color="#ffffff"/><stop offset="0.057" stop-color="#4fffe1"/><stop offset="0.067" stop-color="#2effdd"/><stop offset="0.078" stop-color="#00ffd8"/><stop offset="0.228" stop-color="#00ffae"/><stop offset="0.367" stop-color="#00ff98"/><stop offset="0.600" stop-color="#00ff83"/><stop offset="1.000" stop-color="#00ff6f"/></linearGradient><linearGradient id="i77" gradientUnits="userSpaceOnUse" x1="224" y1="125" x2="-673" y2="50"><stop offset="0.000" stop-color="#ffffff"/><stop offset="0.067" stop-color="#30ffd7"/><stop offset="0.078" stop-color="#02ffd1"/><stop offset="0.091" stop-color="#00ffcb"/><stop offset="0.194" stop-color="#00ffa8"/><stop offset="0.367" stop-color="#00ff86"/><stop offset="0.600" stop-color="#00ff6c"/><stop offset="0.844" stop-color="#00ff5c"/><stop offset="1.000" stop-color="#ff0000"/></linearGradient><linearGradient id="i78" gradientUnits="userSpaceOnUse" x1="224" y1="125" x2="-669" y2="12"><stop offset="0.000" stop-color="#ffffff"/><stop offset="0.057" stop-color="#52ffd6"/><stop offset="0.078" stop-color="#08ffca"/><stop offset="0.091" stop-color="#00ffc4"/><stop offset="0.194" stop-color="#00ff9b"/><stop offset="0.367" stop-color="#00ff74"/><stop offset="0.600" stop-color="#00ff55"/><stop offset="0.844" stop-color="#00ff42"/><stop offset="1.000" stop-color="#ff0000"/></linearGradient><linearGradient id="i79" gradientUnits="userSpaceOnUse" x1="224" y1="125" x2="-664" y2="-25"><stop offset="0.000" stop-color="#ffffff"/><stop offset="0.067" stop-color="#35ffca"/><stop offset="0.078" stop-color="#0cffc4"/><stop offset="0.091" stop-color="#00ffbc"/><stop offset="0.194" stop-color="#00ff8e"/><stop offset="0.311" stop-color="#00ff6d"/><stop offset="0.511" stop-color="#00ff49"/><stop offset="0.711" stop-color="#00ff31"/><stop offset="0.844" stop-color="#ff0000"/><stop offset="1.000" stop-color="#ff0000"/></linearGradient><linearGradient id="i80" gradientUnits="userSpaceOnUse" x1="224" y1="125" x2="-656" y2="-62"><stop offset="0.000" stop-color="#ffffff"/><stop offset="0.028" stop-color="#a9ffe3"/><stop offset="0.067" stop-color="#37ffc4"/><stop offset="0.078" stop-color="#11ffbd"/><stop offset="0.091" stop-color="#00ffb4"/><stop offset="0.194" stop-color="#00ff81"/><stop offset="0.311" stop-color="#00ff5c"/><stop offset="0.433" stop-color="#00ff40"/><stop offset="0.711" stop-color="#00ff14"/><stop offset="0.844" stop-color="#ff0000"/><stop offset="1.000" stop-color="#ff0000"/></linearGradient><linearGradient id="i81" gradientUnits="userSpaceOnUse" x1="224" y1="125" x2="-648" y2="-99"><stop offset="0.000" stop-color="#ffffff"/><stop offset="0.033" stop-color="#9affdb"/><stop offset="0.078" stop-color="#16ffb6"/><stop offset="0.091" stop-color="#00ffad"/><stop offset="0.167" stop-color="#00ff81"/><stop offset="0.267" stop-color="#00ff59"/><stop offset="0.367" stop-color="#00ff3a"/><stop offset="0.600" stop-color="#00ff01"/><stop offset="0.711" stop-color="#ff0000"/><stop offset="1.000" stop-color="#ff0000"/></linearGradient><linearGradient id="i82" gradientUnits="userSpaceOnUse" x1="224" y1="125" x2="-638" y2="-135"><stop offset="0.000" stop-color="#ffffff"/><stop offset="0.040" stop-color="#88ffd1"/><stop offset="0.078" stop-color="#1bffb0"/><stop offset="0.091" stop-color="#00ffa5"/><stop offset="0.194" stop-color="#00ff68"/><stop offset="0.367" stop-color="#00ff25"/><stop offset="0.511" stop-color="#00ff00"/><stop offset="0.600" stop-color="#00ff00"/><stop offset="0.711" stop-color="#ff0000"/><stop offset="1.000" stop-color="#ff0000"/></linearGradient><linearGradient id="i83" gradientUnits="userSpaceOnUse" x1="224" y1="125" x2="-626" y2="-171"><stop offset="0.000" stop-color="#ffffff"/><stop offset="0.048" stop-color="#75ffc5"/><stop offset="0.091" stop-color="#00ff9e"/><stop offset="0.194" stop-color="#00ff5b"/><stop offset="0.367" stop-color="#00ff0c"/><stop offset="0.433" stop-color="#00ff00"/><stop offset="0.511" stop-color="#00ff00"/><stop offset="0.600" stop-color="#ff0000"/><stop offset="1.000" stop-color="#ff0000"/></linearGradient><linearGradient id="i84" gradientUnits="userSpaceOnUse" x1="224" y1="125" x2="-613" y2="-206"><stop offset="0.000" stop-color="#ffffff"/><stop offset="0.048" stop-color="#77ffc1"/><stop offset="0.091" stop-color="#00ff97"/><stop offset="0.167" stop-color="#00ff5f"/><stop offset="0.311" stop-color="#00ff0e"/><stop offset="0.367" stop-color="#00ff00"/><stop offset="0.511" stop-color="#00ff00"/><stop offset="0.600" stop-color="#ff0000"/><stop offset="1.000" stop-color="#ff0000"/></linearGradient><linearGradient id="i85" gradientUnits="userSpaceOnUse" x1="224" y1="125" x2="-598" y2="-241"><stop offset="0.000" stop-color="#ffffff"/><stop offset="0.040" stop-color="#8effc6"/><stop offset="0.078" stop-color="#2bff9d"/><stop offset="0.091" stop-color="#00ff90"/><stop offset="0.194" stop-color="#00ff40"/><stop offset="0.267" stop-color="#00ff12"/><stop offset="0.311" stop-color="#00ff00"/><stop offset="0.511" stop-color="#00ff00"/><stop offset="0.600" stop-color="#ff0000"/><stop offset="0.844" stop-color="#ff0000"/><stop offset="1.000" stop-color="#ff000e"/></linearGradient><linearGradient id="i86" gradientUnits="userSpaceOnUse" x1="224" y1="125" x2="-582" y2="-275"><stop offset="0.000" stop-color="#ffffff"/><stop offset="0.040" stop-color="#90ffc3"/><stop offset="0.078" stop-color="#30ff97"/><stop offset="0.091" stop-color="#08ff89"/><stop offset="0.106" stop-color="#00ff7b"/><stop offset="0.167" stop-color="#00ff47"/><stop offset="0.267" stop-color="#00ff00"/><stop offset="0.511" stop-color="#00ff00"/><stop offset="0.600" stop-color="#ff0000"/><stop offset="0.711" stop-color="#ff0000"/><stop offset="0.844" stop-color="#ff000a"/><stop offset="1.000" stop-color="#ff0020"/></linearGradient><linearGradient id="i87" gradientUnits="userSpaceOnUse" x1="224" y1="125" x2="-565" y2="-308"><stop offset="0.000" stop-color="#ffffff"/><stop offset="0.048" stop-color="#7fffb5"/><stop offset="0.091" stop-color="#12ff82"/><stop offset="0.106" stop-color="#00ff73"/><stop offset="0.228" stop-color="#00ff04"/><stop offset="0.433" stop-color="#00ff00"/><stop offset="0.511" stop-color="#ff0000"/><stop offset="0.711" stop-color="#ff0000"/><stop offset="0.844" stop-color="#ff001f"/><stop offset="1.000" stop-color="#ff0031"/></linearGradient><linearGradient id="i88" gradientUnits="userSpaceOnUse" x1="224" y1="125" x2="-546" y2="-341"><stop offset="0.000" stop-color="#ffffff"/><stop offset="0.048" stop-color="#82ffb1"/><stop offset="0.091" stop-color="#1aff7b"/><stop offset="0.106" stop-color="#00ff6b"/><stop offset="0.194" stop-color="#00ff14"/><stop offset="0.228" stop-color="#00ff00"/><stop offset="0.433" stop-color="#00ff00"/><stop offset="0.511" stop-color="#ff0000"/><stop offset="0.600" stop-color="#ff0000"/><stop offset="0.844" stop-color="#ff0031"/><stop offset="1.000" stop-color="#ff0042"/></linearGradient><linearGradient id="i89" gradientUnits="userSpaceOnUse" x1="224" y1="125" x2="-526" y2="-373"><stop offset="0.000" stop-color="#ffffff"/><stop offset="0.040" stop-color="#97ffb9"/><stop offset="0.106" stop-color="#00ff64"/><stop offset="0.194" stop-color="#00ff00"/><stop offset="0.433" stop-color="#00ff00"/><stop offset="0.511" stop-color="#ff0000"/><stop offset="0.600" stop-color="#ff0004"/><stop offset="0.711" stop-color="#ff002d"/><stop offset="0.844" stop-color="#ff0044"/><stop offset="1.000" stop-color="#ff0053"/></linearGradient><linearGradient id="i90" gradientUnits="userSpaceOnUse" x1="224" y1="125" x2="-504" y2="-404"><stop offset="0.000" stop-color="#ffffff"/><stop offset="0.040" stop-color="#9affb6"/><stop offset="0.091" stop-color="#2bff6e"/><stop offset="0.106" stop-color="#04ff5c"/><stop offset="0.122" stop-color="#00ff48"/><stop offset="0.167" stop-color="#00ff14"/><stop offset="0.194" stop-color="#00ff00"/><stop offset="0.433" stop-color="#00ff00"/><stop offset="0.511" stop-color="#ff0000"/><stop offset="0.600" stop-color="#ff0022"/><stop offset="0.711" stop-color="#ff0043"/><stop offset="0.844" stop-color="#ff0057"/><stop offset="1.000" stop-color="#ff0065"/></linearGradient><linearGradient id="i91" gradientUnits="userSpaceOnUse" x1="224" y1="125" x2="-481" y2="-434"><stop offset="0.000" stop-color="#ffffff"/><stop offset="0.048" stop-color="#8cffa6"/><stop offset="0.106" stop-color="#12ff55"/><stop offset="0.122" stop-color="#00ff40"/><stop offset="0.167" stop-color="#00ff00"/><stop offset="0.367" stop-color="#00ff00"/><stop offset="0.433" stop-color="#ff0000"/><stop offset="0.511" stop-color="#ff0000"/><stop offset="0.600" stop-color="#ff003c"/><stop offset="0.711" stop-color="#ff005a"/><stop offset="0.844" stop-color="#ff006d"/><stop offset="1.000" stop-color="#ff007a"/></linearGradient><linearGradient id="i92" gradientUnits="userSpaceOnUse" x1="224" y1="125" x2="-457" y2="-463"><stop offset="0.000" stop-color="#ffffff"/><stop offset="0.022" stop-color="#c7ffd1"/><stop offset="0.048" stop-color="#90ffa3"/><stop offset="0.122" stop-color="#00ff37"/><stop offset="0.142" stop-color="#00ff1a"/><stop offset="0.167" stop-color="#00ff00"/><stop offset="0.367" stop-color="#00ff00"/><stop offset="0.433" stop-color="#ff0000"/><stop offset="0.600" stop-color="#ff0058"/><stop offset="0.711" stop-color="#ff0073"/><stop offset="1.000" stop-color="#ff0090"/></linearGradient><linearGradient id="i93" gradientUnits="userSpaceOnUse" x1="224" y1="125" x2="-432" y2="-491"><stop offset="0.000" stop-color="#ffffff"/><stop offset="0.048" stop-color="#93ffa0"/><stop offset="0.106" stop-color="#28ff46"/><stop offset="0.122" stop-color="#01ff2d"/><stop offset="0.142" stop-color="#00ff0d"/><stop offset="0.167" stop-color="#00ff00"/><stop offset="0.367" stop-color="#00ff00"/><stop offset="0.433" stop-color="#ff0000"/><stop offset="0.511" stop-color="#ff0050"/><stop offset="0.600" stop-color="#ff0079"/><stop offset="0.711" stop-color="#ff0091"/><stop offset="1.000" stop-color="#ff00aa"/></linearGradient><linearGradient id="i94" gradientUnits="userSpaceOnUse" x1="224" y1="125" x2="-406" y2="-518"><stop offset="0.000" stop-color="#ffffff"/><stop offset="0.028" stop-color="#bfffc2"/><stop offset="0.078" stop-color="#61ff6a"/><stop offset="0.122" stop-color="#13ff24"/><stop offset="0.142" stop-color="#00ff00"/><stop offset="0.367" stop-color="#00ff00"/><stop offset="0.433" stop-color="#ff001f"/><stop offset="0.511" stop-color="#ff007e"/><stop offset="0.600" stop-color="#ff00a0"/><stop offset="0.711" stop-color="#ff00b4"/><stop offset="1.000" stop-color="#ff00c8"/></linearGradient><linearGradient id="i95" gradientUnits="userSpaceOnUse" x1="224" y1="125" x2="-378" y2="-544"><stop offset="0.000" stop-color="#ffffff"/><stop offset="0.018" stop-color="#d6ffd6"/><stop offset="0.057" stop-color="#8cff89"/><stop offset="0.122" stop-color="#20ff1a"/><stop offset="0.142" stop-color="#00ff00"/><stop offset="0.367" stop-color="#00ff00"/><stop offset="0.433" stop-color="#ff0078"/><stop offset="0.511" stop-color="#ff00be"/><stop offset="0.600" stop-color="#ff00d5"/><stop offset="0.711" stop-color="#ff00e1"/><stop offset="1.000" stop-color="#ff00ed"/></linearGradient><linearGradient id="i96" gradientUnits="userSpaceOnUse" x1="224" y1="125" x2="-350" y2="-568"><stop offset="0.000" stop-color="#ffffff"/><stop offset="0.033" stop-color="#baffb3"/><stop offset="0.057" stop-color="#90ff86"/><stop offset="0.122" stop-color="#2dff10"/><stop offset="0.142" stop-color="#0cff00"/><stop offset="0.167" stop-color="#00ff00"/><stop offset="0.367" stop-color="#00ff00"/><stop offset="0.433" stop-color="#cc00ff"/><stop offset="0.511" stop-color="#dd00ff"/><stop offset="0.600" stop-color="#e200ff"/><stop offset="1.000" stop-color="#e600ff"/></linearGradient><linearGradient id="i97" gradientUnits="userSpaceOnUse" x1="224" y1="125" x2="-320" y2="-592"><stop offset="0.000" stop-color="#ffffff"/><stop offset="0.048" stop-color="#a4ff94"/><stop offset="0.106" stop-color="#4fff28"/><stop offset="0.122" stop-color="#38ff02"/><stop offset="0.142" stop-color="#1dff00"/><stop offset="0.167" stop-color="#00ff00"/><stop offset="0.367" stop-color="#00ff00"/><stop offset="0.433" stop-color="#0000ff"/><stop offset="0.511" stop-color="#7c00ff"/><stop offset="0.600" stop-color="#9d00ff"/><stop offset="0.711" stop-color="#ae00ff"/><stop offset="1.000" stop-color="#bd00ff"/></linearGradient><linearGradient id="i98" gradientUnits="userSpaceOnUse" x1="224" y1="125" x2="-290" y2="-614"><stop offset="0.000" stop-color="#ffffff"/><stop offset="0.048" stop-color="#a8ff91"/><stop offset="0.122" stop-color="#44ff00"/><stop offset="0.167" stop-color="#0aff00"/><stop offset="0.194" stop-color="#00ff00"/><stop offset="0.367" stop-color="#00ff00"/><stop offset="0.433" stop-color="#0019ff"/><stop offset="0.511" stop-color="#1f00ff"/><stop offset="0.600" stop-color="#5f00ff"/><stop offset="0.711" stop-color="#7c00ff"/><stop offset="1.000" stop-color="#9700ff"/></linearGradient><linearGradient id="i99" gradientUnits="userSpaceOnUse" x1="224" y1="125" x2="-258" y2="-635"><stop offset="0.000" stop-color="#ffffff"/><stop offset="0.022" stop-color="#d6ffc7"/><stop offset="0.057" stop-color="#a0ff7d"/><stop offset="0.106" stop-color="#62ff19"/><stop offset="0.122" stop-color="#4fff00"/><stop offset="0.194" stop-color="#00ff00"/><stop offset="0.367" stop-color="#00ff00"/><stop offset="0.433" stop-color="#0038ff"/><stop offset="0.511" stop-color="#0000ff"/><stop offset="0.600" stop-color="#1d00ff"/><stop offset="0.711" stop-color="#4b00ff"/><stop offset="0.844" stop-color="#6300ff"/><stop offset="1.000" stop-color="#7200ff"/></linearGradient><linearGradient id="i100" gradientUnits="userSpaceOnUse" x1="224" y1="125" x2="-226" y2="-654"><stop offset="0.000" stop-color="#ffffff"/><stop offset="0.022" stop-color="#d8ffc6"/><stop offset="0.057" stop-color="#a5ff7a"/><stop offset="0.106" stop-color="#6bff11"/><stop offset="0.122" stop-color="#5aff00"/><stop offset="0.194" stop-color="#11ff00"/><stop offset="0.228" stop-color="#00ff00"/><stop offset="0.367" stop-color="#00ff00"/><stop offset="0.433" stop-color="#004cff"/><stop offset="0.511" stop-color="#000cff"/><stop offset="0.600" stop-color="#0000ff"/><stop offset="0.844" stop-color="#3900ff"/><stop offset="1.000" stop-color="#4e00ff"/></linearGradient><linearGradient id="i101" gradientUnits="userSpaceOnUse" x1="224" y1="125" x2="-193" y2="-672"><stop offset="0.000" stop-color="#ffffff"/><stop offset="0.048" stop-color="#b6ff8b"/><stop offset="0.091" stop-color="#84ff2d"/><stop offset="0.106" stop-color="#75ff08"/><stop offset="0.122" stop-color="#65ff00"/><stop offset="0.228" stop-color="#06ff00"/><stop offset="0.311" stop-color="#00ff00"/><stop offset="0.367" stop-color="#00f3ff"/><stop offset="0.433" stop-color="#005bff"/><stop offset="0.511" stop-color="#0022ff"/><stop offset="0.600" stop-color="#0000ff"/><stop offset="0.844" stop-color="#0700ff"/><stop offset="1.000" stop-color="#2700ff"/></linearGradient><linearGradient id="i102" gradientUnits="userSpaceOnUse" x1="224" y1="125" x2="-159" y2="-689"><stop offset="0.000" stop-color="#ffffff"/><stop offset="0.048" stop-color="#bbff89"/><stop offset="0.091" stop-color="#8cff28"/><stop offset="0.106" stop-color="#7eff00"/><stop offset="0.267" stop-color="#00ff00"/><stop offset="0.311" stop-color="#00ff00"/><stop offset="0.367" stop-color="#00ebff"/><stop offset="0.433" stop-color="#0067ff"/><stop offset="0.511" stop-color="#0032ff"/><stop offset="0.600" stop-color="#0010ff"/><stop offset="0.711" stop-color="#0000ff"/><stop offset="1.000" stop-color="#0000ff"/></linearGradient><linearGradient id="i103" gradientUnits="userSpaceOnUse" x1="224" y1="125" x2="-125" y2="-705"><stop offset="0.000" stop-color="#ffffff"/><stop offset="0.048" stop-color="#c0ff87"/><stop offset="0.106" stop-color="#88ff00"/><stop offset="0.167" stop-color="#5aff00"/><stop offset="0.311" stop-color="#00ff00"/><stop offset="0.367" stop-color="#00e8ff"/><stop offset="0.433" stop-color="#0072ff"/><stop offset="0.511" stop-color="#003eff"/><stop offset="0.600" stop-color="#0020ff"/><stop offset="0.711" stop-color="#0005ff"/><stop offset="1.000" stop-color="#0000ff"/></linearGradient><linearGradient id="i104" gradientUnits="userSpaceOnUse" x1="224" y1="125" x2="-90" y2="-718"><stop offset="0.000" stop-color="#ffffff"/><stop offset="0.040" stop-color="#cdff98"/><stop offset="0.106" stop-color="#92ff00"/><stop offset="0.194" stop-color="#58ff00"/><stop offset="0.311" stop-color="#1eff00"/><stop offset="0.367" stop-color="#00e7ff"/><stop offset="0.433" stop-color="#007bff"/><stop offset="0.511" stop-color="#004aff"/><stop offset="0.600" stop-color="#002cff"/><stop offset="0.844" stop-color="#0000ff"/><stop offset="1.000" stop-color="#0000ff"/></linearGradient><linearGradient id="i105" gradientUnits="userSpaceOnUse" x1="224" y1="125" x2="-54" y2="-731"><stop offset="0.000" stop-color="#ffffff"/><stop offset="0.048" stop-color="#caff84"/><stop offset="0.091" stop-color="#a6ff19"/><stop offset="0.106" stop-color="#9cff00"/><stop offset="0.194" stop-color="#68ff00"/><stop offset="0.311" stop-color="#37ff00"/><stop offset="0.367" stop-color="#00e8ff"/><stop offset="0.433" stop-color="#0083ff"/><stop offset="0.511" stop-color="#0054ff"/><stop offset="0.600" stop-color="#0037ff"/><stop offset="0.711" stop-color="#0022ff"/><stop offset="1.000" stop-color="#0000ff"/></linearGradient><linearGradient id="i106" gradientUnits="userSpaceOnUse" x1="224" y1="125" x2="-18" y2="-742"><stop offset="0.000" stop-color="#ffffff"/><stop offset="0.040" stop-color="#d6ff95"/><stop offset="0.091" stop-color="#afff15"/><stop offset="0.106" stop-color="#a5ff00"/><stop offset="0.194" stop-color="#77ff00"/><stop offset="0.311" stop-color="#4dff00"/><stop offset="0.367" stop-color="#00ebff"/><stop offset="0.433" stop-color="#008bff"/><stop offset="0.511" stop-color="#005dff"/><stop offset="0.600" stop-color="#0041ff"/><stop offset="0.711" stop-color="#002cff"/><stop offset="1.000" stop-color="#000fff"/></linearGradient><linearGradient id="i107" gradientUnits="userSpaceOnUse" x1="224" y1="125" x2="18" y2="-751"><stop offset="0.000" stop-color="#ffffff"/><stop offset="0.033" stop-color="#e0ffa5"/><stop offset="0.078" stop-color="#c0ff37"/><stop offset="0.091" stop-color="#b8ff10"/><stop offset="0.106" stop-color="#afff00"/><stop offset="0.194" stop-color="#87ff00"/><stop offset="0.311" stop-color="#62ff00"/><stop offset="0.367" stop-color="#00efff"/><stop offset="0.433" stop-color="#0093ff"/><stop offset="0.511" stop-color="#0065ff"/><stop offset="0.600" stop-color="#004aff"/><stop offset="0.711" stop-color="#0035ff"/><stop offset="1.000" stop-color="#001aff"/></linearGradient><linearGradient id="i108" gradientUnits="userSpaceOnUse" x1="224" y1="125" x2="55" y2="-759"><stop offset="0.000" stop-color="#ffffff"/><stop offset="0.040" stop-color="#dfff94"/><stop offset="0.078" stop-color="#c8ff34"/><stop offset="0.091" stop-color="#c1ff0c"/><stop offset="0.106" stop-color="#baff00"/><stop offset="0.194" stop-color="#96ff00"/><stop offset="0.311" stop-color="#76ff00"/><stop offset="0.367" stop-color="#00f3ff"/><stop offset="0.433" stop-color="#009bff"/><stop offset="0.511" stop-color="#006eff"/><stop offset="0.600" stop-color="#0052ff"/><stop offset="0.711" stop-color="#003eff"/><stop offset="1.000" stop-color="#0024ff"/></linearGradient><linearGradient id="i109" gradientUnits="userSpaceOnUse" x1="224" y1="125" x2="92" y2="-765"><stop offset="0.000" stop-color="#ffffff"/><stop offset="0.078" stop-color="#d0ff32"/><stop offset="0.091" stop-color="#caff08"/><stop offset="0.106" stop-color="#c4ff00"/><stop offset="0.194" stop-color="#a5ff00"/><stop offset="0.311" stop-color="#8bff00"/><stop offset="0.367" stop-color="#00f9ff"/><stop offset="0.433" stop-color="#00a2ff"/><stop offset="0.511" stop-color="#0076ff"/><stop offset="0.600" stop-color="#005aff"/><stop offset="0.711" stop-color="#0046ff"/><stop offset="1.000" stop-color="#002cff"/></linearGradient><linearGradient id="i110" gradientUnits="userSpaceOnUse" x1="224" y1="125" x2="130" y2="-770"><stop offset="0.000" stop-color="#ffffff"/><stop offset="0.078" stop-color="#d8ff31"/><stop offset="0.091" stop-color="#d3ff03"/><stop offset="0.106" stop-color="#ceff00"/><stop offset="0.194" stop-color="#b5ff00"/><stop offset="0.311" stop-color="#9fff00"/><stop offset="0.367" stop-color="#00ffff"/><stop offset="0.433" stop-color="#00aaff"/><stop offset="0.511" stop-color="#007dff"/><stop offset="0.600" stop-color="#0062ff"/><stop offset="0.711" stop-color="#004eff"/><stop offset="1.000" stop-color="#0034ff"/></linearGradient><linearGradient id="i111" gradientUnits="userSpaceOnUse" x1="224" y1="125" x2="167" y2="-773"><stop offset="0.000" stop-color="#ffffff"/><stop offset="0.078" stop-color="#e1ff2f"/><stop offset="0.091" stop-color="#ddff00"/><stop offset="0.228" stop-color="#bfff00"/><stop offset="0.367" stop-color="#adff00"/><stop offset="0.433" stop-color="#00b1ff"/><stop offset="0.511" stop-color="#0085ff"/><stop offset="0.600" stop-color="#0069ff"/><stop offset="0.711" stop-color="#0055ff"/><stop offset="1.000" stop-color="#003bff"/></linearGradient><linearGradient id="i112" gradientUnits="userSpaceOnUse" x1="224" y1="125" x2="205" y2="-775"><stop offset="0.000" stop-color="#ffffff"/><stop offset="0.078" stop-color="#e9ff2e"/><stop offset="0.091" stop-color="#e6ff00"/><stop offset="0.267" stop-color="#ccff00"/><stop offset="0.367" stop-color="#c4ff00"/><stop offset="0.433" stop-color="#00b9ff"/><stop offset="0.511" stop-color="#008cff"/><stop offset="0.600" stop-color="#0071ff"/><stop offset="0.711" stop-color="#005cff"/><stop offset="1.000" stop-color="#0042ff"/></linearGradient><linearGradient id="i113" gradientUnits="userSpaceOnUse" x1="224" y1="125" x2="243" y2="-775"><stop offset="0.000" stop-color="#ffffff"/><stop offset="0.078" stop-color="#f2ff2e"/><stop offset="0.091" stop-color="#f0ff00"/><stop offset="0.367" stop-color="#dbff00"/><stop offset="0.433" stop-color="#00c1ff"/><stop offset="0.511" stop-color="#0094ff"/><stop offset="0.600" stop-color="#0078ff"/><stop offset="0.711" stop-color="#0063ff"/><stop offset="1.000" stop-color="#0049ff"/></linearGradient><linearGradient id="i114" gradientUnits="userSpaceOnUse" x1="224" y1="125" x2="280" y2="-773"><stop offset="0.000" stop-color="#ffffff"/><stop offset="0.078" stop-color="#faff2e"/><stop offset="0.091" stop-color="#f9ff00"/><stop offset="0.367" stop-color="#f2ff00"/><stop offset="0.433" stop-color="#00c9ff"/><stop offset="0.511" stop-color="#009cff"/><stop offset="0.600" stop-color="#007fff"/><stop offset="0.711" stop-color="#006aff"/><stop offset="1.000" stop-color="#0050ff"/></linearGradient><linearGradient id="i115" gradientUnits="userSpaceOnUse" x1="224" y1="125" x2="318" y2="-770"><stop offset="0.000" stop-color="#ffffff"/><stop offset="0.067" stop-color="#fffc4d"/><stop offset="0.091" stop-color="#fffb00"/><stop offset="0.367" stop-color="#fff500"/><stop offset="0.433" stop-color="#00d2ff"/><stop offset="0.511" stop-color="#00a4ff"/><stop offset="0.600" stop-color="#0087ff"/><stop offset="0.711" stop-color="#0071ff"/><stop offset="1.000" stop-color="#0056ff"/></linearGradient><linearGradient id="i116" gradientUnits="userSpaceOnUse" x1="224" y1="125" x2="355" y2="-765"><stop offset="0.000" stop-color="#ffffff"/><stop offset="0.078" stop-color="#fff32c"/><stop offset="0.091" stop-color="#fff100"/><stop offset="0.367" stop-color="#ffe000"/><stop offset="0.433" stop-color="#00dcff"/><stop offset="0.511" stop-color="#00acff"/><stop offset="0.600" stop-color="#008eff"/><stop offset="0.711" stop-color="#0078ff"/><stop offset="1.000" stop-color="#005dff"/></linearGradient><linearGradient id="i117" gradientUnits="userSpaceOnUse" x1="224" y1="125" x2="392" y2="-759"><stop offset="0.000" stop-color="#ffffff"/><stop offset="0.078" stop-color="#ffeb2c"/><stop offset="0.091" stop-color="#ffe900"/><stop offset="0.228" stop-color="#ffd700"/><stop offset="0.367" stop-color="#ffce00"/><stop offset="0.433" stop-color="#00e5ff"/><stop offset="0.511" stop-color="#00b4ff"/><stop offset="0.600" stop-color="#0096ff"/><stop offset="0.711" stop-color="#007fff"/><stop offset="1.000" stop-color="#0063ff"/></linearGradient><linearGradient id="i118" gradientUnits="userSpaceOnUse" x1="224" y1="125" x2="429" y2="-751"><stop offset="0.000" stop-color="#ffffff"/><stop offset="0.028" stop-color="#fff3ae"/><stop offset="0.078" stop-color="#ffe42c"/><stop offset="0.091" stop-color="#ffe000"/><stop offset="0.194" stop-color="#ffce00"/><stop offset="0.367" stop-color="#ffbe00"/><stop offset="0.433" stop-color="#00f0ff"/><stop offset="0.511" stop-color="#00bdff"/><stop offset="0.600" stop-color="#009dff"/><stop offset="0.711" stop-color="#0087ff"/><stop offset="1.000" stop-color="#006aff"/></linearGradient><linearGradient id="i119" gradientUnits="userSpaceOnUse" x1="224" y1="125" x2="466" y2="-742"><stop offset="0.000" stop-color="#ffffff"/><stop offset="0.028" stop-color="#fff0ad"/><stop offset="0.078" stop-color="#ffdd2c"/><stop offset="0.091" stop-color="#ffd900"/><stop offset="0.194" stop-color="#ffc200"/><stop offset="0.367" stop-color="#ffaf00"/><stop offset="0.433" stop-color="#00fbff"/><stop offset="0.511" stop-color="#00c6ff"/><stop offset="0.600" stop-color="#00a6ff"/><stop offset="0.711" stop-color="#008eff"/><stop offset="1.000" stop-color="#0070ff"/></linearGradient><linearGradient id="i120" gradientUnits="userSpaceOnUse" x1="224" y1="125" x2="502" y2="-731"><stop offset="0.000" stop-color="#ffffff"/><stop offset="0.028" stop-color="#ffedac"/><stop offset="0.078" stop-color="#ffd62d"/><stop offset="0.091" stop-color="#ffd104"/><stop offset="0.106" stop-color="#ffcd00"/><stop offset="0.228" stop-color="#ffb200"/><stop offset="0.433" stop-color="#ff9d00"/><stop offset="0.511" stop-color="#00d0ff"/><stop offset="0.600" stop-color="#00aeff"/><stop offset="0.711" stop-color="#0096ff"/><stop offset="1.000" stop-color="#0077ff"/></linearGradient><linearGradient id="i121" gradientUnits="userSpaceOnUse" x1="224" y1="125" x2="538" y2="-718"><stop offset="0.000" stop-color="#ffffff"/><stop offset="0.028" stop-color="#ffeaab"/><stop offset="0.078" stop-color="#ffd02e"/><stop offset="0.091" stop-color="#ffca07"/><stop offset="0.106" stop-color="#ffc500"/><stop offset="0.228" stop-color="#ffa800"/><stop offset="0.433" stop-color="#ff9100"/><stop offset="0.511" stop-color="#00daff"/><stop offset="0.600" stop-color="#00b7ff"/><stop offset="0.711" stop-color="#009dff"/><stop offset="1.000" stop-color="#007eff"/></linearGradient><linearGradient id="i122" gradientUnits="userSpaceOnUse" x1="224" y1="125" x2="573" y2="-705"><stop offset="0.000" stop-color="#ffffff"/><stop offset="0.033" stop-color="#ffe39b"/><stop offset="0.091" stop-color="#ffc40b"/><stop offset="0.106" stop-color="#ffbe00"/><stop offset="0.228" stop-color="#ff9e00"/><stop offset="0.433" stop-color="#ff8600"/><stop offset="0.511" stop-color="#00e5ff"/><stop offset="0.600" stop-color="#00c0ff"/><stop offset="0.711" stop-color="#00a6ff"/><stop offset="1.000" stop-color="#0085ff"/></linearGradient><linearGradient id="i123" gradientUnits="userSpaceOnUse" x1="224" y1="125" x2="607" y2="-689"><stop offset="0.000" stop-color="#ffffff"/><stop offset="0.022" stop-color="#ffe9b9"/><stop offset="0.048" stop-color="#ffd576"/><stop offset="0.091" stop-color="#ffbe0f"/><stop offset="0.106" stop-color="#ffb700"/><stop offset="0.228" stop-color="#ff9600"/><stop offset="0.433" stop-color="#ff7c00"/><stop offset="0.511" stop-color="#00f1ff"/><stop offset="0.600" stop-color="#00caff"/><stop offset="0.711" stop-color="#00aeff"/><stop offset="0.844" stop-color="#009aff"/><stop offset="1.000" stop-color="#008cff"/></linearGradient><linearGradient id="i124" gradientUnits="userSpaceOnUse" x1="224" y1="125" x2="641" y2="-672"><stop offset="0.000" stop-color="#ffffff"/><stop offset="0.028" stop-color="#ffe1a9"/><stop offset="0.048" stop-color="#ffd176"/><stop offset="0.091" stop-color="#ffb812"/><stop offset="0.106" stop-color="#ffb100"/><stop offset="0.228" stop-color="#ff8d00"/><stop offset="0.433" stop-color="#ff7300"/><stop offset="0.511" stop-color="#00feff"/><stop offset="0.600" stop-color="#00d5ff"/><stop offset="0.711" stop-color="#00b7ff"/><stop offset="1.000" stop-color="#0094ff"/></linearGradient><linearGradient id="i125" gradientUnits="userSpaceOnUse" x1="224" y1="125" x2="674" y2="-654"><stop offset="0.000" stop-color="#ffffff"/><stop offset="0.022" stop-color="#ffe4b8"/><stop offset="0.048" stop-color="#ffcd76"/><stop offset="0.091" stop-color="#ffb216"/><stop offset="0.106" stop-color="#ffab00"/><stop offset="0.194" stop-color="#ff8d00"/><stop offset="0.267" stop-color="#ff7e00"/><stop offset="0.511" stop-color="#ff6400"/><stop offset="0.600" stop-color="#00e0ff"/><stop offset="0.711" stop-color="#00c1ff"/><stop offset="0.844" stop-color="#00abff"/><stop offset="1.000" stop-color="#009bff"/></linearGradient><linearGradient id="i126" gradientUnits="userSpaceOnUse" x1="224" y1="125" x2="706" y2="-635"><stop offset="0.000" stop-color="#ffffff"/><stop offset="0.018" stop-color="#ffe7c5"/><stop offset="0.040" stop-color="#ffd089"/><stop offset="0.067" stop-color="#ffbc4d"/><stop offset="0.106" stop-color="#ffa600"/><stop offset="0.167" stop-color="#ff8e00"/><stop offset="0.267" stop-color="#ff7700"/><stop offset="0.511" stop-color="#ff5c00"/><stop offset="0.600" stop-color="#00edff"/><stop offset="0.711" stop-color="#00ccff"/><stop offset="0.844" stop-color="#00b4ff"/><stop offset="1.000" stop-color="#00a4ff"/></linearGradient><linearGradient id="i127" gradientUnits="userSpaceOnUse" x1="224" y1="125" x2="737" y2="-614"><stop offset="0.000" stop-color="#ffffff"/><stop offset="0.018" stop-color="#ffe6c5"/><stop offset="0.040" stop-color="#ffcd89"/><stop offset="0.106" stop-color="#ffa000"/><stop offset="0.167" stop-color="#ff8800"/><stop offset="0.267" stop-color="#ff7000"/><stop offset="0.511" stop-color="#ff5400"/><stop offset="0.600" stop-color="#00faff"/><stop offset="0.711" stop-color="#00d7ff"/><stop offset="0.844" stop-color="#00beff"/><stop offset="1.000" stop-color="#00acff"/></linearGradient><linearGradient id="i128" gradientUnits="userSpaceOnUse" x1="224" y1="125" x2="768" y2="-592"><stop offset="0.000" stop-color="#ffffff"/><stop offset="0.014" stop-color="#ffe8ce"/><stop offset="0.033" stop-color="#ffd19a"/><stop offset="0.067" stop-color="#ffb351"/><stop offset="0.106" stop-color="#ff9b00"/><stop offset="0.167" stop-color="#ff8200"/><stop offset="0.267" stop-color="#ff6900"/><stop offset="0.367" stop-color="#ff5a00"/><stop offset="0.600" stop-color="#ff4600"/><stop offset="0.711" stop-color="#00e3ff"/><stop offset="0.844" stop-color="#00c8ff"/><stop offset="1.000" stop-color="#00b6ff"/></linearGradient><linearGradient id="i129" gradientUnits="userSpaceOnUse" x1="224" y1="125" x2="798" y2="-568"><stop offset="0.000" stop-color="#ffffff"/><stop offset="0.018" stop-color="#ffe2c4"/><stop offset="0.033" stop-color="#ffce9a"/><stop offset="0.057" stop-color="#ffb766"/><stop offset="0.106" stop-color="#ff9608"/><stop offset="0.122" stop-color="#ff8e00"/><stop offset="0.194" stop-color="#ff7400"/><stop offset="0.311" stop-color="#ff5b00"/><stop offset="0.600" stop-color="#ff3f00"/><stop offset="0.711" stop-color="#00f0ff"/><stop offset="0.844" stop-color="#00d4ff"/><stop offset="1.000" stop-color="#00c0ff"/></linearGradient><linearGradient id="i130" gradientUnits="userSpaceOnUse" x1="224" y1="125" x2="826" y2="-544"><stop offset="0.000" stop-color="#ffffff"/><stop offset="0.018" stop-color="#ffe1c4"/><stop offset="0.048" stop-color="#ffbc7a"/><stop offset="0.106" stop-color="#ff920e"/><stop offset="0.122" stop-color="#ff8900"/><stop offset="0.194" stop-color="#ff6e00"/><stop offset="0.311" stop-color="#ff5500"/><stop offset="0.600" stop-color="#ff3800"/><stop offset="0.711" stop-color="#00ffff"/><stop offset="0.844" stop-color="#00e0ff"/><stop offset="1.000" stop-color="#00caff"/></linearGradient><linearGradient id="i131" gradientUnits="userSpaceOnUse" x1="224" y1="125" x2="854" y2="-518"><stop offset="0.000" stop-color="#ffffff"/><stop offset="0.018" stop-color="#ffdfc4"/><stop offset="0.048" stop-color="#ffb97b"/><stop offset="0.106" stop-color="#ff8d14"/><stop offset="0.122" stop-color="#ff8400"/><stop offset="0.194" stop-color="#ff6900"/><stop offset="0.311" stop-color="#ff4f00"/><stop offset="0.433" stop-color="#ff3f00"/><stop offset="0.711" stop-color="#ff2b00"/><stop offset="0.844" stop-color="#00eeff"/><stop offset="1.000" stop-color="#00d6ff"/></linearGradient><linearGradient id="i132" gradientUnits="userSpaceOnUse" x1="224" y1="125" x2="880" y2="-491"><stop offset="0.000" stop-color="#ffffff"/><stop offset="0.022" stop-color="#ffd7b8"/><stop offset="0.040" stop-color="#ffbf8d"/><stop offset="0.078" stop-color="#ff9b46"/><stop offset="0.122" stop-color="#ff8000"/><stop offset="0.228" stop-color="#ff5b00"/><stop offset="0.367" stop-color="#ff4100"/><stop offset="0.711" stop-color="#ff2500"/><stop offset="0.844" stop-color="#00fdff"/><stop offset="1.000" stop-color="#00e3ff"/></linearGradient><linearGradient id="i133" gradientUnits="userSpaceOnUse" x1="224" y1="125" x2="905" y2="-463"><stop offset="0.000" stop-color="#ffffff"/><stop offset="0.028" stop-color="#ffcdaa"/><stop offset="0.067" stop-color="#ffa15b"/><stop offset="0.122" stop-color="#ff7c03"/><stop offset="0.142" stop-color="#ff7200"/><stop offset="0.228" stop-color="#ff5600"/><stop offset="0.367" stop-color="#ff3b00"/><stop offset="0.600" stop-color="#ff2500"/><stop offset="0.844" stop-color="#ff1700"/><stop offset="1.000" stop-color="#00f1ff"/></linearGradient><linearGradient id="i134" gradientUnits="userSpaceOnUse" x1="224" y1="125" x2="929" y2="-434"><stop offset="0.000" stop-color="#ffffff"/><stop offset="0.022" stop-color="#ffd3b9"/><stop offset="0.057" stop-color="#ffa76f"/><stop offset="0.122" stop-color="#ff780d"/><stop offset="0.142" stop-color="#ff6e00"/><stop offset="0.267" stop-color="#ff4700"/><stop offset="0.433" stop-color="#ff2d00"/><stop offset="0.600" stop-color="#ff1e00"/><stop offset="1.000" stop-color="#ff0900"/></linearGradient><linearGradient id="i135" gradientUnits="userSpaceOnUse" x1="224" y1="125" x2="952" y2="-404"><stop offset="0.000" stop-color="#ffffff"/><stop offset="0.014" stop-color="#ffe0cf"/><stop offset="0.028" stop-color="#ffc9ac"/><stop offset="0.057" stop-color="#ffa571"/><stop offset="0.091" stop-color="#ff873d"/><stop offset="0.142" stop-color="#ff6a00"/><stop offset="0.267" stop-color="#ff4300"/><stop offset="0.433" stop-color="#ff2800"/><stop offset="0.711" stop-color="#ff1000"/><stop offset="1.000" stop-color="#ff0000"/></linearGradient><linearGradient id="i136" gradientUnits="userSpaceOnUse" x1="224" y1="125" x2="973" y2="-373"><stop offset="0.000" stop-color="#ffffff"/><stop offset="0.018" stop-color="#ffd8c6"/><stop offset="0.048" stop-color="#ffac83"/><stop offset="0.091" stop-color="#ff8441"/><stop offset="0.142" stop-color="#ff6600"/><stop offset="0.267" stop-color="#ff3e00"/><stop offset="0.433" stop-color="#ff2200"/><stop offset="0.711" stop-color="#ff0800"/><stop offset="0.844" stop-color="#ff0000"/><stop offset="1.000" stop-color="#ff0000"/></linearGradient><linearGradient id="i137" gradientUnits="userSpaceOnUse" x1="224" y1="125" x2="994" y2="-341"><stop offset="0.000" stop-color="#ffffff"/><stop offset="0.014" stop-color="#ffded0"/><stop offset="0.028" stop-color="#ffc6ae"/><stop offset="0.067" stop-color="#ff9566"/><stop offset="0.142" stop-color="#ff620b"/><stop offset="0.167" stop-color="#ff5800"/><stop offset="0.228" stop-color="#ff4300"/><stop offset="0.311" stop-color="#ff3000"/><stop offset="0.511" stop-color="#ff1300"/><stop offset="0.711" stop-color="#ff0000"/><stop offset="1.000" stop-color="#ff0000"/></linearGradient><linearGradient id="i138" gradientUnits="userSpaceOnUse" x1="224" y1="125" x2="1013" y2="-308"><stop offset="0.000" stop-color="#ffffff"/><stop offset="0.022" stop-color="#ffcebc"/><stop offset="0.057" stop-color="#ff9d78"/><stop offset="0.106" stop-color="#ff7439"/><stop offset="0.167" stop-color="#ff5400"/><stop offset="0.311" stop-color="#ff2b00"/><stop offset="0.600" stop-color="#ff0000"/><stop offset="1.000" stop-color="#ff0000"/></linearGradient><linearGradient id="i139" gradientUnits="userSpaceOnUse" x1="224" y1="125" x2="1030" y2="-275"><stop offset="0.000" stop-color="#ffffff"/><stop offset="0.011" stop-color="#ffe3db"/><stop offset="0.028" stop-color="#ffc3b0"/><stop offset="0.057" stop-color="#ff9b7b"/><stop offset="0.106" stop-color="#ff713e"/><stop offset="0.167" stop-color="#ff5003"/><stop offset="0.311" stop-color="#ff2700"/><stop offset="0.511" stop-color="#ff0500"/><stop offset="0.600" stop-color="#ff0000"/><stop offset="1.000" stop-color="#ff0000"/></linearGradient><linearGradient id="i140" gradientUnits="userSpaceOnUse" x1="224" y1="125" x2="1046" y2="-241"><stop offset="0.000" stop-color="#ffffff"/><stop offset="0.018" stop-color="#ffd4c9"/><stop offset="0.033" stop-color="#ffb8a6"/><stop offset="0.078" stop-color="#ff8461"/><stop offset="0.122" stop-color="#ff6334"/><stop offset="0.167" stop-color="#ff4d0e"/><stop offset="0.194" stop-color="#ff4200"/><stop offset="0.311" stop-color="#ff2200"/><stop offset="0.511" stop-color="#ff0000"/><stop offset="1.000" stop-color="#ff0000"/></linearGradient><linearGradient id="i141" gradientUnits="userSpaceOnUse" x1="224" y1="125" x2="1061" y2="-206"><stop offset="0.000" stop-color="#ffffff"/><stop offset="0.011" stop-color="#ffe2dc"/><stop offset="0.028" stop-color="#ffc0b3"/><stop offset="0.048" stop-color="#ffa28e"/><stop offset="0.067" stop-color="#ff8c73"/><stop offset="0.122" stop-color="#ff603a"/><stop offset="0.194" stop-color="#ff3f00"/><stop offset="0.311" stop-color="#ff1d00"/><stop offset="0.433" stop-color="#ff0400"/><stop offset="1.000" stop-color="#ff0000"/></linearGradient><linearGradient id="i142" gradientUnits="userSpaceOnUse" x1="224" y1="125" x2="1074" y2="-171"><stop offset="0.000" stop-color="#ffffff"/><stop offset="0.018" stop-color="#ffd2cb"/><stop offset="0.033" stop-color="#ffb5aa"/><stop offset="0.057" stop-color="#ff9583"/><stop offset="0.078" stop-color="#ff7f69"/><stop offset="0.142" stop-color="#ff5230"/><stop offset="0.194" stop-color="#ff3b0e"/><stop offset="0.228" stop-color="#ff3000"/><stop offset="0.433" stop-color="#ff0000"/><stop offset="1.000" stop-color="#ff0000"/></linearGradient><linearGradient id="i143" gradientUnits="userSpaceOnUse" x1="224" y1="125" x2="1085" y2="-135"><stop offset="0.000" stop-color="#ffffff"/><stop offset="0.011" stop-color="#ffe1dd"/><stop offset="0.028" stop-color="#ffbeb6"/><stop offset="0.048" stop-color="#ff9f93"/><stop offset="0.078" stop-color="#ff7d6d"/><stop offset="0.142" stop-color="#ff5037"/><stop offset="0.228" stop-color="#ff2c05"/><stop offset="0.367" stop-color="#ff0600"/><stop offset="0.433" stop-color="#ff0000"/><stop offset="1.000" stop-color="#ff0000"/></linearGradient><linearGradient id="i144" gradientUnits="userSpaceOnUse" x1="224" y1="125" x2="1096" y2="-99"><stop offset="0.000" stop-color="#ffffff"/><stop offset="0.018" stop-color="#ffd1ce"/><stop offset="0.040" stop-color="#ffa8a2"/><stop offset="0.067" stop-color="#ff867d"/><stop offset="0.091" stop-color="#ff6f64"/><stop offset="0.167" stop-color="#ff412f"/><stop offset="0.267" stop-color="#ff1c00"/><stop offset="0.367" stop-color="#ff0000"/><stop offset="1.000" stop-color="#ff0000"/></linearGradient><linearGradient id="i145" gradientUnits="userSpaceOnUse" x1="224" y1="125" x2="1104" y2="-62"><stop offset="0.000" stop-color="#ffffff"/><stop offset="0.018" stop-color="#ffd0cf"/><stop offset="0.040" stop-color="#ffa7a5"/><stop offset="0.067" stop-color="#ff8581"/><stop offset="0.091" stop-color="#ff6d68"/><stop offset="0.142" stop-color="#ff4a44"/><stop offset="0.194" stop-color="#ff3129"/><stop offset="0.311" stop-color="#ff0a00"/><stop offset="0.367" stop-color="#ff0000"/><stop offset="1.000" stop-color="#ff0000"/></linearGradient><linearGradient id="i146" gradientUnits="userSpaceOnUse" x1="224" y1="125" x2="1111" y2="-25"><stop offset="0.000" stop-color="#ffffff"/><stop offset="0.018" stop-color="#ffd0d0"/><stop offset="0.040" stop-color="#ffa6a7"/><stop offset="0.067" stop-color="#ff8385"/><stop offset="0.091" stop-color="#ff6b6d"/><stop offset="0.142" stop-color="#ff484a"/><stop offset="0.194" stop-color="#ff2e31"/><stop offset="0.311" stop-color="#ff040a"/><stop offset="0.367" stop-color="#ff0000"/><stop offset="1.000" stop-color="#ff0000"/></linearGradient><linearGradient id="i147" gradientUnits="userSpaceOnUse" x1="224" y1="125" x2="1117" y2="12"><stop offset="0.000" stop-color="#ffffff"/><stop offset="0.018" stop-color="#ffcfd2"/><stop offset="0.040" stop-color="#ffa5aa"/><stop offset="0.067" stop-color="#ff8288"/><stop offset="0.106" stop-color="#ff5e67"/><stop offset="0.142" stop-color="#ff4551"/><stop offset="0.194" stop-color="#ff2c39"/><stop offset="0.311" stop-color="#ff0016"/><stop offset="0.433" stop-color="#ff0000"/><stop offset="1.000" stop-color="#ff0000"/></linearGradient><linearGradient id="i148" gradientUnits="userSpaceOnUse" x1="224" y1="125" x2="1121" y2="50"><stop offset="0.000" stop-color="#ffffff"/><stop offset="0.018" stop-color="#ffcfd3"/><stop offset="0.040" stop-color="#ffa4ad"/><stop offset="0.067" stop-color="#ff808c"/><stop offset="0.091" stop-color="#ff6877"/><stop offset="0.167" stop-color="#ff364c"/><stop offset="0.267" stop-color="#ff0b2b"/><stop offset="0.311" stop-color="#ff0021"/><stop offset="0.511" stop-color="#ff0000"/><stop offset="1.000" stop-color="#ff0000"/></linearGradient><linearGradient id="i149" gradientUnits="userSpaceOnUse" x1="224" y1="125" x2="1123" y2="87"><stop offset="0.000" stop-color="#ffffff"/><stop offset="0.014" stop-color="#ffd6db"/><stop offset="0.028" stop-color="#ffb9c2"/><stop offset="0.048" stop-color="#ff98a5"/><stop offset="0.078" stop-color="#ff7386"/><stop offset="0.122" stop-color="#ff4e67"/><stop offset="0.167" stop-color="#ff3452"/><stop offset="0.267" stop-color="#ff0634"/><stop offset="0.311" stop-color="#ff002b"/><stop offset="0.600" stop-color="#ff0004"/><stop offset="1.000" stop-color="#ff0000"/></linearGradient></defs><g clip-path="url(#cl)" shape-rendering="crispEdges"><path d="M224,125 1224,104 1224,146z" fill="url(#o0)"/><path d="M224,125 1224,139 1222,181z" fill="url(#o1)"/><path d="M224,125 1223,174 1220,216z" fill="url(#o2)"/><path d="M224,125 1220,209 1216,250z" fill="url(#o3)"/><path d="M224,125 1217,244 1211,285z" fill="url(#o4)"/><path d="M224,125 1212,278 1205,319z" fill="url(#o5)"/><path d="M224,125 1206,312 1197,353z" fill="url(#o6)"/><path d="M224,125 1199,347 1189,387z" fill="url(#o7)"/><path d="M224,125 1191,381 1179,421z" fill="url(#o8)"/><path d="M224,125 1181,414 1168,454z" fill="url(#o9)"/><path d="M224,125 1170,447 1156,487z" fill="url(#o10)"/><path d="M224,125 1159,480 1143,519z" fill="url(#o11)"/><path d="M224,125 1146,513 1129,551z" fill="url(#o12)"/><path d="M224,125 1132,545 1113,582z" fill="url(#o13)"/><path d="M224,125 1116,576 1097,613z" fill="url(#o14)"/><path d="M224,125 1100,607 1079,643z" fill="url(#o15)"/><path d="M224,125 1083,637 1061,673z" fill="url(#o16)"/><path d="M224,125 1064,667 1041,702z" fill="url(#o17)"/><path d="M224,125 1045,696 1020,730z" fill="url(#o18)"/><path d="M224,125 1025,724 999,757z" fill="url(#o19)"/><path d="M224,125 1003,752 976,784z" fill="url(#o20)"/><path d="M224,125 981,779 953,810z" fill="url(#o21)"/><path d="M224,125 958,805 928,835z" fill="url(#o22)"/><path d="M224,125 933,830 903,859z" fill="url(#o23)"/><path d="M224,125 908,854 877,882z" fill="url(#o24)"/><path d="M224,125 883,878 850,904z" fill="url(#o25)"/><path d="M224,125 856,900 823,926z" fill="url(#o26)"/><path d="M224,125 828,922 795,946z" fill="url(#o27)"/><path d="M224,125 800,942 766,966z" fill="url(#o28)"/><path d="M224,125 771,962 736,984z" fill="url(#o29)"/><path d="M224,125 742,980 706,1001z" fill="url(#o30)"/><path d="M224,125 712,998 675,1018z" fill="url(#o31)"/><path d="M224,125 681,1015 643,1033z" fill="url(#o32)"/><path d="M224,125 650,1030 611,1047z" fill="url(#o33)"/><path d="M224,125 618,1044 579,1060z" fill="url(#o34)"/><path d="M224,125 585,1057 546,1072z" fill="url(#o35)"/><path d="M224,125 553,1069 513,1082z" fill="url(#o36)"/><path d="M224,125 520,1080 479,1092z" fill="url(#o37)"/><path d="M224,125 486,1090 445,1100z" fill="url(#o38)"/><path d="M224,125 452,1099 411,1107z" fill="url(#o39)"/><path d="M224,125 418,1106 377,1113z" fill="url(#o40)"/><path d="M224,125 384,1112 342,1118z" fill="url(#o41)"/><path d="M224,125 349,1117 308,1122z" fill="url(#o42)"/><path d="M224,125 314,1121 273,1124z" fill="url(#o43)"/><path d="M224,125 280,1124 238,1125z" fill="url(#o44)"/><path d="M224,125 245,1125 203,1125z" fill="url(#o45)"/><path d="M224,125 210,1125 168,1124z" fill="url(#o46)"/><path d="M224,125 175,1124 133,1121z" fill="url(#o47)"/><path d="M224,125 140,1122 99,1117z" fill="url(#o48)"/><path d="M224,125 105,1118 64,1112z" fill="url(#o49)"/><path d="M224,125 71,1113 30,1106z" fill="url(#o50)"/><path d="M224,125 36,1107 -5,1099z" fill="url(#o51)"/><path d="M224,125 2,1100 -38,1090z" fill="url(#o52)"/><path d="M224,125 -32,1092 -72,1080z" fill="url(#o53)"/><path d="M224,125 -65,1082 -105,1069z" fill="url(#o54)"/><path d="M224,125 -98,1072 -138,1057z" fill="url(#o55)"/><path d="M224,125 -131,1060 -170,1044z" fill="url(#o56)"/><path d="M224,125 -164,1047 -202,1030z" fill="url(#o57)"/><path d="M224,125 -196,1033 -233,1015z" fill="url(#o58)"/><path d="M224,125 -227,1018 -264,998z" fill="url(#o59)"/><path d="M224,125 -258,1001 -294,980z" fill="url(#o60)"/><path d="M224,125 -288,984 -324,962z" fill="url(#o61)"/><path d="M224,125 -318,966 -353,942z" fill="url(#o62)"/><path d="M224,125 -347,946 -381,922z" fill="url(#o63)"/><path d="M224,125 -375,926 -408,900z" fill="url(#o64)"/><path d="M224,125 -403,904 -435,878z" fill="url(#o65)"/><path d="M224,125 -430,882 -461,854z" fill="url(#o66)"/><path d="M224,125 -456,859 -486,830z" fill="url(#o67)"/><path d="M224,125 -481,835 -510,805z" fill="url(#o68)"/><path d="M224,125 -505,810 -533,779z" fill="url(#o69)"/><path d="M224,125 -529,784 -555,752z" fill="url(#o70)"/><path d="M224,125 -551,757 -577,724z" fill="url(#o71)"/><path d="M224,125 -573,730 -597,696z" fill="url(#o72)"/><path d="M224,125 -593,702 -617,667z" fill="url(#o73)"/><path d="M224,125 -613,673 -635,637z" fill="url(#o74)"/><path d="M224,125 -632,643 -652,607z" fill="url(#o75)"/><path d="M224,125 -649,613 -669,576z" fill="url(#o76)"/><path d="M224,125 -666,582 -684,545z" fill="url(#o77)"/><path d="M224,125 -681,551 -698,513z" fill="url(#o78)"/><path d="M224,125 -695,519 -711,480z" fill="url(#o79)"/><path d="M224,125 -708,487 -723,447z" fill="url(#o80)"/><path d="M224,125 -721,454 -733,414z" fill="url(#o81)"/><path d="M224,125 -731,421 -743,381z" fill="url(#o82)"/><path d="M224,125 -741,387 -751,347z" fill="url(#o83)"/><path d="M224,125 -750,353 -758,312z" fill="url(#o84)"/><path d="M224,125 -757,319 -764,278z" fill="url(#o85)"/><path d="M224,125 -763,285 -769,244z" fill="url(#o86)"/><path d="M224,125 -768,250 -773,209z" fill="url(#o87)"/><path d="M224,125 -772,216 -775,174z" fill="url(#o88)"/><path d="M224,125 -775,181 -776,139z" fill="url(#o89)"/><path d="M224,125 -776,146 -776,104z" fill="url(#o90)"/><path d="M224,125 -776,111 -775,69z" fill="url(#o91)"/><path d="M224,125 -775,76 -772,34z" fill="url(#o92)"/><path d="M224,125 -773,41 -768,-0z" fill="url(#o93)"/><path d="M224,125 -769,7 -763,-35z" fill="url(#o94)"/><path d="M224,125 -764,-28 -757,-69z" fill="url(#o95)"/><path d="M224,125 -758,-62 -750,-103z" fill="url(#o96)"/><path d="M224,125 -751,-96 -741,-137z" fill="url(#o97)"/><path d="M224,125 -743,-130 -731,-171z" fill="url(#o98)"/><path d="M224,125 -733,-164 -721,-204z" fill="url(#o99)"/><path d="M224,125 -723,-197 -708,-237z" fill="url(#o100)"/><path d="M224,125 -711,-230 -695,-269z" fill="url(#o101)"/><path d="M224,125 -698,-262 -681,-301z" fill="url(#o102)"/><path d="M224,125 -684,-294 -666,-332z" fill="url(#o103)"/><path d="M224,125 -669,-326 -649,-363z" fill="url(#o104)"/><path d="M224,125 -652,-357 -632,-393z" fill="url(#o105)"/><path d="M224,125 -635,-387 -613,-422z" fill="url(#o106)"/><path d="M224,125 -617,-417 -593,-451z" fill="url(#o107)"/><path d="M224,125 -597,-446 -573,-479z" fill="url(#o108)"/><path d="M224,125 -577,-474 -551,-507z" fill="url(#o109)"/><path d="M224,125 -555,-501 -529,-534z" fill="url(#o110)"/><path d="M224,125 -533,-528 -505,-559z" fill="url(#o111)"/><path d="M224,125 -510,-554 -481,-584z" fill="url(#o112)"/><path d="M224,125 -486,-580 -456,-609z" fill="url(#o113)"/><path d="M224,125 -461,-604 -430,-632z" fill="url(#o114)"/><path d="M224,125 -435,-627 -403,-654z" fill="url(#o115)"/><path d="M224,125 -408,-650 -375,-676z" fill="url(#o116)"/><path d="M224,125 -381,-671 -347,-696z" fill="url(#o117)"/><path d="M224,125 -353,-692 -318,-715z" fill="url(#o118)"/><path d="M224,125 -324,-712 -288,-734z" fill="url(#o119)"/><path d="M224,125 -294,-730 -258,-751z" fill="url(#o120)"/><path d="M224,125 -264,-748 -227,-767z" fill="url(#o121)"/><path d="M224,125 -233,-764 -196,-783z" fill="url(#o122)"/><path d="M224,125 -202,-780 -164,-797z" fill="url(#o123)"/><path d="M224,125 -170,-794 -131,-810z" fill="url(#o124)"/><path d="M224,125 -138,-807 -98,-822z" fill="url(#o125)"/><path d="M224,125 -105,-819 -65,-832z" fill="url(#o126)"/><path d="M224,125 -72,-830 -32,-842z" fill="url(#o127)"/><path d="M224,125 -38,-840 2,-850z" fill="url(#o128)"/><path d="M224,125 -5,-848 36,-857z" fill="url(#o129)"/><path d="M224,125 30,-856 71,-863z" fill="url(#o130)"/><path d="M224,125 64,-862 105,-868z" fill="url(#o131)"/><path d="M224,125 99,-867 140,-871z" fill="url(#o132)"/><path d="M224,125 133,-871 175,-874z" fill="url(#o133)"/><path d="M224,125 168,-873 210,-875z" fill="url(#o134)"/><path d="M224,125 203,-875 245,-875z" fill="url(#o135)"/><path d="M224,125 238,-875 280,-873z" fill="url(#o136)"/><path d="M224,125 273,-874 314,-871z" fill="url(#o137)"/><path d="M224,125 308,-871 349,-867z" fill="url(#o138)"/><path d="M224,125 342,-868 384,-862z" fill="url(#o139)"/><path d="M224,125 377,-863 418,-856z" fill="url(#o140)"/><path d="M224,125 411,-857 452,-848z" fill="url(#o141)"/><path d="M224,125 445,-850 486,-840z" fill="url(#o142)"/><path d="M224,125 479,-842 520,-830z" fill="url(#o143)"/><path d="M224,125 513,-832 553,-819z" fill="url(#o144)"/><path d="M224,125 546,-822 585,-807z" fill="url(#o145)"/><path d="M224,125 579,-810 618,-794z" fill="url(#o146)"/><path d="M224,125 611,-797 650,-780z" fill="url(#o147)"/><path d="M224,125 643,-783 681,-764z" fill="url(#o148)"/><path d="M224,125 675,-767 712,-748z" fill="url(#o149)"/><path d="M224,125 706,-751 742,-730z" fill="url(#o150)"/><path d="M224,125 736,-734 771,-712z" fill="url(#o151)"/><path d="M224,125 766,-715 800,-692z" fill="url(#o152)"/><path d="M224,125 795,-696 828,-671z" fill="url(#o153)"/><path d="M224,125 823,-676 856,-650z" fill="url(#o154)"/><path d="M224,125 850,-654 883,-627z" fill="url(#o155)"/><path d="M224,125 877,-632 908,-604z" fill="url(#o156)"/><path d="M224,125 903,-609 933,-580z" fill="url(#o157)"/><path d="M224,125 928,-584 958,-554z" fill="url(#o158)"/><path d="M224,125 953,-559 981,-528z" fill="url(#o159)"/><path d="M224,125 976,-534 1003,-501z" fill="url(#o160)"/><path d="M224,125 999,-507 1025,-474z" fill="url(#o161)"/><path d="M224,125 1020,-479 1045,-446z" fill="url(#o162)"/><path d="M224,125 1041,-451 1064,-417z" fill="url(#o163)"/><path d="M224,125 1061,-422 1083,-387z" fill="url(#o164)"/><path d="M224,125 1079,-393 1100,-357z" fill="url(#o165)"/><path d="M224,125 1097,-363 1116,-326z" fill="url(#o166)"/><path d="M224,125 1113,-332 1132,-294z" fill="url(#o167)"/><path d="M224,125 1129,-301 1146,-262z" fill="url(#o168)"/><path d="M224,125 1143,-269 1159,-230z" fill="url(#o169)"/><path d="M224,125 1156,-237 1170,-197z" fill="url(#o170)"/><path d="M224,125 1168,-204 1181,-164z" fill="url(#o171)"/><path d="M224,125 1179,-171 1191,-130z" fill="url(#o172)"/><path d="M224,125 1189,-137 1199,-96z" fill="url(#o173)"/><path d="M224,125 1197,-103 1206,-62z" fill="url(#o174)"/><path d="M224,125 1205,-69 1212,-28z" fill="url(#o175)"/><path d="M224,125 1211,-35 1217,7z" fill="url(#o176)"/><path d="M224,125 1216,-0 1220,41z" fill="url(#o177)"/><path d="M224,125 1220,34 1223,76z" fill="url(#o178)"/><path d="M224,125 1222,69 1224,111z" fill="url(#o179)"/></g><g clip-path="url(#ct)" shape-rendering="crispEdges"><path d="M224,125 1224,101 1224,150z" fill="url(#i0)"/><path d="M224,125 1224,143 1222,191z" fill="url(#i1)"/><path d="M224,125 1222,184 1218,233z" fill="url(#i2)"/><path d="M224,125 1219,226 1213,275z" fill="url(#i3)"/><path d="M224,125 1214,268 1205,316z" fill="url(#i4)"/><path d="M224,125 1207,309 1197,357z" fill="url(#i5)"/><path d="M224,125 1198,350 1186,397z" fill="url(#i6)"/><path d="M224,125 1188,391 1174,437z" fill="url(#i7)"/><path d="M224,125 1176,431 1160,477z" fill="url(#i8)"/><path d="M224,125 1162,470 1144,516z" fill="url(#i9)"/><path d="M224,125 1147,509 1127,554z" fill="url(#i10)"/><path d="M224,125 1130,548 1108,592z" fill="url(#i11)"/><path d="M224,125 1112,585 1088,628z" fill="url(#i12)"/><path d="M224,125 1092,622 1066,664z" fill="url(#i13)"/><path d="M224,125 1070,658 1043,699z" fill="url(#i14)"/><path d="M224,125 1047,693 1018,732z" fill="url(#i15)"/><path d="M224,125 1022,727 992,765z" fill="url(#i16)"/><path d="M224,125 997,760 965,797z" fill="url(#i17)"/><path d="M224,125 969,792 936,827z" fill="url(#i18)"/><path d="M224,125 941,822 906,856z" fill="url(#i19)"/><path d="M224,125 911,852 875,884z" fill="url(#i20)"/><path d="M224,125 880,880 842,911z" fill="url(#i21)"/><path d="M224,125 848,907 809,936z" fill="url(#i22)"/><path d="M224,125 814,932 774,960z" fill="url(#i23)"/><path d="M224,125 780,956 739,982z" fill="url(#i24)"/><path d="M224,125 745,979 703,1003z" fill="url(#i25)"/><path d="M224,125 709,1000 665,1022z" fill="url(#i26)"/><path d="M224,125 672,1019 627,1040z" fill="url(#i27)"/><path d="M224,125 634,1037 589,1056z" fill="url(#i28)"/><path d="M224,125 595,1054 549,1071z" fill="url(#i29)"/><path d="M224,125 556,1068 510,1083z" fill="url(#i30)"/><path d="M224,125 516,1081 469,1095z" fill="url(#i31)"/><path d="M224,125 476,1093 428,1104z" fill="url(#i32)"/><path d="M224,125 435,1103 387,1112z" fill="url(#i33)"/><path d="M224,125 394,1111 346,1118z" fill="url(#i34)"/><path d="M224,125 353,1117 304,1122z" fill="url(#i35)"/><path d="M224,125 311,1121 262,1124z" fill="url(#i36)"/><path d="M224,125 269,1124 220,1125z" fill="url(#i37)"/><path d="M224,125 227,1125 178,1124z" fill="url(#i38)"/><path d="M224,125 185,1124 137,1121z" fill="url(#i39)"/><path d="M224,125 144,1122 95,1117z" fill="url(#i40)"/><path d="M224,125 102,1118 54,1111z" fill="url(#i41)"/><path d="M224,125 61,1112 13,1103z" fill="url(#i42)"/><path d="M224,125 19,1104 -28,1093z" fill="url(#i43)"/><path d="M224,125 -21,1095 -69,1081z" fill="url(#i44)"/><path d="M224,125 -62,1083 -108,1068z" fill="url(#i45)"/><path d="M224,125 -102,1071 -148,1054z" fill="url(#i46)"/><path d="M224,125 -141,1056 -186,1037z" fill="url(#i47)"/><path d="M224,125 -180,1040 -224,1019z" fill="url(#i48)"/><path d="M224,125 -218,1022 -261,1000z" fill="url(#i49)"/><path d="M224,125 -255,1003 -297,979z" fill="url(#i50)"/><path d="M224,125 -291,982 -332,956z" fill="url(#i51)"/><path d="M224,125 -327,960 -367,932z" fill="url(#i52)"/><path d="M224,125 -361,936 -400,907z" fill="url(#i53)"/><path d="M224,125 -395,911 -432,880z" fill="url(#i54)"/><path d="M224,125 -427,884 -463,852z" fill="url(#i55)"/><path d="M224,125 -458,856 -493,822z" fill="url(#i56)"/><path d="M224,125 -488,827 -522,792z" fill="url(#i57)"/><path d="M224,125 -517,797 -549,760z" fill="url(#i58)"/><path d="M224,125 -544,765 -575,727z" fill="url(#i59)"/><path d="M224,125 -571,732 -599,693z" fill="url(#i60)"/><path d="M224,125 -595,699 -622,658z" fill="url(#i61)"/><path d="M224,125 -619,664 -644,622z" fill="url(#i62)"/><path d="M224,125 -640,628 -664,585z" fill="url(#i63)"/><path d="M224,125 -661,592 -682,548z" fill="url(#i64)"/><path d="M224,125 -679,554 -699,509z" fill="url(#i65)"/><path d="M224,125 -697,516 -715,470z" fill="url(#i66)"/><path d="M224,125 -712,477 -728,431z" fill="url(#i67)"/><path d="M224,125 -726,437 -740,391z" fill="url(#i68)"/><path d="M224,125 -738,397 -751,350z" fill="url(#i69)"/><path d="M224,125 -749,357 -759,309z" fill="url(#i70)"/><path d="M224,125 -758,316 -766,268z" fill="url(#i71)"/><path d="M224,125 -765,275 -771,226z" fill="url(#i72)"/><path d="M224,125 -770,233 -774,184z" fill="url(#i73)"/><path d="M224,125 -774,191 -776,143z" fill="url(#i74)"/><path d="M224,125 -776,150 -776,101z" fill="url(#i75)"/><path d="M224,125 -776,108 -774,59z" fill="url(#i76)"/><path d="M224,125 -774,66 -770,17z" fill="url(#i77)"/><path d="M224,125 -771,24 -765,-24z" fill="url(#i78)"/><path d="M224,125 -766,-18 -758,-66z" fill="url(#i79)"/><path d="M224,125 -759,-59 -749,-107z" fill="url(#i80)"/><path d="M224,125 -751,-100 -738,-147z" fill="url(#i81)"/><path d="M224,125 -740,-140 -726,-187z" fill="url(#i82)"/><path d="M224,125 -728,-181 -712,-227z" fill="url(#i83)"/><path d="M224,125 -715,-220 -697,-266z" fill="url(#i84)"/><path d="M224,125 -699,-259 -679,-304z" fill="url(#i85)"/><path d="M224,125 -682,-298 -661,-341z" fill="url(#i86)"/><path d="M224,125 -664,-335 -640,-378z" fill="url(#i87)"/><path d="M224,125 -644,-372 -619,-414z" fill="url(#i88)"/><path d="M224,125 -622,-408 -595,-448z" fill="url(#i89)"/><path d="M224,125 -599,-443 -571,-482z" fill="url(#i90)"/><path d="M224,125 -575,-477 -544,-515z" fill="url(#i91)"/><path d="M224,125 -549,-510 -517,-547z" fill="url(#i92)"/><path d="M224,125 -522,-541 -488,-577z" fill="url(#i93)"/><path d="M224,125 -493,-572 -458,-606z" fill="url(#i94)"/><path d="M224,125 -463,-601 -427,-634z" fill="url(#i95)"/><path d="M224,125 -432,-630 -395,-661z" fill="url(#i96)"/><path d="M224,125 -400,-656 -361,-686z" fill="url(#i97)"/><path d="M224,125 -367,-682 -327,-710z" fill="url(#i98)"/><path d="M224,125 -332,-706 -291,-732z" fill="url(#i99)"/><path d="M224,125 -297,-728 -255,-753z" fill="url(#i100)"/><path d="M224,125 -261,-750 -218,-772z" fill="url(#i101)"/><path d="M224,125 -224,-769 -180,-790z" fill="url(#i102)"/><path d="M224,125 -186,-787 -141,-806z" fill="url(#i103)"/><path d="M224,125 -148,-803 -102,-820z" fill="url(#i104)"/><path d="M224,125 -108,-818 -62,-833z" fill="url(#i105)"/><path d="M224,125 -69,-831 -21,-844z" fill="url(#i106)"/><path d="M224,125 -28,-843 19,-854z" fill="url(#i107)"/><path d="M224,125 13,-852 61,-861z" fill="url(#i108)"/><path d="M224,125 54,-860 102,-867z" fill="url(#i109)"/><path d="M224,125 95,-867 144,-872z" fill="url(#i110)"/><path d="M224,125 137,-871 185,-874z" fill="url(#i111)"/><path d="M224,125 178,-874 227,-875z" fill="url(#i112)"/><path d="M224,125 220,-875 269,-874z" fill="url(#i113)"/><path d="M224,125 262,-874 311,-871z" fill="url(#i114)"/><path d="M224,125 304,-872 353,-867z" fill="url(#i115)"/><path d="M224,125 346,-867 394,-860z" fill="url(#i116)"/><path d="M224,125 387,-861 435,-852z" fill="url(#i117)"/><path d="M224,125 428,-854 476,-843z" fill="url(#i118)"/><path d="M224,125 469,-844 516,-831z" fill="url(#i119)"/><path d="M224,125 510,-833 556,-818z" fill="url(#i120)"/><path d="M224,125 549,-820 595,-803z" fill="url(#i121)"/><path d="M224,125 589,-806 634,-787z" fill="url(#i122)"/><path d="M224,125 627,-790 672,-769z" fill="url(#i123)"/><path d="M224,125 665,-772 709,-750z" fill="url(#i124)"/><path d="M224,125 703,-753 745,-728z" fill="url(#i125)"/><path d="M224,125 739,-732 780,-706z" fill="url(#i126)"/><path d="M224,125 774,-710 814,-682z" fill="url(#i127)"/><path d="M224,125 809,-686 848,-656z" fill="url(#i128)"/><path d="M224,125 842,-661 880,-630z" fill="url(#i129)"/><path d="M224,125 875,-634 911,-601z" fill="url(#i130)"/><path d="M224,125 906,-606 941,-572z" fill="url(#i131)"/><path d="M224,125 936,-577 969,-541z" fill="url(#i132)"/><path d="M224,125 965,-547 997,-510z" fill="url(#i133)"/><path d="M224,125 992,-515 1022,-477z" fill="url(#i134)"/><path d="M224,125 1018,-482 1047,-443z" fill="url(#i135)"/><path d="M224,125 1043,-448 1070,-408z" fill="url(#i136)"/><path d="M224,125 1066,-414 1092,-372z" fill="url(#i137)"/><path d="M224,125 1088,-378 1112,-335z" fill="url(#i138)"/><path d="M224,125 1108,-341 1130,-298z" fill="url(#i139)"/><path d="M224,125 1127,-304 1147,-259z" fill="url(#i140)"/><path d="M224,125 1144,-266 1162,-220z" fill="url(#i141)"/><path d="M224,125 1160,-227 1176,-181z" fill="url(#i142)"/><path d="M224,125 1174,-187 1188,-140z" fill="url(#i143)"/><path d="M224,125 1186,-147 1198,-100z" fill="url(#i144)"/><path d="M224,125 1197,-107 1207,-59z" fill="url(#i145)"/><path d="M224,125 1205,-66 1214,-18z" fill="url(#i146)"/><path d="M224,125 1213,-24 1219,24z" fill="url(#i147)"/><path d="M224,125 1218,17 1222,66z" fill="url(#i148)"/><path d="M224,125 1222,59 1224,108z" fill="url(#i149)"/></g></svg>
<div class="b" style="left:1229px;top:116px;width:681px;height:571px;border:1.5px solid #9a9a9a"></div>
<div class="b" style="left:1223px;top:685.7px;width:7px;height:1.2px;background:#dcdcdc"></div>
<div class="t" style="left:1213.65px;top:679.38px;font-size:17.15px;line-height:17.15px;color:#e6e6e6;transform:scaleX(0.9300);">0</div>
<div class="b" style="left:1230px;top:686.5px;width:1.3px;height:7px;background:#dcdcdc"></div>
<div class="t" style="left:1225.56px;top:698.52px;font-size:16.86px;line-height:16.86px;color:#e6e6e6;transform:scaleX(0.9500);">0</div>
<div class="b" style="left:1223px;top:640.5px;width:7px;height:1.2px;background:#dcdcdc"></div>
<div class="t" style="left:1191.48px;top:632.88px;font-size:17.15px;line-height:17.15px;color:#e6e6e6;transform:scaleX(0.9300);">0.05</div>
<div class="b" style="left:1286px;top:686.5px;width:1.3px;height:7px;background:#dcdcdc"></div>
<div class="t" style="left:1271.01px;top:698.52px;font-size:16.86px;line-height:16.86px;color:#e6e6e6;transform:scaleX(0.9500);">0.05</div>
<div class="b" style="left:1223px;top:593.0px;width:7px;height:1.2px;background:#dcdcdc"></div>
<div class="t" style="left:1200.33px;top:585.38px;font-size:17.15px;line-height:17.15px;color:#e6e6e6;transform:scaleX(0.9300);">0.1</div>
<div class="b" style="left:1343px;top:686.5px;width:1.3px;height:7px;background:#dcdcdc"></div>
<div class="t" style="left:1332.03px;top:698.52px;font-size:16.86px;line-height:16.86px;color:#e6e6e6;transform:scaleX(0.9500);">0.1</div>
<div class="b" style="left:1223px;top:545.5px;width:7px;height:1.2px;background:#dcdcdc"></div>
<div class="t" style="left:1191.48px;top:537.88px;font-size:17.15px;line-height:17.15px;color:#e6e6e6;transform:scaleX(0.9300);">0.15</div>
<div class="b" style="left:1399px;top:686.5px;width:1.3px;height:7px;background:#dcdcdc"></div>
<div class="t" style="left:1384.17px;top:698.52px;font-size:16.86px;line-height:16.86px;color:#e6e6e6;transform:scaleX(0.9500);">0.15</div>
<div class="b" style="left:1223px;top:498.0px;width:7px;height:1.2px;background:#dcdcdc"></div>
<div class="t" style="left:1200.33px;top:490.38px;font-size:17.15px;line-height:17.15px;color:#e6e6e6;transform:scaleX(0.9300);">0.2</div>
<div class="b" style="left:1456px;top:686.5px;width:1.3px;height:7px;background:#dcdcdc"></div>
<div class="t" style="left:1445.20px;top:698.52px;font-size:16.86px;line-height:16.86px;color:#e6e6e6;transform:scaleX(0.9500);">0.2</div>
<div class="b" style="left:1223px;top:450.5px;width:7px;height:1.2px;background:#dcdcdc"></div>
<div class="t" style="left:1191.48px;top:442.88px;font-size:17.15px;line-height:17.15px;color:#e6e6e6;transform:scaleX(0.9300);">0.25</div>
<div class="b" style="left:1512px;top:686.5px;width:1.3px;height:7px;background:#dcdcdc"></div>
<div class="t" style="left:1497.34px;top:698.52px;font-size:16.86px;line-height:16.86px;color:#e6e6e6;transform:scaleX(0.9500);">0.25</div>
<div class="b" style="left:1223px;top:403.0px;width:7px;height:1.2px;background:#dcdcdc"></div>
<div class="t" style="left:1200.33px;top:395.38px;font-size:17.15px;line-height:17.15px;color:#e6e6e6;transform:scaleX(0.9300);">0.3</div>
<div class="b" style="left:1569px;top:686.5px;width:1.3px;height:7px;background:#dcdcdc"></div>
<div class="t" style="left:1558.37px;top:698.52px;font-size:16.86px;line-height:16.86px;color:#e6e6e6;transform:scaleX(0.9500);">0.3</div>
<div class="b" style="left:1223px;top:355.5px;width:7px;height:1.2px;background:#dcdcdc"></div>
<div class="t" style="left:1191.48px;top:347.88px;font-size:17.15px;line-height:17.15px;color:#e6e6e6;transform:scaleX(0.9300);">0.35</div>
<div class="b" style="left:1626px;top:686.5px;width:1.3px;height:7px;background:#dcdcdc"></div>
<div class="t" style="left:1610.51px;top:698.52px;font-size:16.86px;line-height:16.86px;color:#e6e6e6;transform:scaleX(0.9500);">0.35</div>
<div class="b" style="left:1223px;top:308.0px;width:7px;height:1.2px;background:#dcdcdc"></div>
<div class="t" style="left:1200.33px;top:300.38px;font-size:17.15px;line-height:17.15px;color:#e6e6e6;transform:scaleX(0.9300);">0.4</div>
<div class="b" style="left:1682px;top:686.5px;width:1.3px;height:7px;background:#dcdcdc"></div>
<div class="t" style="left:1671.53px;top:698.52px;font-size:16.86px;line-height:16.86px;color:#e6e6e6;transform:scaleX(0.9500);">0.4</div>
<div class="b" style="left:1223px;top:260.5px;width:7px;height:1.2px;background:#dcdcdc"></div>
<div class="t" style="left:1191.48px;top:252.88px;font-size:17.15px;line-height:17.15px;color:#e6e6e6;transform:scaleX(0.9300);">0.45</div>
<div class="b" style="left:1739px;top:686.5px;width:1.3px;height:7px;background:#dcdcdc"></div>
<div class="t" style="left:1723.67px;top:698.52px;font-size:16.86px;line-height:16.86px;color:#e6e6e6;transform:scaleX(0.9500);">0.45</div>
<div class="b" style="left:1223px;top:213.0px;width:7px;height:1.2px;background:#dcdcdc"></div>
<div class="t" style="left:1200.33px;top:205.38px;font-size:17.15px;line-height:17.15px;color:#e6e6e6;transform:scaleX(0.9300);">0.5</div>
<div class="b" style="left:1795px;top:686.5px;width:1.3px;height:7px;background:#dcdcdc"></div>
<div class="t" style="left:1784.70px;top:698.52px;font-size:16.86px;line-height:16.86px;color:#e6e6e6;transform:scaleX(0.9500);">0.5</div>
<div class="b" style="left:1223px;top:165.5px;width:7px;height:1.2px;background:#dcdcdc"></div>
<div class="t" style="left:1191.48px;top:157.88px;font-size:17.15px;line-height:17.15px;color:#e6e6e6;transform:scaleX(0.9300);">0.55</div>
<div class="b" style="left:1852px;top:686.5px;width:1.3px;height:7px;background:#dcdcdc"></div>
<div class="t" style="left:1836.84px;top:698.52px;font-size:16.86px;line-height:16.86px;color:#e6e6e6;transform:scaleX(0.9500);">0.55</div>
<div class="b" style="left:1363.0px;top:144.2px;width:15px;height:15px;border:2px solid #fff"></div>
<div class="b" style="left:1388.4px;top:172.8px;width:15px;height:15px;border:2px solid #fff"></div>
<div class="b" style="left:1430.5px;top:163.0px;width:15px;height:15px;border:2px solid #fff"></div>
<div class="b" style="left:1452.2px;top:153.8px;width:15px;height:15px;border:2px solid #fff"></div>
<div class="b" style="left:1481.2px;top:158.7px;width:15px;height:15px;border:2px solid #fff"></div>
<div class="b" style="left:1514.6px;top:166.3px;width:15px;height:15px;border:2px solid #fff"></div>
<div class="b" style="left:1427.3px;top:188.4px;width:15px;height:15px;border:2px solid #fff"></div>
<div class="b" style="left:1396.0px;top:224.5px;width:15px;height:15px;border:2px solid #fff"></div>
<div class="b" style="left:1378.8px;top:246.5px;width:15px;height:15px;border:2px solid #fff"></div>
<div class="b" style="left:1580.8px;top:219.9px;width:15px;height:15px;border:2px solid #fff"></div>
<div class="b" style="left:1546.2px;top:273.2px;width:15px;height:15px;border:2px solid #fff"></div>
<div class="b" style="left:1384.2px;top:282.4px;width:15px;height:15px;border:2px solid #fff"></div>
<div class="b" style="left:1420.6px;top:279.7px;width:15px;height:15px;border:2px solid #fff"></div>
<div class="b" style="left:1442.3px;top:284.8px;width:15px;height:15px;border:2px solid #fff"></div>
<div class="b" style="left:1479.6px;top:306.4px;width:15px;height:15px;border:2px solid #fff"></div>
<div class="b" style="left:1423.2px;top:340.8px;width:15px;height:15px;border:2px solid #fff"></div>
<div class="b" style="left:1423.2px;top:399.6px;width:15px;height:15px;border:2px solid #fff"></div>
<div class="b" style="left:1566.4px;top:365.2px;width:15px;height:15px;border:2px solid #fff"></div>
<div class="b" style="left:1420.8px;top:528.8px;width:15px;height:15px;border:2px solid #fff"></div>
<div class="b" style="left:1730.0px;top:181.9px;width:15px;height:15px;border:2px solid #fff"></div>
<div class="b" style="left:1645.1px;top:204.6px;width:15px;height:15px;border:2px solid #fff"></div>
<div class="b" style="left:1560.4px;top:170.5px;width:15px;height:15px;border:2px solid #fff"></div>
<div class="b" style="left:1560.4px;top:180.5px;width:15px;height:15px;border:2px solid #fff"></div>
<div class="b" style="left:1528.0px;top:179.9px;width:15px;height:15px;border:2px solid #fff"></div>
<div class="b" style="left:1534.8px;top:186.8px;width:15px;height:15px;border:2px solid #fff"></div>
<div class="b" style="left:1540.8px;top:186.8px;width:15px;height:15px;border:2px solid #fff"></div>
<div class="b" style="left:1507.6px;top:190.2px;width:15px;height:15px;border:2px solid #fff"></div>
<div class="b" style="left:1518.7px;top:189.3px;width:15px;height:15px;border:2px solid #fff"></div>
<div class="b" style="left:1532.3px;top:194.4px;width:15px;height:15px;border:2px solid #fff"></div>
<div class="b" style="left:1502.5px;top:197.8px;width:15px;height:15px;border:2px solid #fff"></div>
<div class="b" style="left:1507.6px;top:200.4px;width:15px;height:15px;border:2px solid #fff"></div>
<div class="b" style="left:1533.1px;top:196.1px;width:15px;height:15px;border:2px solid #fff"></div>
<div class="b" style="left:1485.5px;top:200.4px;width:15px;height:15px;border:2px solid #fff"></div>
<div class="b" style="left:1498.2px;top:205.5px;width:15px;height:15px;border:2px solid #fff"></div>
<div class="b" style="left:1485.5px;top:210.6px;width:15px;height:15px;border:2px solid #fff"></div>
<div class="b" style="left:1444.7px;top:234.2px;width:15px;height:15px;border:2px solid #111"></div>
<div class="b" style="left:1363.6px;top:148.0px;width:10.6px;height:10.6px;border-radius:50%;background:#00ff00;border:1.5px solid #111"></div>
<div class="b" style="left:1389.7px;top:175.0px;width:10.6px;height:10.6px;border-radius:50%;background:#4f8a50;border:1.5px solid #111"></div>
<div class="b" style="left:1434.0px;top:165.2px;width:10.6px;height:10.6px;border-radius:50%;background:#a0b050;border:1.5px solid #111"></div>
<div class="b" style="left:1457.1px;top:156.0px;width:10.6px;height:10.6px;border-radius:50%;background:#ffff00;border:1.5px solid #111"></div>
<div class="b" style="left:1484.9px;top:160.9px;width:10.6px;height:10.6px;border-radius:50%;background:#e8c838;border:1.5px solid #111"></div>
<div class="b" style="left:1517.9px;top:168.5px;width:10.6px;height:10.6px;border-radius:50%;background:#e0a838;border:1.5px solid #111"></div>
<div class="b" style="left:1431.1px;top:189.3px;width:10.6px;height:10.6px;border-radius:50%;background:#5a6a48;border:1.5px solid #111"></div>
<div class="b" style="left:1395.3px;top:226.7px;width:10.6px;height:10.6px;border-radius:50%;background:#70b0a0;border:1.5px solid #111"></div>
<div class="b" style="left:1374.9px;top:242.3px;width:10.6px;height:10.6px;border-radius:50%;background:#00ffff;border:1.5px solid #111"></div>
<div class="b" style="left:1447.2px;top:230.7px;width:10.6px;height:10.6px;border-radius:50%;background:#777;border:1.5px solid #111"></div>
<div class="b" style="left:1447.2px;top:235.2px;width:10.6px;height:10.6px;border-radius:50%;background:#a0a0a0;border:1.5px solid #111"></div>
<div class="b" style="left:1583.0px;top:220.9px;width:10.6px;height:10.6px;border-radius:50%;background:#c05868;border:1.5px solid #111"></div>
<div class="b" style="left:1546.8px;top:272.2px;width:10.6px;height:10.6px;border-radius:50%;background:#b85a98;border:1.5px solid #111"></div>
<div class="b" style="left:1379.7px;top:283.8px;width:10.6px;height:10.6px;border-radius:50%;background:#0a80a0;border:1.5px solid #111"></div>
<div class="b" style="left:1418.6px;top:278.7px;width:10.6px;height:10.6px;border-radius:50%;background:#6080a8;border:1.5px solid #111"></div>
<div class="b" style="left:1441.2px;top:283.8px;width:10.6px;height:10.6px;border-radius:50%;background:#8a88b8;border:1.5px solid #111"></div>
<div class="b" style="left:1467.7px;top:316.5px;width:10.6px;height:10.6px;border-radius:50%;background:#5a4060;border:1.5px solid #111"></div>
<div class="b" style="left:1416.9px;top:340.4px;width:10.6px;height:10.6px;border-radius:50%;background:#5060a0;border:1.5px solid #111"></div>
<div class="b" style="left:1415.6px;top:403.1px;width:10.6px;height:10.6px;border-radius:50%;background:#404a90;border:1.5px solid #111"></div>
<div class="b" style="left:1568.6px;top:351.5px;width:10.6px;height:10.6px;border-radius:50%;background:#ff00ff;border:1.5px solid #111"></div>
<div class="b" style="left:1405.5px;top:523.0px;width:10.6px;height:10.6px;border-radius:50%;background:#0000ff;border:1.5px solid #111"></div>
<div class="b" style="left:1729.7px;top:182.9px;width:10.6px;height:10.6px;border-radius:50%;background:#ff0000;border:1.5px solid #111"></div>
<div class="b" style="left:1651.7px;top:205.5px;width:10.6px;height:10.6px;border-radius:50%;background:#b03840;border:1.5px solid #111"></div>
<div class="b" style="left:1560.0px;top:176.2px;width:10.6px;height:10.6px;border-radius:50%;background:#d08030;border:1.5px solid #111"></div>
<div class="b" style="left:1568.5px;top:174.9px;width:10.6px;height:10.6px;border-radius:50%;background:#b06828;border:1.5px solid #111"></div>
<div class="b" style="left:1555.6px;top:186.0px;width:10.6px;height:10.6px;border-radius:50%;background:#6a4028;border:1.5px solid #111"></div>
<div class="b" style="left:1545.1px;top:180.9px;width:10.6px;height:10.6px;border-radius:50%;background:#7a4a28;border:1.5px solid #111"></div>
<div class="b" style="left:1531.1px;top:182.6px;width:10.6px;height:10.6px;border-radius:50%;background:#8a5a38;border:1.5px solid #111"></div>
<div class="b" style="left:1526.4px;top:191.9px;width:10.6px;height:10.6px;border-radius:50%;background:#d09068;border:1.5px solid #111"></div>
<div class="b" style="left:1532.8px;top:192.4px;width:10.6px;height:10.6px;border-radius:50%;background:#c08060;border:1.5px solid #111"></div>
<div class="b" style="left:1534.1px;top:197.0px;width:10.6px;height:10.6px;border-radius:50%;background:#e8a080;border:1.5px solid #111"></div>
<div class="b" style="left:1511.1px;top:191.1px;width:10.6px;height:10.6px;border-radius:50%;background:#c89070;border:1.5px solid #111"></div>
<div class="b" style="left:1505.6px;top:206.0px;width:10.6px;height:10.6px;border-radius:50%;background:#7a5040;border:1.5px solid #111"></div>
<div class="b" style="left:1502.1px;top:201.7px;width:10.6px;height:10.6px;border-radius:50%;background:#c08868;border:1.5px solid #111"></div>
<div class="b" style="left:1509.0px;top:198.3px;width:10.6px;height:10.6px;border-radius:50%;background:#d0a080;border:1.5px solid #111"></div>
<div class="b" style="left:1519.6px;top:200.4px;width:10.6px;height:10.6px;border-radius:50%;background:#d09070;border:1.5px solid #111"></div>
<div class="b" style="left:1487.7px;top:201.3px;width:10.6px;height:10.6px;border-radius:50%;background:#f0c8a8;border:1.5px solid #111"></div>
<div class="b" style="left:1488.1px;top:214.9px;width:10.6px;height:10.6px;border-radius:50%;background:#d8a088;border:1.5px solid #111"></div>
<div class="b" style="left:1484.7px;top:211.1px;width:10.6px;height:10.6px;border-radius:50%;background:#f0c8b0;border:1.5px solid #111"></div>
<div class="b" style="left:1456.0px;top:261.3px;width:10.6px;height:10.6px;border-radius:50%;background:#000;border:1.5px solid #111"></div>
<div class="b" style="left:1689px;top:485px;width:216px;height:155px;background:#1a1a1a"></div>
<div class="b" style="left:1691.3px;top:487.4px;width:211px;height:150.4px;border:2px solid #8a8a8a;background:linear-gradient(150deg,#ff8c2c,#ff6428 45%,#ff4426)"></div>
<div class="b" style="left:1830.3px;top:508.8px;width:15px;height:15px;border:2px solid #fff"></div>
<div class="b" style="left:1882.1px;top:510.3px;width:15px;height:15px;border:2px solid #fff"></div>
<div class="b" style="left:1719.0px;top:532.1px;width:15px;height:15px;border:2px solid #fff"></div>
<div class="b" style="left:1880.3px;top:552.7px;width:15px;height:15px;border:2px solid #fff"></div>
<div class="b" style="left:1788.2px;top:553.8px;width:15px;height:15px;border:2px solid #fff"></div>
<div class="b" style="left:1808.2px;top:569.5px;width:15px;height:15px;border:2px solid #fff"></div>
<div class="b" style="left:1696.2px;top:569.0px;width:15px;height:15px;border:2px solid #fff"></div>
<div class="b" style="left:1702.7px;top:579.5px;width:15px;height:15px;border:2px solid #fff"></div>
<div class="b" style="left:1711.8px;top:593.4px;width:15px;height:15px;border:2px solid #fff"></div>
<div class="b" style="left:1792.5px;top:598.4px;width:15px;height:15px;border:2px solid #fff"></div>
<div class="b" style="left:1867.6px;top:508.4px;width:9.2px;height:9.2px;border-radius:50%;background:#8a5530;border:1.5px solid #111"></div>
<div class="b" style="left:1727.4px;top:536.7px;width:9.2px;height:9.2px;border-radius:50%;background:#c08858;border:1.5px solid #111"></div>
<div class="b" style="left:1794.1px;top:557.1px;width:9.2px;height:9.2px;border-radius:50%;background:#d89070;border:1.5px solid #111"></div>
<div class="b" style="left:1812.6px;top:571.3px;width:9.2px;height:9.2px;border-radius:50%;background:#c08060;border:1.5px solid #111"></div>
<div class="b" style="left:1692.6px;top:574.1px;width:9.2px;height:9.2px;border-radius:50%;background:#f0b090;border:1.5px solid #111"></div>
<div class="b" style="left:1710.0px;top:582.4px;width:9.2px;height:9.2px;border-radius:50%;background:#c08060;border:1.5px solid #111"></div>
<div class="b" style="left:1717.6px;top:595.2px;width:9.2px;height:9.2px;border-radius:50%;background:#b07050;border:1.5px solid #111"></div>
<div class="b" style="left:1792.6px;top:598.0px;width:9.2px;height:9.2px;border-radius:50%;background:#f09a78;border:1.5px solid #111"></div>
<div class="b" style="left:1637.8px;top:649.3px;width:267px;height:31px;background:#2c2c2c"></div>
<div class="t" style="left:1638.50px;top:655.33px;font-size:21.22px;line-height:21.22px;color:#f2f2f2;transform:scaleX(0.9830);">RGB Triplet: 217, 140, 94</div>
<div class="t" style="left:204.00px;top:736.72px;font-size:31.98px;line-height:31.98px;color:#f0f0f0;transform:scaleX(0.9695);">Avg dE2000: 1.97</div>
<div class="t" style="left:199.90px;top:783.32px;font-size:31.98px;line-height:31.98px;color:#f0f0f0;transform:scaleX(0.9854);">Max dE2000: 5.46</div>
<div class="t" style="left:166.40px;top:839.52px;font-size:31.98px;line-height:31.98px;color:#f0f0f0;transform:scaleX(0.9867);">Current Reading</div>
<div class="t" style="left:166.40px;top:883.89px;font-size:29.07px;line-height:29.07px;color:#f0f0f0;transform:scaleX(0.8948);">x: 0.448</div>
<div class="t" style="left:332.20px;top:883.89px;font-size:29.07px;line-height:29.07px;color:#f0f0f0;transform:scaleX(0.9012);">y: 0.3837</div>
<div class="t" style="left:166.40px;top:930.49px;font-size:29.07px;line-height:29.07px;color:#f0f0f0;transform:scaleX(0.8923);">fL: 42.05</div>
<div class="t" style="left:166.40px;top:969.39px;font-size:29.07px;line-height:29.07px;color:#f0f0f0;transform:scaleX(0.9406);">cd/m²: 144.09</div>
<div class="b" style="left:491px;top:745px;width:1427px;height:244px;overflow:hidden">
<div class="b" style="left:0;top:0;width:1427px;height:29px;background:linear-gradient(#2e2e2e 0,#2c2c2c 50%,#1c1c1c 52%,#151515 100%)"></div>
<div class="b" style="left:0;top:0;width:10px;height:29px;background:#000"></div>
<div class="b" style="left:10px;top:28.75px;width:1417px;height:25.93px;background:#414141"></div>
<div class="b" style="left:0;top:28.75px;width:10px;height:25.93px;background:#2a2a2a"></div>
<div class="b" style="left:10px;top:55.68px;width:1417px;height:25.93px;background:#7f7f7f"></div>
<div class="b" style="left:0;top:55.68px;width:10px;height:25.93px;background:#2a2a2a"></div>
<div class="b" style="left:10px;top:82.61px;width:1417px;height:25.93px;background:#414141"></div>
<div class="b" style="left:0;top:82.61px;width:10px;height:25.93px;background:#2a2a2a"></div>
<div class="b" style="left:10px;top:109.54px;width:1417px;height:25.93px;background:#7f7f7f"></div>
<div class="b" style="left:0;top:109.54px;width:10px;height:25.93px;background:#2a2a2a"></div>
<div class="b" style="left:10px;top:136.47px;width:1417px;height:25.93px;background:#414141"></div>
<div class="b" style="left:0;top:136.47px;width:10px;height:25.93px;background:#2a2a2a"></div>
<div class="b" style="left:10px;top:163.40px;width:1417px;height:25.93px;background:#7f7f7f"></div>
<div class="b" style="left:0;top:163.40px;width:10px;height:25.93px;background:#2a2a2a"></div>
<div class="b" style="left:10px;top:190.33px;width:1417px;height:25.93px;background:#414141"></div>
<div class="b" style="left:0;top:190.33px;width:10px;height:25.93px;background:#2a2a2a"></div>
<div class="b" style="left:10px;top:217.26px;width:1417px;height:25.93px;background:#7f7f7f"></div>
<div class="b" style="left:0;top:217.26px;width:10px;height:25.93px;background:#2a2a2a"></div>
</div>
<div class="b" style="left:1204px;top:828.5px;width:70px;height:25.5px;background:#f4f4f4"></div>
<div class="b" style="left:491px;top:745px;width:1427px;height:244px;overflow:hidden">
<div class="t" style="left:94.60px;top:6.74px;font-size:16.13px;line-height:16.13px;color:#f4f4f4;transform:scaleX(0.7229);">White</div>
<div class="t" style="left:136.90px;top:6.74px;font-size:16.13px;line-height:16.13px;color:#f4f4f4;transform:scaleX(0.6695);">Gray 80</div>
<div class="t" style="left:180.80px;top:6.74px;font-size:16.13px;line-height:16.13px;color:#f4f4f4;transform:scaleX(0.6608);">Gray 65</div>
<div class="t" style="left:224.40px;top:6.74px;font-size:16.13px;line-height:16.13px;color:#f4f4f4;transform:scaleX(0.6660);">Gray 50</div>
<div class="t" style="left:268.20px;top:6.74px;font-size:16.13px;line-height:16.13px;color:#f4f4f4;transform:scaleX(0.6660);">Gray 35</div>
<div class="t" style="left:312.10px;top:6.74px;font-size:16.13px;line-height:16.13px;color:#f4f4f4;transform:scaleX(0.6653);">Black</div>
<div class="t" style="left:348.10px;top:6.74px;font-size:16.13px;line-height:16.13px;color:#f4f4f4;transform:scaleX(0.6634);">Dark Skin</div>
<div class="t" style="left:400.20px;top:6.74px;font-size:16.13px;line-height:16.13px;color:#f4f4f4;transform:scaleX(0.6650);">Light Skin</div>
<div class="t" style="left:453.00px;top:6.74px;font-size:16.13px;line-height:16.13px;color:#f4f4f4;transform:scaleX(0.6504);">Blue Sky</div>
<div class="t" style="left:500.20px;top:6.74px;font-size:16.13px;line-height:16.13px;color:#f4f4f4;transform:scaleX(0.6557);">Foliage</div>
<div class="t" style="left:541.30px;top:6.74px;font-size:16.13px;line-height:16.13px;color:#f4f4f4;transform:scaleX(0.6797);">Blue Flower</div>
<div class="t" style="left:605.40px;top:6.74px;font-size:16.13px;line-height:16.13px;color:#f4f4f4;transform:scaleX(0.6670);">Bluish Green</div>
<div class="t" style="left:673.70px;top:6.74px;font-size:16.13px;line-height:16.13px;color:#f4f4f4;transform:scaleX(0.6653);">Orange</div>
<div class="t" style="left:716.10px;top:6.74px;font-size:16.13px;line-height:16.13px;color:#f4f4f4;transform:scaleX(0.6766);">Purplish Blue</div>
<div class="t" style="left:786.80px;top:6.74px;font-size:16.13px;line-height:16.13px;color:#f4f4f4;transform:scaleX(0.6868);">Moderate Red</div>
<div class="t" style="left:863.10px;top:6.74px;font-size:16.13px;line-height:16.13px;color:#f4f4f4;transform:scaleX(0.6777);">Purple</div>
<div class="t" style="left:901.10px;top:6.74px;font-size:16.13px;line-height:16.13px;color:#f4f4f4;transform:scaleX(0.6743);">Yellow Green</div>
<div class="t" style="left:972.00px;top:6.74px;font-size:16.13px;line-height:16.13px;color:#f4f4f4;transform:scaleX(0.6736);">Orange Yellow</div>
<div class="t" style="left:1048.30px;top:6.74px;font-size:16.13px;line-height:16.13px;color:#f4f4f4;transform:scaleX(0.6725);">Blue</div>
<div class="t" style="left:1084.00px;top:6.74px;font-size:16.13px;line-height:16.13px;color:#f4f4f4;transform:scaleX(0.6711);">Green</div>
<div class="t" style="left:1120.20px;top:6.74px;font-size:16.13px;line-height:16.13px;color:#f4f4f4;transform:scaleX(0.6384);">Red</div>
<div class="t" style="left:1156.20px;top:6.74px;font-size:16.13px;line-height:16.13px;color:#f4f4f4;transform:scaleX(0.6925);">Yellow</div>
<div class="t" style="left:1198.30px;top:6.74px;font-size:16.13px;line-height:16.13px;color:#f4f4f4;transform:scaleX(0.6954);">Magenta</div>
<div class="t" style="left:1248.30px;top:6.74px;font-size:16.13px;line-height:16.13px;color:#f4f4f4;transform:scaleX(0.6371);">Cyan</div>
<div class="t" style="left:1284.30px;top:6.74px;font-size:16.13px;line-height:16.13px;color:#f4f4f4;transform:scaleX(0.6397);">100% Red</div>
<div class="t" style="left:1338.90px;top:6.74px;font-size:16.13px;line-height:16.13px;color:#f4f4f4;transform:scaleX(0.6623);">100% Green</div>
<div class="t" style="left:1405.00px;top:6.74px;font-size:16.13px;line-height:16.13px;color:#f4f4f4;transform:scaleX(0.7692);">100% Blue</div>
<div class="t" style="left:13.10px;top:35.44px;font-size:16.42px;line-height:16.42px;color:#f4f4f4;transform:scaleX(0.6985);">x: CIE31</div>
<div class="t" style="left:94.90px;top:35.44px;font-size:16.42px;line-height:16.42px;color:#f4f4f4;transform:scaleX(0.6900);">0.32</div>
<div class="t" style="left:137.20px;top:35.44px;font-size:16.42px;line-height:16.42px;color:#f4f4f4;transform:scaleX(0.6900);">0.32</div>
<div class="t" style="left:181.10px;top:35.44px;font-size:16.42px;line-height:16.42px;color:#f4f4f4;transform:scaleX(0.6900);">0.31</div>
<div class="t" style="left:224.70px;top:35.44px;font-size:16.42px;line-height:16.42px;color:#f4f4f4;transform:scaleX(0.6900);">0.31</div>
<div class="t" style="left:268.50px;top:35.44px;font-size:16.42px;line-height:16.42px;color:#f4f4f4;transform:scaleX(0.6900);">0.31</div>
<div class="t" style="left:312.40px;top:35.44px;font-size:16.42px;line-height:16.42px;color:#f4f4f4;transform:scaleX(0.6900);">0.30</div>
<div class="t" style="left:348.40px;top:35.44px;font-size:16.42px;line-height:16.42px;color:#f4f4f4;transform:scaleX(0.6900);">0.41</div>
<div class="t" style="left:400.50px;top:35.44px;font-size:16.42px;line-height:16.42px;color:#f4f4f4;transform:scaleX(0.6900);">0.38</div>
<div class="t" style="left:453.30px;top:35.44px;font-size:16.42px;line-height:16.42px;color:#f4f4f4;transform:scaleX(0.6900);">0.25</div>
<div class="t" style="left:500.50px;top:35.44px;font-size:16.42px;line-height:16.42px;color:#f4f4f4;transform:scaleX(0.6900);">0.34</div>
<div class="t" style="left:541.60px;top:35.44px;font-size:16.42px;line-height:16.42px;color:#f4f4f4;transform:scaleX(0.6900);">0.27</div>
<div class="t" style="left:605.70px;top:35.44px;font-size:16.42px;line-height:16.42px;color:#f4f4f4;transform:scaleX(0.6900);">0.26</div>
<div class="t" style="left:674.00px;top:35.44px;font-size:16.42px;line-height:16.42px;color:#f4f4f4;transform:scaleX(0.6900);">0.51</div>
<div class="t" style="left:716.40px;top:35.44px;font-size:16.42px;line-height:16.42px;color:#f4f4f4;transform:scaleX(0.6900);">0.21</div>
<div class="t" style="left:787.10px;top:35.44px;font-size:16.42px;line-height:16.42px;color:#f4f4f4;transform:scaleX(0.6900);">0.46</div>
<div class="t" style="left:863.40px;top:35.44px;font-size:16.42px;line-height:16.42px;color:#f4f4f4;transform:scaleX(0.6900);">0.27</div>
<div class="t" style="left:901.40px;top:35.44px;font-size:16.42px;line-height:16.42px;color:#f4f4f4;transform:scaleX(0.6900);">0.38</div>
<div class="t" style="left:972.30px;top:35.44px;font-size:16.42px;line-height:16.42px;color:#f4f4f4;transform:scaleX(0.6900);">0.48</div>
<div class="t" style="left:1048.60px;top:35.44px;font-size:16.42px;line-height:16.42px;color:#f4f4f4;transform:scaleX(0.6900);">0.18</div>
<div class="t" style="left:1084.30px;top:35.44px;font-size:16.42px;line-height:16.42px;color:#f4f4f4;transform:scaleX(0.6900);">0.30</div>
<div class="t" style="left:1120.50px;top:35.44px;font-size:16.42px;line-height:16.42px;color:#f4f4f4;transform:scaleX(0.6900);">0.55</div>
<div class="t" style="left:1156.50px;top:35.44px;font-size:16.42px;line-height:16.42px;color:#f4f4f4;transform:scaleX(0.6900);">0.45</div>
<div class="t" style="left:1198.60px;top:35.44px;font-size:16.42px;line-height:16.42px;color:#f4f4f4;transform:scaleX(0.6900);">0.38</div>
<div class="t" style="left:1248.60px;top:35.44px;font-size:16.42px;line-height:16.42px;color:#f4f4f4;transform:scaleX(0.6900);">0.20</div>
<div class="t" style="left:1284.60px;top:35.44px;font-size:16.42px;line-height:16.42px;color:#f4f4f4;transform:scaleX(0.6900);">0.64</div>
<div class="t" style="left:1339.20px;top:35.44px;font-size:16.42px;line-height:16.42px;color:#f4f4f4;transform:scaleX(0.6900);">0.30</div>
<div class="t" style="left:1405.30px;top:35.44px;font-size:16.42px;line-height:16.42px;color:#f4f4f4;transform:scaleX(0.6900);">0.14</div>
<div class="t" style="left:13.10px;top:62.37px;font-size:16.42px;line-height:16.42px;color:#f4f4f4;transform:scaleX(0.6985);">y: CIE31</div>
<div class="t" style="left:94.90px;top:62.37px;font-size:16.42px;line-height:16.42px;color:#f4f4f4;transform:scaleX(0.6900);">0.34</div>
<div class="t" style="left:137.20px;top:62.37px;font-size:16.42px;line-height:16.42px;color:#f4f4f4;transform:scaleX(0.6900);">0.34</div>
<div class="t" style="left:181.10px;top:62.37px;font-size:16.42px;line-height:16.42px;color:#f4f4f4;transform:scaleX(0.6900);">0.33</div>
<div class="t" style="left:224.70px;top:62.37px;font-size:16.42px;line-height:16.42px;color:#f4f4f4;transform:scaleX(0.6900);">0.33</div>
<div class="t" style="left:268.50px;top:62.37px;font-size:16.42px;line-height:16.42px;color:#f4f4f4;transform:scaleX(0.6900);">0.33</div>
<div class="t" style="left:312.40px;top:62.37px;font-size:16.42px;line-height:16.42px;color:#f4f4f4;transform:scaleX(0.6900);">0.29</div>
<div class="t" style="left:348.40px;top:62.37px;font-size:16.42px;line-height:16.42px;color:#f4f4f4;transform:scaleX(0.6900);">0.37</div>
<div class="t" style="left:400.50px;top:62.37px;font-size:16.42px;line-height:16.42px;color:#f4f4f4;transform:scaleX(0.6900);">0.36</div>
<div class="t" style="left:453.30px;top:62.37px;font-size:16.42px;line-height:16.42px;color:#f4f4f4;transform:scaleX(0.6900);">0.27</div>
<div class="t" style="left:500.50px;top:62.37px;font-size:16.42px;line-height:16.42px;color:#f4f4f4;transform:scaleX(0.6900);">0.43</div>
<div class="t" style="left:541.60px;top:62.37px;font-size:16.42px;line-height:16.42px;color:#f4f4f4;transform:scaleX(0.6900);">0.26</div>
<div class="t" style="left:605.70px;top:62.37px;font-size:16.42px;line-height:16.42px;color:#f4f4f4;transform:scaleX(0.6900);">0.36</div>
<div class="t" style="left:674.00px;top:62.37px;font-size:16.42px;line-height:16.42px;color:#f4f4f4;transform:scaleX(0.6900);">0.40</div>
<div class="t" style="left:716.40px;top:62.37px;font-size:16.42px;line-height:16.42px;color:#f4f4f4;transform:scaleX(0.6900);">0.20</div>
<div class="t" style="left:787.10px;top:62.37px;font-size:16.42px;line-height:16.42px;color:#f4f4f4;transform:scaleX(0.6900);">0.32</div>
<div class="t" style="left:863.40px;top:62.37px;font-size:16.42px;line-height:16.42px;color:#f4f4f4;transform:scaleX(0.6900);">0.21</div>
<div class="t" style="left:901.40px;top:62.37px;font-size:16.42px;line-height:16.42px;color:#f4f4f4;transform:scaleX(0.6900);">0.49</div>
<div class="t" style="left:972.30px;top:62.37px;font-size:16.42px;line-height:16.42px;color:#f4f4f4;transform:scaleX(0.6900);">0.44</div>
<div class="t" style="left:1048.60px;top:62.37px;font-size:16.42px;line-height:16.42px;color:#f4f4f4;transform:scaleX(0.6900);">0.14</div>
<div class="t" style="left:1084.30px;top:62.37px;font-size:16.42px;line-height:16.42px;color:#f4f4f4;transform:scaleX(0.6900);">0.49</div>
<div class="t" style="left:1120.50px;top:62.37px;font-size:16.42px;line-height:16.42px;color:#f4f4f4;transform:scaleX(0.6900);">0.32</div>
<div class="t" style="left:1156.50px;top:62.37px;font-size:16.42px;line-height:16.42px;color:#f4f4f4;transform:scaleX(0.6900);">0.47</div>
<div class="t" style="left:1198.60px;top:62.37px;font-size:16.42px;line-height:16.42px;color:#f4f4f4;transform:scaleX(0.6900);">0.25</div>
<div class="t" style="left:1248.60px;top:62.37px;font-size:16.42px;line-height:16.42px;color:#f4f4f4;transform:scaleX(0.6900);">0.27</div>
<div class="t" style="left:1284.60px;top:62.37px;font-size:16.42px;line-height:16.42px;color:#f4f4f4;transform:scaleX(0.6900);">0.33</div>
<div class="t" style="left:1339.20px;top:62.37px;font-size:16.42px;line-height:16.42px;color:#f4f4f4;transform:scaleX(0.6900);">0.60</div>
<div class="t" style="left:1405.30px;top:62.37px;font-size:16.42px;line-height:16.42px;color:#f4f4f4;transform:scaleX(0.6900);">0.06</div>
<div class="t" style="left:13.10px;top:89.30px;font-size:16.42px;line-height:16.42px;color:#f4f4f4;transform:scaleX(0.7507);">Y</div>
<div class="t" style="left:94.90px;top:89.30px;font-size:16.42px;line-height:16.42px;color:#f4f4f4;transform:scaleX(0.6900);">393.98</div>
<div class="t" style="left:137.20px;top:89.30px;font-size:16.42px;line-height:16.42px;color:#f4f4f4;transform:scaleX(0.6900);">319.85</div>
<div class="t" style="left:181.10px;top:89.30px;font-size:16.42px;line-height:16.42px;color:#f4f4f4;transform:scaleX(0.6900);">260.60</div>
<div class="t" style="left:224.70px;top:89.30px;font-size:16.42px;line-height:16.42px;color:#f4f4f4;transform:scaleX(0.6900);">203.40</div>
<div class="t" style="left:268.50px;top:89.30px;font-size:16.42px;line-height:16.42px;color:#f4f4f4;transform:scaleX(0.6900);">142.55</div>
<div class="t" style="left:312.40px;top:89.30px;font-size:16.42px;line-height:16.42px;color:#f4f4f4;transform:scaleX(0.6900);">0.35</div>
<div class="t" style="left:348.40px;top:89.30px;font-size:16.42px;line-height:16.42px;color:#f4f4f4;transform:scaleX(0.6900);">42.55</div>
<div class="t" style="left:400.50px;top:89.30px;font-size:16.42px;line-height:16.42px;color:#f4f4f4;transform:scaleX(0.6900);">146.42</div>
<div class="t" style="left:453.30px;top:89.30px;font-size:16.42px;line-height:16.42px;color:#f4f4f4;transform:scaleX(0.6900);">78.94</div>
<div class="t" style="left:500.50px;top:89.30px;font-size:16.42px;line-height:16.42px;color:#f4f4f4;transform:scaleX(0.6900);">54.34</div>
<div class="t" style="left:541.60px;top:89.30px;font-size:16.42px;line-height:16.42px;color:#f4f4f4;transform:scaleX(0.6900);">98.75</div>
<div class="t" style="left:605.70px;top:89.30px;font-size:16.42px;line-height:16.42px;color:#f4f4f4;transform:scaleX(0.6900);">171.60</div>
<div class="t" style="left:674.00px;top:89.30px;font-size:16.42px;line-height:16.42px;color:#f4f4f4;transform:scaleX(0.6900);">117.89</div>
<div class="t" style="left:716.40px;top:89.30px;font-size:16.42px;line-height:16.42px;color:#111;transform:scaleX(0.6900);">49.08</div>
<div class="t" style="left:787.10px;top:89.30px;font-size:16.42px;line-height:16.42px;color:#f4f4f4;transform:scaleX(0.6900);">80.02</div>
<div class="t" style="left:863.40px;top:89.30px;font-size:16.42px;line-height:16.42px;color:#f4f4f4;transform:scaleX(0.6900);">25.37</div>
<div class="t" style="left:901.40px;top:89.30px;font-size:16.42px;line-height:16.42px;color:#f4f4f4;transform:scaleX(0.6900);">176.38</div>
<div class="t" style="left:972.30px;top:89.30px;font-size:16.42px;line-height:16.42px;color:#f4f4f4;transform:scaleX(0.6900);">176.14</div>
<div class="t" style="left:1048.60px;top:89.30px;font-size:16.42px;line-height:16.42px;color:#f4f4f4;transform:scaleX(0.6900);">25.01</div>
<div class="t" style="left:1084.30px;top:89.30px;font-size:16.42px;line-height:16.42px;color:#f4f4f4;transform:scaleX(0.6900);">94.21</div>
<div class="t" style="left:1120.50px;top:89.30px;font-size:16.42px;line-height:16.42px;color:#f4f4f4;transform:scaleX(0.6900);">49.90</div>
<div class="t" style="left:1156.50px;top:89.30px;font-size:16.42px;line-height:16.42px;color:#f4f4f4;transform:scaleX(0.6900);">241.53</div>
<div class="t" style="left:1198.60px;top:89.30px;font-size:16.42px;line-height:16.42px;color:#f4f4f4;transform:scaleX(0.6900);">80.72</div>
<div class="t" style="left:1248.60px;top:89.30px;font-size:16.42px;line-height:16.42px;color:#f4f4f4;transform:scaleX(0.6900);">80.25</div>
<div class="t" style="left:1284.60px;top:89.30px;font-size:16.42px;line-height:16.42px;color:#f4f4f4;transform:scaleX(0.6900);">88.52</div>
<div class="t" style="left:1339.20px;top:89.30px;font-size:16.42px;line-height:16.42px;color:#f4f4f4;transform:scaleX(0.6900);">277.06</div>
<div class="t" style="left:1405.30px;top:89.30px;font-size:16.42px;line-height:16.42px;color:#f4f4f4;transform:scaleX(0.6900);">27.86</div>
<div class="t" style="left:13.10px;top:116.23px;font-size:16.42px;line-height:16.42px;color:#f4f4f4;transform:scaleX(0.5937);">Target x:CIE31</div>
<div class="t" style="left:94.90px;top:116.23px;font-size:16.42px;line-height:16.42px;color:#f4f4f4;transform:scaleX(0.6900);">0.31</div>
<div class="t" style="left:137.20px;top:116.23px;font-size:16.42px;line-height:16.42px;color:#f4f4f4;transform:scaleX(0.6900);">0.31</div>
<div class="t" style="left:181.10px;top:116.23px;font-size:16.42px;line-height:16.42px;color:#f4f4f4;transform:scaleX(0.6900);">0.31</div>
<div class="t" style="left:224.70px;top:116.23px;font-size:16.42px;line-height:16.42px;color:#f4f4f4;transform:scaleX(0.6900);">0.31</div>
<div class="t" style="left:268.50px;top:116.23px;font-size:16.42px;line-height:16.42px;color:#f4f4f4;transform:scaleX(0.6900);">0.31</div>
<div class="t" style="left:312.40px;top:116.23px;font-size:16.42px;line-height:16.42px;color:#f4f4f4;transform:scaleX(0.6900);">0.31</div>
<div class="t" style="left:348.40px;top:116.23px;font-size:16.42px;line-height:16.42px;color:#f4f4f4;transform:scaleX(0.6900);">0.40</div>
<div class="t" style="left:400.50px;top:116.23px;font-size:16.42px;line-height:16.42px;color:#f4f4f4;transform:scaleX(0.6900);">0.38</div>
<div class="t" style="left:453.30px;top:116.23px;font-size:16.42px;line-height:16.42px;color:#f4f4f4;transform:scaleX(0.6900);">0.25</div>
<div class="t" style="left:500.50px;top:116.23px;font-size:16.42px;line-height:16.42px;color:#f4f4f4;transform:scaleX(0.6900);">0.34</div>
<div class="t" style="left:541.60px;top:116.23px;font-size:16.42px;line-height:16.42px;color:#f4f4f4;transform:scaleX(0.6900);">0.27</div>
<div class="t" style="left:605.70px;top:116.23px;font-size:16.42px;line-height:16.42px;color:#f4f4f4;transform:scaleX(0.6900);">0.26</div>
<div class="t" style="left:674.00px;top:116.23px;font-size:16.42px;line-height:16.42px;color:#f4f4f4;transform:scaleX(0.6900);">0.51</div>
<div class="t" style="left:716.40px;top:116.23px;font-size:16.42px;line-height:16.42px;color:#f4f4f4;transform:scaleX(0.6900);">0.22</div>
<div class="t" style="left:787.10px;top:116.23px;font-size:16.42px;line-height:16.42px;color:#f4f4f4;transform:scaleX(0.6900);">0.46</div>
<div class="t" style="left:863.40px;top:116.23px;font-size:16.42px;line-height:16.42px;color:#f4f4f4;transform:scaleX(0.6900);">0.29</div>
<div class="t" style="left:901.40px;top:116.23px;font-size:16.42px;line-height:16.42px;color:#f4f4f4;transform:scaleX(0.6900);">0.38</div>
<div class="t" style="left:972.30px;top:116.23px;font-size:16.42px;line-height:16.42px;color:#f4f4f4;transform:scaleX(0.6900);">0.47</div>
<div class="t" style="left:1048.60px;top:116.23px;font-size:16.42px;line-height:16.42px;color:#f4f4f4;transform:scaleX(0.6900);">0.19</div>
<div class="t" style="left:1084.30px;top:116.23px;font-size:16.42px;line-height:16.42px;color:#f4f4f4;transform:scaleX(0.6900);">0.31</div>
<div class="t" style="left:1120.50px;top:116.23px;font-size:16.42px;line-height:16.42px;color:#f4f4f4;transform:scaleX(0.6900);">0.54</div>
<div class="t" style="left:1156.50px;top:116.23px;font-size:16.42px;line-height:16.42px;color:#f4f4f4;transform:scaleX(0.6900);">0.45</div>
<div class="t" style="left:1198.60px;top:116.23px;font-size:16.42px;line-height:16.42px;color:#f4f4f4;transform:scaleX(0.6900);">0.37</div>
<div class="t" style="left:1248.60px;top:116.23px;font-size:16.42px;line-height:16.42px;color:#f4f4f4;transform:scaleX(0.6900);">0.21</div>
<div class="t" style="left:1284.60px;top:116.23px;font-size:16.42px;line-height:16.42px;color:#f4f4f4;transform:scaleX(0.6900);">0.64</div>
<div class="t" style="left:1339.20px;top:116.23px;font-size:16.42px;line-height:16.42px;color:#f4f4f4;transform:scaleX(0.6900);">0.30</div>
<div class="t" style="left:1405.30px;top:116.23px;font-size:16.42px;line-height:16.42px;color:#f4f4f4;transform:scaleX(0.6900);">0.15</div>
<div class="t" style="left:13.10px;top:143.16px;font-size:16.42px;line-height:16.42px;color:#f4f4f4;transform:scaleX(0.5937);">Target y:CIE31</div>
<div class="t" style="left:94.90px;top:143.16px;font-size:16.42px;line-height:16.42px;color:#f4f4f4;transform:scaleX(0.6900);">0.33</div>
<div class="t" style="left:137.20px;top:143.16px;font-size:16.42px;line-height:16.42px;color:#f4f4f4;transform:scaleX(0.6900);">0.33</div>
<div class="t" style="left:181.10px;top:143.16px;font-size:16.42px;line-height:16.42px;color:#f4f4f4;transform:scaleX(0.6900);">0.33</div>
<div class="t" style="left:224.70px;top:143.16px;font-size:16.42px;line-height:16.42px;color:#f4f4f4;transform:scaleX(0.6900);">0.33</div>
<div class="t" style="left:268.50px;top:143.16px;font-size:16.42px;line-height:16.42px;color:#f4f4f4;transform:scaleX(0.6900);">0.33</div>
<div class="t" style="left:312.40px;top:143.16px;font-size:16.42px;line-height:16.42px;color:#f4f4f4;transform:scaleX(0.6900);">0.33</div>
<div class="t" style="left:348.40px;top:143.16px;font-size:16.42px;line-height:16.42px;color:#f4f4f4;transform:scaleX(0.6900);">0.36</div>
<div class="t" style="left:400.50px;top:143.16px;font-size:16.42px;line-height:16.42px;color:#f4f4f4;transform:scaleX(0.6900);">0.36</div>
<div class="t" style="left:453.30px;top:143.16px;font-size:16.42px;line-height:16.42px;color:#f4f4f4;transform:scaleX(0.6900);">0.27</div>
<div class="t" style="left:500.50px;top:143.16px;font-size:16.42px;line-height:16.42px;color:#f4f4f4;transform:scaleX(0.6900);">0.43</div>
<div class="t" style="left:541.60px;top:143.16px;font-size:16.42px;line-height:16.42px;color:#f4f4f4;transform:scaleX(0.6900);">0.25</div>
<div class="t" style="left:605.70px;top:143.16px;font-size:16.42px;line-height:16.42px;color:#f4f4f4;transform:scaleX(0.6900);">0.36</div>
<div class="t" style="left:674.00px;top:143.16px;font-size:16.42px;line-height:16.42px;color:#f4f4f4;transform:scaleX(0.6900);">0.41</div>
<div class="t" style="left:716.40px;top:143.16px;font-size:16.42px;line-height:16.42px;color:#f4f4f4;transform:scaleX(0.6900);">0.19</div>
<div class="t" style="left:787.10px;top:143.16px;font-size:16.42px;line-height:16.42px;color:#f4f4f4;transform:scaleX(0.6900);">0.31</div>
<div class="t" style="left:863.40px;top:143.16px;font-size:16.42px;line-height:16.42px;color:#f4f4f4;transform:scaleX(0.6900);">0.22</div>
<div class="t" style="left:901.40px;top:143.16px;font-size:16.42px;line-height:16.42px;color:#f4f4f4;transform:scaleX(0.6900);">0.49</div>
<div class="t" style="left:972.30px;top:143.16px;font-size:16.42px;line-height:16.42px;color:#f4f4f4;transform:scaleX(0.6900);">0.44</div>
<div class="t" style="left:1048.60px;top:143.16px;font-size:16.42px;line-height:16.42px;color:#f4f4f4;transform:scaleX(0.6900);">0.14</div>
<div class="t" style="left:1084.30px;top:143.16px;font-size:16.42px;line-height:16.42px;color:#f4f4f4;transform:scaleX(0.6900);">0.49</div>
<div class="t" style="left:1120.50px;top:143.16px;font-size:16.42px;line-height:16.42px;color:#f4f4f4;transform:scaleX(0.6900);">0.32</div>
<div class="t" style="left:1156.50px;top:143.16px;font-size:16.42px;line-height:16.42px;color:#f4f4f4;transform:scaleX(0.6900);">0.47</div>
<div class="t" style="left:1198.60px;top:143.16px;font-size:16.42px;line-height:16.42px;color:#f4f4f4;transform:scaleX(0.6900);">0.25</div>
<div class="t" style="left:1248.60px;top:143.16px;font-size:16.42px;line-height:16.42px;color:#f4f4f4;transform:scaleX(0.6900);">0.27</div>
<div class="t" style="left:1284.60px;top:143.16px;font-size:16.42px;line-height:16.42px;color:#f4f4f4;transform:scaleX(0.6900);">0.33</div>
<div class="t" style="left:1339.20px;top:143.16px;font-size:16.42px;line-height:16.42px;color:#f4f4f4;transform:scaleX(0.6900);">0.60</div>
<div class="t" style="left:1405.30px;top:143.16px;font-size:16.42px;line-height:16.42px;color:#f4f4f4;transform:scaleX(0.6900);">0.06</div>
<div class="t" style="left:13.10px;top:170.09px;font-size:16.42px;line-height:16.42px;color:#f4f4f4;transform:scaleX(0.7066);">Target Y</div>
<div class="t" style="left:94.90px;top:170.09px;font-size:16.42px;line-height:16.42px;color:#f4f4f4;transform:scaleX(0.6900);">393.98</div>
<div class="t" style="left:137.20px;top:170.09px;font-size:16.42px;line-height:16.42px;color:#f4f4f4;transform:scaleX(0.6900);">311.76</div>
<div class="t" style="left:181.10px;top:170.09px;font-size:16.42px;line-height:16.42px;color:#f4f4f4;transform:scaleX(0.6900);">251.20</div>
<div class="t" style="left:224.70px;top:170.09px;font-size:16.42px;line-height:16.42px;color:#f4f4f4;transform:scaleX(0.6900);">193.45</div>
<div class="t" style="left:268.50px;top:170.09px;font-size:16.42px;line-height:16.42px;color:#f4f4f4;transform:scaleX(0.6900);">134.71</div>
<div class="t" style="left:312.40px;top:170.09px;font-size:16.42px;line-height:16.42px;color:#f4f4f4;transform:scaleX(0.6900);">0.00</div>
<div class="t" style="left:348.40px;top:170.09px;font-size:16.42px;line-height:16.42px;color:#f4f4f4;transform:scaleX(0.6900);">39.69</div>
<div class="t" style="left:400.50px;top:170.09px;font-size:16.42px;line-height:16.42px;color:#f4f4f4;transform:scaleX(0.6900);">137.48</div>
<div class="t" style="left:453.30px;top:170.09px;font-size:16.42px;line-height:16.42px;color:#f4f4f4;transform:scaleX(0.6900);">73.67</div>
<div class="t" style="left:500.50px;top:170.09px;font-size:16.42px;line-height:16.42px;color:#f4f4f4;transform:scaleX(0.6900);">51.35</div>
<div class="t" style="left:541.60px;top:170.09px;font-size:16.42px;line-height:16.42px;color:#f4f4f4;transform:scaleX(0.6900);">91.87</div>
<div class="t" style="left:605.70px;top:170.09px;font-size:16.42px;line-height:16.42px;color:#f4f4f4;transform:scaleX(0.6900);">164.97</div>
<div class="t" style="left:674.00px;top:170.09px;font-size:16.42px;line-height:16.42px;color:#f4f4f4;transform:scaleX(0.6900);">111.68</div>
<div class="t" style="left:716.40px;top:170.09px;font-size:16.42px;line-height:16.42px;color:#f4f4f4;transform:scaleX(0.6900);">46.31</div>
<div class="t" style="left:787.10px;top:170.09px;font-size:16.42px;line-height:16.42px;color:#f4f4f4;transform:scaleX(0.6900);">73.58</div>
<div class="t" style="left:863.40px;top:170.09px;font-size:16.42px;line-height:16.42px;color:#f4f4f4;transform:scaleX(0.6900);">26.30</div>
<div class="t" style="left:901.40px;top:170.09px;font-size:16.42px;line-height:16.42px;color:#f4f4f4;transform:scaleX(0.6900);">168.45</div>
<div class="t" style="left:972.30px;top:170.09px;font-size:16.42px;line-height:16.42px;color:#f4f4f4;transform:scaleX(0.6900);">167.49</div>
<div class="t" style="left:1048.60px;top:170.09px;font-size:16.42px;line-height:16.42px;color:#f4f4f4;transform:scaleX(0.6900);">24.60</div>
<div class="t" style="left:1084.30px;top:170.09px;font-size:16.42px;line-height:16.42px;color:#f4f4f4;transform:scaleX(0.6900);">90.51</div>
<div class="t" style="left:1120.50px;top:170.09px;font-size:16.42px;line-height:16.42px;color:#f4f4f4;transform:scaleX(0.6900);">45.95</div>
<div class="t" style="left:1156.50px;top:170.09px;font-size:16.42px;line-height:16.42px;color:#f4f4f4;transform:scaleX(0.6900);">232.30</div>
<div class="t" style="left:1198.60px;top:170.09px;font-size:16.42px;line-height:16.42px;color:#f4f4f4;transform:scaleX(0.6900);">74.17</div>
<div class="t" style="left:1248.60px;top:170.09px;font-size:16.42px;line-height:16.42px;color:#f4f4f4;transform:scaleX(0.6900);">76.50</div>
<div class="t" style="left:1284.60px;top:170.09px;font-size:16.42px;line-height:16.42px;color:#f4f4f4;transform:scaleX(0.6900);">83.78</div>
<div class="t" style="left:1339.20px;top:170.09px;font-size:16.42px;line-height:16.42px;color:#f4f4f4;transform:scaleX(0.6900);">281.76</div>
<div class="t" style="left:1405.30px;top:170.09px;font-size:16.42px;line-height:16.42px;color:#f4f4f4;transform:scaleX(0.6900);">28.44</div>
<div class="t" style="left:13.10px;top:197.02px;font-size:16.42px;line-height:16.42px;color:#f4f4f4;transform:scaleX(0.6897);">ΔE 2000</div>
<div class="t" style="left:94.90px;top:197.02px;font-size:16.42px;line-height:16.42px;color:#f4f4f4;transform:scaleX(0.6900);">5.46</div>
<div class="t" style="left:137.20px;top:197.02px;font-size:16.42px;line-height:16.42px;color:#f4f4f4;transform:scaleX(0.6900);">4.05</div>
<div class="t" style="left:181.10px;top:197.02px;font-size:16.42px;line-height:16.42px;color:#f4f4f4;transform:scaleX(0.6900);">3.14</div>
<div class="t" style="left:224.70px;top:197.02px;font-size:16.42px;line-height:16.42px;color:#f4f4f4;transform:scaleX(0.6900);">2.37</div>
<div class="t" style="left:268.50px;top:197.02px;font-size:16.42px;line-height:16.42px;color:#f4f4f4;transform:scaleX(0.6900);">1.68</div>
<div class="t" style="left:312.40px;top:197.02px;font-size:16.42px;line-height:16.42px;color:#f4f4f4;transform:scaleX(0.6900);">0.81</div>
<div class="t" style="left:348.40px;top:197.02px;font-size:16.42px;line-height:16.42px;color:#f4f4f4;transform:scaleX(0.6900);">1.65</div>
<div class="t" style="left:400.50px;top:197.02px;font-size:16.42px;line-height:16.42px;color:#f4f4f4;transform:scaleX(0.6900);">1.47</div>
<div class="t" style="left:453.30px;top:197.02px;font-size:16.42px;line-height:16.42px;color:#f4f4f4;transform:scaleX(0.6900);">3.14</div>
<div class="t" style="left:500.50px;top:197.02px;font-size:16.42px;line-height:16.42px;color:#f4f4f4;transform:scaleX(0.6900);">1.20</div>
<div class="t" style="left:541.60px;top:197.02px;font-size:16.42px;line-height:16.42px;color:#f4f4f4;transform:scaleX(0.6900);">2.22</div>
<div class="t" style="left:605.70px;top:197.02px;font-size:16.42px;line-height:16.42px;color:#f4f4f4;transform:scaleX(0.6900);">1.28</div>
<div class="t" style="left:674.00px;top:197.02px;font-size:16.42px;line-height:16.42px;color:#f4f4f4;transform:scaleX(0.6900);">1.41</div>
<div class="t" style="left:716.40px;top:197.02px;font-size:16.42px;line-height:16.42px;color:#f4f4f4;transform:scaleX(0.6900);">2.90</div>
<div class="t" style="left:787.10px;top:197.02px;font-size:16.42px;line-height:16.42px;color:#f4f4f4;transform:scaleX(0.6900);">2.02</div>
<div class="t" style="left:863.40px;top:197.02px;font-size:16.42px;line-height:16.42px;color:#f4f4f4;transform:scaleX(0.6900);">3.00</div>
<div class="t" style="left:901.40px;top:197.02px;font-size:16.42px;line-height:16.42px;color:#f4f4f4;transform:scaleX(0.6900);">1.21</div>
<div class="t" style="left:972.30px;top:197.02px;font-size:16.42px;line-height:16.42px;color:#f4f4f4;transform:scaleX(0.6900);">1.27</div>
<div class="t" style="left:1048.60px;top:197.02px;font-size:16.42px;line-height:16.42px;color:#f4f4f4;transform:scaleX(0.6900);">2.62</div>
<div class="t" style="left:1084.30px;top:197.02px;font-size:16.42px;line-height:16.42px;color:#f4f4f4;transform:scaleX(0.6900);">1.03</div>
<div class="t" style="left:1120.50px;top:197.02px;font-size:16.42px;line-height:16.42px;color:#f4f4f4;transform:scaleX(0.6900);">2.09</div>
<div class="t" style="left:1156.50px;top:197.02px;font-size:16.42px;line-height:16.42px;color:#f4f4f4;transform:scaleX(0.6900);">1.07</div>
<div class="t" style="left:1198.60px;top:197.02px;font-size:16.42px;line-height:16.42px;color:#f4f4f4;transform:scaleX(0.6900);">2.02</div>
<div class="t" style="left:1248.60px;top:197.02px;font-size:16.42px;line-height:16.42px;color:#f4f4f4;transform:scaleX(0.6900);">2.77</div>
<div class="t" style="left:1284.60px;top:197.02px;font-size:16.42px;line-height:16.42px;color:#f4f4f4;transform:scaleX(0.6900);">2.14</div>
<div class="t" style="left:1339.20px;top:197.02px;font-size:16.42px;line-height:16.42px;color:#f4f4f4;transform:scaleX(0.6900);">0.92</div>
<div class="t" style="left:1405.30px;top:197.02px;font-size:16.42px;line-height:16.42px;color:#f4f4f4;transform:scaleX(0.6900);">4.22</div>
<div class="t" style="left:13.10px;top:223.95px;font-size:16.42px;line-height:16.42px;color:#f4f4f4;transform:scaleX(0.6526);">dEITP</div>
<div class="t" style="left:94.90px;top:223.95px;font-size:16.42px;line-height:16.42px;color:#f4f4f4;transform:scaleX(0.6900);">4.13</div>
<div class="t" style="left:137.20px;top:223.95px;font-size:16.42px;line-height:16.42px;color:#f4f4f4;transform:scaleX(0.6900);">3.45</div>
<div class="t" style="left:181.10px;top:223.95px;font-size:16.42px;line-height:16.42px;color:#f4f4f4;transform:scaleX(0.6900);">3.49</div>
<div class="t" style="left:224.70px;top:223.95px;font-size:16.42px;line-height:16.42px;color:#f4f4f4;transform:scaleX(0.6900);">4.01</div>
<div class="t" style="left:268.50px;top:223.95px;font-size:16.42px;line-height:16.42px;color:#f4f4f4;transform:scaleX(0.6900);">4.22</div>
<div class="t" style="left:312.40px;top:223.95px;font-size:16.42px;line-height:16.42px;color:#f4f4f4;transform:scaleX(0.6900);">74.76</div>
<div class="t" style="left:348.40px;top:223.95px;font-size:16.42px;line-height:16.42px;color:#f4f4f4;transform:scaleX(0.6900);">6.41</div>
<div class="t" style="left:400.50px;top:223.95px;font-size:16.42px;line-height:16.42px;color:#f4f4f4;transform:scaleX(0.6900);">4.71</div>
<div class="t" style="left:453.30px;top:223.95px;font-size:16.42px;line-height:16.42px;color:#f4f4f4;transform:scaleX(0.6900);">5.91</div>
<div class="t" style="left:500.50px;top:223.95px;font-size:16.42px;line-height:16.42px;color:#f4f4f4;transform:scaleX(0.6900);">4.24</div>
<div class="t" style="left:541.60px;top:223.95px;font-size:16.42px;line-height:16.42px;color:#f4f4f4;transform:scaleX(0.6900);">5.86</div>
<div class="t" style="left:605.70px;top:223.95px;font-size:16.42px;line-height:16.42px;color:#f4f4f4;transform:scaleX(0.6900);">3.65</div>
<div class="t" style="left:674.00px;top:223.95px;font-size:16.42px;line-height:16.42px;color:#f4f4f4;transform:scaleX(0.6900);">5.21</div>
<div class="t" style="left:716.40px;top:223.95px;font-size:16.42px;line-height:16.42px;color:#f4f4f4;transform:scaleX(0.6900);">7.82</div>
<div class="t" style="left:787.10px;top:223.95px;font-size:16.42px;line-height:16.42px;color:#f4f4f4;transform:scaleX(0.6900);">6.21</div>
<div class="t" style="left:863.40px;top:223.95px;font-size:16.42px;line-height:16.42px;color:#f4f4f4;transform:scaleX(0.6900);">13.80</div>
<div class="t" style="left:901.40px;top:223.95px;font-size:16.42px;line-height:16.42px;color:#f4f4f4;transform:scaleX(0.6900);">3.95</div>
<div class="t" style="left:972.30px;top:223.95px;font-size:16.42px;line-height:16.42px;color:#f4f4f4;transform:scaleX(0.6900);">4.23</div>
<div class="t" style="left:1048.60px;top:223.95px;font-size:16.42px;line-height:16.42px;color:#f4f4f4;transform:scaleX(0.6900);">12.16</div>
<div class="t" style="left:1084.30px;top:223.95px;font-size:16.42px;line-height:16.42px;color:#f4f4f4;transform:scaleX(0.6900);">3.26</div>
<div class="t" style="left:1120.50px;top:223.95px;font-size:16.42px;line-height:16.42px;color:#f4f4f4;transform:scaleX(0.6900);">8.63</div>
<div class="t" style="left:1156.50px;top:223.95px;font-size:16.42px;line-height:16.42px;color:#f4f4f4;transform:scaleX(0.6900);">3.29</div>
<div class="t" style="left:1198.60px;top:223.95px;font-size:16.42px;line-height:16.42px;color:#f4f4f4;transform:scaleX(0.6900);">6.32</div>
<div class="t" style="left:1248.60px;top:223.95px;font-size:16.42px;line-height:16.42px;color:#f4f4f4;transform:scaleX(0.6900);">7.07</div>
<div class="t" style="left:1284.60px;top:223.95px;font-size:16.42px;line-height:16.42px;color:#f4f4f4;transform:scaleX(0.6900);">6.93</div>
<div class="t" style="left:1339.20px;top:223.95px;font-size:16.42px;line-height:16.42px;color:#f4f4f4;transform:scaleX(0.6900);">3.86</div>
<div class="t" style="left:1405.30px;top:223.95px;font-size:16.42px;line-height:16.42px;color:#f4f4f4;transform:scaleX(0.6900);">25.05</div>
</div>
<div class="b" style="left:501px;top:990.75px;width:1417px;height:14.75px;background:#5e5e5e"></div>
<div class="b" style="left:502px;top:991.5px;width:10px;height:13px;border-radius:2px;background:#8a8a8a"></div>
<svg style="left:505px;top:994px" width="5" height="8"><path d="M4.5 0V8L0.5 4z" fill="#3a3a3a"/></svg>
<div class="b" style="left:515px;top:992px;width:839px;height:12.5px;border-radius:6px;background:#444"></div>
<div class="b" style="left:1907.5px;top:991.7px;width:10.5px;height:13px;border-radius:2px;background:#7a7a7a"></div>
<svg style="left:1910px;top:994px" width="5" height="8"><path d="M0.5 0V8L4.5 4z" fill="#3a3a3a"/></svg>
<div class="b" style="left:150px;top:1006px;width:1770px;height:5px;background:#2c2c2c"></div>
<div class="b" style="left:151.00px;top:1011.25px;width:37px;height:36.5px;border-radius:4px 4px 0 0;background:linear-gradient(#a2a2a2,#8e8e8e 30%,#7c7c7c 70%,#6a6a6a)"></div>
<div class="b" style="left:188.0px;top:1011px;width:2px;height:37px;background:#353535"></div>
<div class="b" style="left:155.00px;top:1015.6px;width:29.7px;height:17.5px;border-radius:2.5px;background:#ffffff;box-shadow:0 0 1px 1px rgba(255,255,255,.25)"></div>
<div class="t" style="left:159.25px;top:1036.99px;font-size:8.87px;line-height:8.87px;color:#1a1a1a;font-weight:bold;transform:scaleX(0.8500);">White</div>
<div class="b" style="left:189.95px;top:1011.25px;width:37px;height:36.5px;border-radius:4px 4px 0 0;background:linear-gradient(#a2a2a2,#8e8e8e 30%,#7c7c7c 70%,#6a6a6a)"></div>
<div class="b" style="left:226.95px;top:1011px;width:2px;height:37px;background:#353535"></div>
<div class="b" style="left:193.95px;top:1015.6px;width:29.7px;height:17.5px;border-radius:2.5px;background:#e6e6e6;box-shadow:0 0 1px 1px rgba(255,255,255,.25)"></div>
<div class="t" style="left:194.62px;top:1036.99px;font-size:8.87px;line-height:8.87px;color:#1a1a1a;font-weight:bold;transform:scaleX(0.8500);">Gray 80</div>
<div class="b" style="left:228.90px;top:1011.25px;width:37px;height:36.5px;border-radius:4px 4px 0 0;background:linear-gradient(#a2a2a2,#8e8e8e 30%,#7c7c7c 70%,#6a6a6a)"></div>
<div class="b" style="left:265.9px;top:1011px;width:2px;height:37px;background:#353535"></div>
<div class="b" style="left:232.90px;top:1015.6px;width:29.7px;height:17.5px;border-radius:2.5px;background:#d2d2d2;box-shadow:0 0 1px 1px rgba(255,255,255,.25)"></div>
<div class="t" style="left:233.57px;top:1036.99px;font-size:8.87px;line-height:8.87px;color:#1a1a1a;font-weight:bold;transform:scaleX(0.8500);">Gray 65</div>
<div class="b" style="left:267.85px;top:1011.25px;width:37px;height:36.5px;border-radius:4px 4px 0 0;background:linear-gradient(#a2a2a2,#8e8e8e 30%,#7c7c7c 70%,#6a6a6a)"></div>
<div class="b" style="left:304.85px;top:1011px;width:2px;height:37px;background:#353535"></div>
<div class="b" style="left:271.85px;top:1015.6px;width:29.7px;height:17.5px;border-radius:2.5px;background:#bcbcbc;box-shadow:0 0 1px 1px rgba(255,255,255,.25)"></div>
<div class="t" style="left:272.52px;top:1036.99px;font-size:8.87px;line-height:8.87px;color:#1a1a1a;font-weight:bold;transform:scaleX(0.8500);">Gray 50</div>
<div class="b" style="left:306.80px;top:1011.25px;width:37px;height:36.5px;border-radius:4px 4px 0 0;background:linear-gradient(#a2a2a2,#8e8e8e 30%,#7c7c7c 70%,#6a6a6a)"></div>
<div class="b" style="left:343.8px;top:1011px;width:2px;height:37px;background:#353535"></div>
<div class="b" style="left:310.80px;top:1015.6px;width:29.7px;height:17.5px;border-radius:2.5px;background:#a2a2a2;box-shadow:0 0 1px 1px rgba(255,255,255,.25)"></div>
<div class="t" style="left:311.47px;top:1036.99px;font-size:8.87px;line-height:8.87px;color:#1a1a1a;font-weight:bold;transform:scaleX(0.8500);">Gray 35</div>
<div class="b" style="left:345.75px;top:1011.25px;width:37px;height:36.5px;border-radius:4px 4px 0 0;background:linear-gradient(#a2a2a2,#8e8e8e 30%,#7c7c7c 70%,#6a6a6a)"></div>
<div class="b" style="left:382.75px;top:1011px;width:2px;height:37px;background:#353535"></div>
<div class="b" style="left:349.75px;top:1015.6px;width:29.7px;height:17.5px;border-radius:2.5px;background:#000000;box-shadow:0 0 1px 1px rgba(255,255,255,.25)"></div>
<div class="t" style="left:354.19px;top:1036.99px;font-size:8.87px;line-height:8.87px;color:#1a1a1a;font-weight:bold;transform:scaleX(0.8500);">Black</div>
<div class="b" style="left:384.70px;top:1011.25px;width:37px;height:36.5px;border-radius:4px 4px 0 0;background:linear-gradient(#a2a2a2,#8e8e8e 30%,#7c7c7c 70%,#6a6a6a)"></div>
<div class="b" style="left:421.7px;top:1011px;width:2px;height:37px;background:#353535"></div>
<div class="b" style="left:388.70px;top:1015.6px;width:29.7px;height:17.5px;border-radius:2.5px;background:#735244;box-shadow:0 0 1px 1px rgba(255,255,255,.25)"></div>
<div class="t" style="left:385.81px;top:1036.99px;font-size:8.87px;line-height:8.87px;color:#1a1a1a;font-weight:bold;transform:scaleX(0.8500);">Dark Skin</div>
<div class="b" style="left:423.65px;top:1011.25px;width:37px;height:36.5px;border-radius:4px 4px 0 0;background:linear-gradient(#a2a2a2,#8e8e8e 30%,#7c7c7c 70%,#6a6a6a)"></div>
<div class="b" style="left:460.65px;top:1011px;width:2px;height:37px;background:#353535"></div>
<div class="b" style="left:427.65px;top:1015.6px;width:29.7px;height:17.5px;border-radius:2.5px;background:#c29682;box-shadow:0 0 1px 1px rgba(255,255,255,.25)"></div>
<div class="t" style="left:423.93px;top:1036.99px;font-size:8.87px;line-height:8.87px;color:#1a1a1a;font-weight:bold;transform:scaleX(0.8500);">Light Skin</div>
<div class="b" style="left:462.60px;top:1011.25px;width:37px;height:36.5px;border-radius:4px 4px 0 0;background:linear-gradient(#a2a2a2,#8e8e8e 30%,#7c7c7c 70%,#6a6a6a)"></div>
<div class="b" style="left:499.6px;top:1011px;width:2px;height:37px;background:#353535"></div>
<div class="b" style="left:466.60px;top:1015.6px;width:29.7px;height:17.5px;border-radius:2.5px;background:#627a9d;box-shadow:0 0 1px 1px rgba(255,255,255,.25)"></div>
<div class="t" style="left:465.18px;top:1036.99px;font-size:8.87px;line-height:8.87px;color:#1a1a1a;font-weight:bold;transform:scaleX(0.8500);">Blue Sky</div>
<div class="b" style="left:501.55px;top:1011.25px;width:37px;height:36.5px;border-radius:4px 4px 0 0;background:linear-gradient(#a2a2a2,#8e8e8e 30%,#7c7c7c 70%,#6a6a6a)"></div>
<div class="b" style="left:538.55px;top:1011px;width:2px;height:37px;background:#353535"></div>
<div class="b" style="left:505.55px;top:1015.6px;width:29.7px;height:17.5px;border-radius:2.5px;background:#576c43;box-shadow:0 0 1px 1px rgba(255,255,255,.25)"></div>
<div class="t" style="left:506.86px;top:1036.99px;font-size:8.87px;line-height:8.87px;color:#1a1a1a;font-weight:bold;transform:scaleX(0.8500);">Foliage</div>
<div class="b" style="left:540.50px;top:1011.25px;width:37px;height:36.5px;border-radius:4px 4px 0 0;background:linear-gradient(#a2a2a2,#8e8e8e 30%,#7c7c7c 70%,#6a6a6a)"></div>
<div class="b" style="left:577.5px;top:1011px;width:2px;height:37px;background:#353535"></div>
<div class="b" style="left:544.50px;top:1015.6px;width:29.7px;height:8.5px;border-radius:2.5px;background:#8580b1;box-shadow:0 0 1px 1px rgba(255,255,255,.25)"></div>
<div class="t" style="left:546.85px;top:1028.09px;font-size:8.87px;line-height:8.87px;color:#1a1a1a;font-weight:bold;transform:scaleX(0.8500);">Blue</div>
<div class="t" style="left:546.85px;top:1036.99px;font-size:8.87px;line-height:8.87px;color:#1a1a1a;font-weight:bold;transform:scaleX(0.8500);">Flower</div>
<div class="b" style="left:579.45px;top:1011.25px;width:37px;height:36.5px;border-radius:4px 4px 0 0;background:linear-gradient(#a2a2a2,#8e8e8e 30%,#7c7c7c 70%,#6a6a6a)"></div>
<div class="b" style="left:616.45px;top:1011px;width:2px;height:37px;background:#353535"></div>
<div class="b" style="left:583.45px;top:1015.6px;width:29.7px;height:8.5px;border-radius:2.5px;background:#67bdaa;box-shadow:0 0 1px 1px rgba(255,255,255,.25)"></div>
<div class="t" style="left:586.44px;top:1028.09px;font-size:8.87px;line-height:8.87px;color:#1a1a1a;font-weight:bold;transform:scaleX(0.8500);">Bluish</div>
<div class="t" style="left:586.44px;top:1036.99px;font-size:8.87px;line-height:8.87px;color:#1a1a1a;font-weight:bold;transform:scaleX(0.8500);">Green</div>
<div class="b" style="left:618.40px;top:1011.25px;width:37px;height:36.5px;border-radius:4px 4px 0 0;background:linear-gradient(#a2a2a2,#8e8e8e 30%,#7c7c7c 70%,#6a6a6a)"></div>
<div class="b" style="left:655.4px;top:1011px;width:2px;height:37px;background:#353535"></div>
<div class="b" style="left:622.40px;top:1015.6px;width:29.7px;height:17.5px;border-radius:2.5px;background:#d67e2c;box-shadow:0 0 1px 1px rgba(255,255,255,.25)"></div>
<div class="t" style="left:623.71px;top:1036.99px;font-size:8.87px;line-height:8.87px;color:#1a1a1a;font-weight:bold;transform:scaleX(0.8500);">Orange</div>
<div class="b" style="left:657.35px;top:1011.25px;width:37px;height:36.5px;border-radius:4px 4px 0 0;background:linear-gradient(#a2a2a2,#8e8e8e 30%,#7c7c7c 70%,#6a6a6a)"></div>
<div class="b" style="left:694.35px;top:1011px;width:2px;height:37px;background:#353535"></div>
<div class="b" style="left:661.35px;top:1015.6px;width:29.7px;height:8.5px;border-radius:2.5px;background:#505ba6;box-shadow:0 0 1px 1px rgba(255,255,255,.25)"></div>
<div class="t" style="left:660.78px;top:1028.09px;font-size:8.87px;line-height:8.87px;color:#1a1a1a;font-weight:bold;transform:scaleX(0.8500);">Purplish</div>
<div class="t" style="left:660.78px;top:1036.99px;font-size:8.87px;line-height:8.87px;color:#1a1a1a;font-weight:bold;transform:scaleX(0.8500);">Blue</div>
<div class="b" style="left:696.30px;top:1011.25px;width:37px;height:36.5px;border-radius:4px 4px 0 0;background:linear-gradient(#a2a2a2,#8e8e8e 30%,#7c7c7c 70%,#6a6a6a)"></div>
<div class="b" style="left:733.3px;top:1011px;width:2px;height:37px;background:#353535"></div>
<div class="b" style="left:700.30px;top:1015.6px;width:29.7px;height:8.5px;border-radius:2.5px;background:#c15a63;box-shadow:0 0 1px 1px rgba(255,255,255,.25)"></div>
<div class="t" style="left:698.05px;top:1028.09px;font-size:8.87px;line-height:8.87px;color:#1a1a1a;font-weight:bold;transform:scaleX(0.8500);">Moderate</div>
<div class="t" style="left:698.05px;top:1036.99px;font-size:8.87px;line-height:8.87px;color:#1a1a1a;font-weight:bold;transform:scaleX(0.8500);">Red</div>
<div class="b" style="left:735.25px;top:1011.25px;width:37px;height:36.5px;border-radius:4px 4px 0 0;background:linear-gradient(#a2a2a2,#8e8e8e 30%,#7c7c7c 70%,#6a6a6a)"></div>
<div class="b" style="left:772.25px;top:1011px;width:2px;height:37px;background:#353535"></div>
<div class="b" style="left:739.25px;top:1015.6px;width:29.7px;height:17.5px;border-radius:2.5px;background:#5e3c6c;box-shadow:0 0 1px 1px rgba(255,255,255,.25)"></div>
<div class="t" style="left:742.03px;top:1036.99px;font-size:8.87px;line-height:8.87px;color:#1a1a1a;font-weight:bold;transform:scaleX(0.8500);">Purple</div>
<div class="b" style="left:774.20px;top:1011.25px;width:37px;height:36.5px;border-radius:4px 4px 0 0;background:linear-gradient(#a2a2a2,#8e8e8e 30%,#7c7c7c 70%,#6a6a6a)"></div>
<div class="b" style="left:811.2px;top:1011px;width:2px;height:37px;background:#353535"></div>
<div class="b" style="left:778.20px;top:1015.6px;width:29.7px;height:8.5px;border-radius:2.5px;background:#9dbc40;box-shadow:0 0 1px 1px rgba(255,255,255,.25)"></div>
<div class="t" style="left:780.96px;top:1028.09px;font-size:8.87px;line-height:8.87px;color:#1a1a1a;font-weight:bold;transform:scaleX(0.8500);">Yellow</div>
<div class="t" style="left:780.96px;top:1036.99px;font-size:8.87px;line-height:8.87px;color:#1a1a1a;font-weight:bold;transform:scaleX(0.8500);">Green</div>
<div class="b" style="left:813.15px;top:1011.25px;width:37px;height:36.5px;border-radius:4px 4px 0 0;background:linear-gradient(#a2a2a2,#8e8e8e 30%,#7c7c7c 70%,#6a6a6a)"></div>
<div class="b" style="left:850.15px;top:1011px;width:2px;height:37px;background:#353535"></div>
<div class="b" style="left:817.15px;top:1015.6px;width:29.7px;height:8.5px;border-radius:2.5px;background:#e0a32e;box-shadow:0 0 1px 1px rgba(255,255,255,.25)"></div>
<div class="t" style="left:818.46px;top:1028.09px;font-size:8.87px;line-height:8.87px;color:#1a1a1a;font-weight:bold;transform:scaleX(0.8500);">Orange</div>
<div class="t" style="left:818.46px;top:1036.99px;font-size:8.87px;line-height:8.87px;color:#1a1a1a;font-weight:bold;transform:scaleX(0.8500);">Yellow</div>
<div class="b" style="left:852.10px;top:1011.25px;width:37px;height:36.5px;border-radius:4px 4px 0 0;background:linear-gradient(#a2a2a2,#8e8e8e 30%,#7c7c7c 70%,#6a6a6a)"></div>
<div class="b" style="left:889.1px;top:1011px;width:2px;height:37px;background:#353535"></div>
<div class="b" style="left:856.10px;top:1015.6px;width:29.7px;height:17.5px;border-radius:2.5px;background:#383d96;box-shadow:0 0 1px 1px rgba(255,255,255,.25)"></div>
<div class="t" style="left:862.44px;top:1036.99px;font-size:8.87px;line-height:8.87px;color:#1a1a1a;font-weight:bold;transform:scaleX(0.8500);">Blue</div>
<div class="b" style="left:891.05px;top:1011.25px;width:37px;height:36.5px;border-radius:4px 4px 0 0;background:linear-gradient(#a2a2a2,#8e8e8e 30%,#7c7c7c 70%,#6a6a6a)"></div>
<div class="b" style="left:928.05px;top:1011px;width:2px;height:37px;background:#353535"></div>
<div class="b" style="left:895.05px;top:1015.6px;width:29.7px;height:17.5px;border-radius:2.5px;background:#469449;box-shadow:0 0 1px 1px rgba(255,255,255,.25)"></div>
<div class="t" style="left:898.66px;top:1036.99px;font-size:8.87px;line-height:8.87px;color:#1a1a1a;font-weight:bold;transform:scaleX(0.8500);">Green</div>
<div class="b" style="left:930.00px;top:1011.25px;width:37px;height:36.5px;border-radius:4px 4px 0 0;background:linear-gradient(#a2a2a2,#8e8e8e 30%,#7c7c7c 70%,#6a6a6a)"></div>
<div class="b" style="left:967.0px;top:1011px;width:2px;height:37px;background:#353535"></div>
<div class="b" style="left:934.00px;top:1015.6px;width:29.7px;height:17.5px;border-radius:2.5px;background:#af363c;box-shadow:0 0 1px 1px rgba(255,255,255,.25)"></div>
<div class="t" style="left:941.38px;top:1036.99px;font-size:8.87px;line-height:8.87px;color:#1a1a1a;font-weight:bold;transform:scaleX(0.8500);">Red</div>
<div class="b" style="left:968.95px;top:1011.25px;width:37px;height:36.5px;border-radius:4px 4px 0 0;background:linear-gradient(#a2a2a2,#8e8e8e 30%,#7c7c7c 70%,#6a6a6a)"></div>
<div class="b" style="left:1005.95px;top:1011px;width:2px;height:37px;background:#353535"></div>
<div class="b" style="left:972.95px;top:1015.6px;width:29.7px;height:17.5px;border-radius:2.5px;background:#e7c71f;box-shadow:0 0 1px 1px rgba(255,255,255,.25)"></div>
<div class="t" style="left:975.71px;top:1036.99px;font-size:8.87px;line-height:8.87px;color:#1a1a1a;font-weight:bold;transform:scaleX(0.8500);">Yellow</div>
<div class="b" style="left:1007.90px;top:1011.25px;width:37px;height:36.5px;border-radius:4px 4px 0 0;background:linear-gradient(#a2a2a2,#8e8e8e 30%,#7c7c7c 70%,#6a6a6a)"></div>
<div class="b" style="left:1044.9px;top:1011px;width:2px;height:37px;background:#353535"></div>
<div class="b" style="left:1011.90px;top:1015.6px;width:29.7px;height:17.5px;border-radius:2.5px;background:#bb5695;box-shadow:0 0 1px 1px rgba(255,255,255,.25)"></div>
<div class="t" style="left:1011.08px;top:1036.99px;font-size:8.87px;line-height:8.87px;color:#1a1a1a;font-weight:bold;transform:scaleX(0.8500);">Magenta</div>
<div class="b" style="left:1046.85px;top:1011.25px;width:37px;height:36.5px;border-radius:4px 4px 0 0;background:linear-gradient(#a2a2a2,#8e8e8e 30%,#7c7c7c 70%,#6a6a6a)"></div>
<div class="b" style="left:1083.85px;top:1011px;width:2px;height:37px;background:#353535"></div>
<div class="b" style="left:1050.85px;top:1015.6px;width:29.7px;height:17.5px;border-radius:2.5px;background:#0885a1;box-shadow:0 0 1px 1px rgba(255,255,255,.25)"></div>
<div class="t" style="left:1056.14px;top:1036.99px;font-size:8.87px;line-height:8.87px;color:#1a1a1a;font-weight:bold;transform:scaleX(0.8500);">Cyan</div>
<div class="b" style="left:1085.80px;top:1011.25px;width:37px;height:36.5px;border-radius:4px 4px 0 0;background:linear-gradient(#a2a2a2,#8e8e8e 30%,#7c7c7c 70%,#6a6a6a)"></div>
<div class="b" style="left:1122.8px;top:1011px;width:2px;height:37px;background:#353535"></div>
<div class="b" style="left:1089.80px;top:1015.6px;width:29.7px;height:17.5px;border-radius:2.5px;background:#ff0000;box-shadow:0 0 1px 1px rgba(255,255,255,.25)"></div>
<div class="t" style="left:1086.50px;top:1036.99px;font-size:8.87px;line-height:8.87px;color:#1a1a1a;font-weight:bold;transform:scaleX(0.8500);">100% Red</div>
<div class="b" style="left:1124.75px;top:1011.25px;width:37px;height:36.5px;border-radius:4px 4px 0 0;background:linear-gradient(#a2a2a2,#8e8e8e 30%,#7c7c7c 70%,#6a6a6a)"></div>
<div class="b" style="left:1161.75px;top:1011px;width:2px;height:37px;background:#353535"></div>
<div class="b" style="left:1128.75px;top:1015.6px;width:29.7px;height:8.5px;border-radius:2.5px;background:#00ff00;box-shadow:0 0 1px 1px rgba(255,255,255,.25)"></div>
<div class="t" style="left:1132.36px;top:1028.09px;font-size:8.87px;line-height:8.87px;color:#1a1a1a;font-weight:bold;transform:scaleX(0.8500);">100%</div>
<div class="t" style="left:1132.36px;top:1036.99px;font-size:8.87px;line-height:8.87px;color:#1a1a1a;font-weight:bold;transform:scaleX(0.8500);">Green</div>
<div class="b" style="left:1163.70px;top:1011.25px;width:37px;height:36.5px;border-radius:4px 4px 0 0;background:linear-gradient(#a2a2a2,#8e8e8e 30%,#7c7c7c 70%,#6a6a6a)"></div>
<div class="b" style="left:1200.7px;top:1011px;width:2px;height:37px;background:#353535"></div>
<div class="b" style="left:1167.70px;top:1015.6px;width:29.7px;height:8.5px;border-radius:2.5px;background:#0000ff;box-shadow:0 0 1px 1px rgba(255,255,255,.25)"></div>
<div class="t" style="left:1172.55px;top:1028.09px;font-size:8.87px;line-height:8.87px;color:#1a1a1a;font-weight:bold;transform:scaleX(0.8500);">100%</div>
<div class="t" style="left:1172.55px;top:1036.99px;font-size:8.87px;line-height:8.87px;color:#1a1a1a;font-weight:bold;transform:scaleX(0.8500);">Blue</div>
<div class="b" style="left:1202.65px;top:1011.25px;width:37px;height:36.5px;border-radius:4px 4px 0 0;background:linear-gradient(#a2a2a2,#8e8e8e 30%,#7c7c7c 70%,#6a6a6a)"></div>
<div class="b" style="left:1239.65px;top:1011px;width:2px;height:37px;background:#353535"></div>
<div class="b" style="left:1206.65px;top:1015.6px;width:29.7px;height:8.5px;border-radius:2.5px;background:#00ffff;box-shadow:0 0 1px 1px rgba(255,255,255,.25)"></div>
<div class="t" style="left:1211.50px;top:1028.09px;font-size:8.87px;line-height:8.87px;color:#1a1a1a;font-weight:bold;transform:scaleX(0.8500);">100%</div>
<div class="t" style="left:1211.50px;top:1036.99px;font-size:8.87px;line-height:8.87px;color:#1a1a1a;font-weight:bold;transform:scaleX(0.8500);">Cyan</div>
<div class="b" style="left:1241.60px;top:1011.25px;width:37px;height:36.5px;border-radius:4px 4px 0 0;background:linear-gradient(#a2a2a2,#8e8e8e 30%,#7c7c7c 70%,#6a6a6a)"></div>
<div class="b" style="left:1278.6px;top:1011px;width:2px;height:37px;background:#353535"></div>
<div class="b" style="left:1245.60px;top:1015.6px;width:29.7px;height:8.5px;border-radius:2.5px;background:#ff00ff;box-shadow:0 0 1px 1px rgba(255,255,255,.25)"></div>
<div class="t" style="left:1244.78px;top:1028.09px;font-size:8.87px;line-height:8.87px;color:#1a1a1a;font-weight:bold;transform:scaleX(0.8500);">100%</div>
<div class="t" style="left:1244.78px;top:1036.99px;font-size:8.87px;line-height:8.87px;color:#1a1a1a;font-weight:bold;transform:scaleX(0.8500);">Magenta</div>
<div class="b" style="left:1280.55px;top:1011.25px;width:37px;height:36.5px;border-radius:4px 4px 0 0;background:linear-gradient(#a2a2a2,#8e8e8e 30%,#7c7c7c 70%,#6a6a6a)"></div>
<div class="b" style="left:1317.55px;top:1011px;width:2px;height:37px;background:#353535"></div>
<div class="b" style="left:1284.55px;top:1015.6px;width:29.7px;height:8.5px;border-radius:2.5px;background:#ffff00;box-shadow:0 0 1px 1px rgba(255,255,255,.25)"></div>
<div class="t" style="left:1287.31px;top:1028.09px;font-size:8.87px;line-height:8.87px;color:#1a1a1a;font-weight:bold;transform:scaleX(0.8500);">100%</div>
<div class="t" style="left:1287.31px;top:1036.99px;font-size:8.87px;line-height:8.87px;color:#1a1a1a;font-weight:bold;transform:scaleX(0.8500);">Yellow</div>
<div class="b" style="left:1319.50px;top:1011.25px;width:37px;height:36.5px;border-radius:4px 4px 0 0;background:linear-gradient(#a2a2a2,#8e8e8e 30%,#7c7c7c 70%,#6a6a6a)"></div>
<div class="b" style="left:1356.5px;top:1011px;width:2px;height:37px;background:#353535"></div>
<div class="b" style="left:1323.50px;top:1015.6px;width:29.7px;height:17.5px;border-radius:2.5px;background:#6e3e22;box-shadow:0 0 1px 1px rgba(255,255,255,.25)"></div>
<div class="t" style="left:1333.38px;top:1036.99px;font-size:8.87px;line-height:8.87px;color:#1a1a1a;font-weight:bold;transform:scaleX(0.8500);">2E</div>
<div class="b" style="left:1358.45px;top:1011.25px;width:37px;height:36.5px;border-radius:4px 4px 0 0;background:linear-gradient(#a2a2a2,#8e8e8e 30%,#7c7c7c 70%,#6a6a6a)"></div>
<div class="b" style="left:1395.45px;top:1011px;width:2px;height:37px;background:#353535"></div>
<div class="b" style="left:1362.45px;top:1015.6px;width:29.7px;height:17.5px;border-radius:2.5px;background:#c8886a;box-shadow:0 0 1px 1px rgba(255,255,255,.25)"></div>
<div class="t" style="left:1372.56px;top:1036.99px;font-size:8.87px;line-height:8.87px;color:#1a1a1a;font-weight:bold;transform:scaleX(0.8500);">2F</div>
<div class="b" style="left:1397.40px;top:1011.25px;width:37px;height:36.5px;border-radius:4px 4px 0 0;background:linear-gradient(#a2a2a2,#8e8e8e 30%,#7c7c7c 70%,#6a6a6a)"></div>
<div class="b" style="left:1434.4px;top:1011px;width:2px;height:37px;background:#353535"></div>
<div class="b" style="left:1401.40px;top:1015.6px;width:29.7px;height:17.5px;border-radius:2.5px;background:#ffc898;box-shadow:0 0 1px 1px rgba(255,255,255,.25)"></div>
<div class="t" style="left:1411.08px;top:1036.99px;font-size:8.87px;line-height:8.87px;color:#1a1a1a;font-weight:bold;transform:scaleX(0.8500);">2K</div>
<div class="b" style="left:1436.35px;top:1011.25px;width:37px;height:36.5px;border-radius:4px 4px 0 0;background:linear-gradient(#a2a2a2,#8e8e8e 30%,#7c7c7c 70%,#6a6a6a)"></div>
<div class="b" style="left:1473.35px;top:1011px;width:2px;height:37px;background:#353535"></div>
<div class="b" style="left:1440.35px;top:1015.6px;width:29.7px;height:17.5px;border-radius:2.5px;background:#ffcaa8;box-shadow:0 0 1px 1px rgba(255,255,255,.25)"></div>
<div class="t" style="left:1450.03px;top:1036.99px;font-size:8.87px;line-height:8.87px;color:#1a1a1a;font-weight:bold;transform:scaleX(0.8500);">5D</div>
<div class="b" style="left:1475.30px;top:1011.25px;width:37px;height:36.5px;border-radius:4px 4px 0 0;background:linear-gradient(#a2a2a2,#8e8e8e 30%,#7c7c7c 70%,#6a6a6a)"></div>
<div class="b" style="left:1512.3px;top:1011px;width:2px;height:37px;background:#353535"></div>
<div class="b" style="left:1479.30px;top:1015.6px;width:29.7px;height:17.5px;border-radius:2.5px;background:#f4a474;box-shadow:0 0 1px 1px rgba(255,255,255,.25)"></div>
<div class="t" style="left:1489.18px;top:1036.99px;font-size:8.87px;line-height:8.87px;color:#1a1a1a;font-weight:bold;transform:scaleX(0.8500);">7E</div>
<div class="b" style="left:1514.25px;top:1011.25px;width:37px;height:36.5px;border-radius:4px 4px 0 0;background:linear-gradient(#a2a2a2,#8e8e8e 30%,#7c7c7c 70%,#6a6a6a)"></div>
<div class="b" style="left:1551.25px;top:1011px;width:2px;height:37px;background:#353535"></div>
<div class="b" style="left:1518.25px;top:1015.6px;width:29.7px;height:17.5px;border-radius:2.5px;background:#c88a58;box-shadow:0 0 1px 1px rgba(255,255,255,.25)"></div>
<div class="t" style="left:1528.36px;top:1036.99px;font-size:8.87px;line-height:8.87px;color:#1a1a1a;font-weight:bold;transform:scaleX(0.8500);">7F</div>
<div class="b" style="left:1553.20px;top:1011.25px;width:37px;height:36.5px;border-radius:4px 4px 0 0;background:linear-gradient(#a2a2a2,#8e8e8e 30%,#7c7c7c 70%,#6a6a6a)"></div>
<div class="b" style="left:1590.2px;top:1011px;width:2px;height:37px;background:#353535"></div>
<div class="b" style="left:1557.20px;top:1015.6px;width:29.7px;height:17.5px;border-radius:2.5px;background:#8e5a32;box-shadow:0 0 1px 1px rgba(255,255,255,.25)"></div>
<div class="t" style="left:1566.67px;top:1036.99px;font-size:8.87px;line-height:8.87px;color:#1a1a1a;font-weight:bold;transform:scaleX(0.8500);">7G</div>
<div class="b" style="left:1592.15px;top:1011.25px;width:37px;height:36.5px;border-radius:4px 4px 0 0;background:linear-gradient(#a2a2a2,#8e8e8e 30%,#7c7c7c 70%,#6a6a6a)"></div>
<div class="b" style="left:1629.15px;top:1011px;width:2px;height:37px;background:#353535"></div>
<div class="b" style="left:1596.15px;top:1015.6px;width:29.7px;height:17.5px;border-radius:2.5px;background:#d8987a;box-shadow:0 0 1px 1px rgba(255,255,255,.25)"></div>
<div class="t" style="left:1605.83px;top:1036.99px;font-size:8.87px;line-height:8.87px;color:#1a1a1a;font-weight:bold;transform:scaleX(0.8500);">7H</div>
<div class="b" style="left:1631.10px;top:1011.25px;width:37px;height:36.5px;border-radius:4px 4px 0 0;background:linear-gradient(#a2a2a2,#8e8e8e 30%,#7c7c7c 70%,#6a6a6a)"></div>
<div class="b" style="left:1668.1px;top:1011px;width:2px;height:37px;background:#353535"></div>
<div class="b" style="left:1635.10px;top:1015.6px;width:29.7px;height:17.5px;border-radius:2.5px;background:#b86a2a;box-shadow:0 0 1px 1px rgba(255,255,255,.25)"></div>
<div class="t" style="left:1645.42px;top:1036.99px;font-size:8.87px;line-height:8.87px;color:#1a1a1a;font-weight:bold;transform:scaleX(0.8500);">7J</div>
<div class="b" style="left:151px;top:1048.75px;width:1526px;height:9.25px;background:#5c5c5c"></div>
<div class="b" style="left:151.5px;top:1049.5px;width:8px;height:8.5px;border-radius:2px;background:#8a8a8a"></div>
<div class="b" style="left:160.8px;top:1050px;width:1253px;height:8px;border-radius:4px;background:#464646"></div>
<div class="b" style="left:1669px;top:1049.5px;width:8px;height:8.5px;border-radius:2px;background:#8a8a8a"></div>
<div class="b" style="left:1677px;top:1010px;width:243px;height:48px;background:#4a4a4a"></div>
<div class="b" style="left:1678px;top:1011px;width:35px;height:47px;background:linear-gradient(#8a8a8a,#6a6a6a)"></div>
<div class="b" style="left:1684px;top:1030px;width:22.7px;height:21.7px;border-radius:4px;border:2px solid #222;background:#ddd"></div>
<div class="b" style="left:1690px;top:1036px;width:10.5px;height:10px;background:#000"></div>
<div class="b" style="left:1713.0px;top:1010px;width:34px;height:24px;background:#5a5a5a;border-right:1px solid #2a2a2a"></div>
<div class="b" style="left:1722.0px;top:1014px;width:16px;height:16px;border-radius:50%;background:radial-gradient(#6a6a6a,#555 80%)"></div>
<div class="b" style="left:1747.5px;top:1010px;width:34px;height:24px;background:#5a5a5a;border-right:1px solid #2a2a2a"></div>
<div class="b" style="left:1756.5px;top:1014px;width:16px;height:16px;border-radius:50%;background:radial-gradient(#6a6a6a,#555 80%)"></div>
<div class="b" style="left:1782.0px;top:1010px;width:34px;height:24px;background:#5a5a5a;border-right:1px solid #2a2a2a"></div>
<div class="b" style="left:1791.0px;top:1014px;width:16px;height:16px;border-radius:50%;background:radial-gradient(#6a6a6a,#555 80%)"></div>
<div class="b" style="left:1816.5px;top:1010px;width:34px;height:24px;background:#5a5a5a;border-right:1px solid #2a2a2a"></div>
<div class="b" style="left:1825.5px;top:1014px;width:16px;height:16px;border-radius:50%;background:radial-gradient(#6a6a6a,#555 80%)"></div>
<div class="b" style="left:1851.0px;top:1010px;width:34px;height:24px;background:#333;border-right:1px solid #2a2a2a"></div>
<div class="b" style="left:1860.0px;top:1014px;width:16px;height:16px;border-radius:50%;background:radial-gradient(#6a6a6a,#555 80%)"></div>
<div class="b" style="left:1885.5px;top:1010px;width:34px;height:24px;background:#333;border-right:1px solid #2a2a2a"></div>
<div class="b" style="left:1894.5px;top:1014px;width:16px;height:16px;border-radius:50%;background:radial-gradient(#6a6a6a,#555 80%)"></div>
<div class="b" style="left:1715px;top:1035px;width:101px;height:23px;border-radius:3px 0 0 0;background:linear-gradient(#c2c2c2,#a6a6a6 50%,#929292)"></div>
<div class="b" style="left:1816px;top:1035px;width:102px;height:23px;border-radius:0 3px 0 0;background:linear-gradient(#c2c2c2,#a6a6a6 50%,#929292);border-left:1px solid #777"></div>
<div class="b" style="left:1730px;top:1039.5px;width:15px;height:15px;border-radius:50%;background:radial-gradient(#9a9a9a,#b8b8b8)"></div>
<div class="b" style="left:1890px;top:1039.5px;width:15px;height:15px;border-radius:50%;background:radial-gradient(#9a9a9a,#b8b8b8)"></div>
<div class="t" style="left:1734.68px;top:1042.39px;font-size:10.17px;line-height:10.17px;color:#333;">«</div>
<div class="t" style="left:1894.68px;top:1042.39px;font-size:10.17px;line-height:10.17px;color:#333;">»</div>
<div class="t" style="left:1757.50px;top:1038.16px;font-size:15.99px;line-height:15.99px;color:#2a2a2a;transform:scaleX(1.0518);">Back</div>
<div class="t" style="left:1837.50px;top:1038.16px;font-size:15.99px;line-height:15.99px;color:#2a2a2a;transform:scaleX(1.1657);">Next</div>
<svg style="left:1620px;top:990px" width="100" height="68" viewBox="0 0 100 68"><path d="M10.6 6.4L48.8 13.8L50.1 37.3L77.1 41.8L36 55.3L12.9 41.8Z" fill="none" stroke="rgba(235,235,235,.7)" stroke-width="6" stroke-linejoin="round"/><path d="M10.6 6.4L48.8 13.8L50.1 37.3L77.1 41.8L36 55.3L12.9 41.8Z" fill="none" stroke="rgba(170,40,50,.85)" stroke-width="3.6" stroke-linejoin="round"/><path d="M20.6 39.2L77.1 41.8" fill="none" stroke="rgba(240,220,210,.7)" stroke-width="2"/><path d="M21.9 18.6L34 33.4L54 5.8" fill="none" stroke="rgba(235,235,235,.8)" stroke-width="5.5" stroke-linecap="round" stroke-linejoin="round"/><path d="M21.9 18.6L34 33.4L54 5.8" fill="none" stroke="rgba(45,45,45,.9)" stroke-width="3" stroke-linecap="round" stroke-linejoin="round"/></svg>
<div class="t" style="left:1675.00px;top:1000.39px;font-size:29.07px;line-height:29.07px;color:rgba(175,45,55,.85);font-weight:bold;transform:scaleX(0.8808);-webkit-text-stroke:0.6px rgba(235,235,235,.75);">NOTEBOOK</div>
<div class="t" style="left:1823.00px;top:1000.39px;font-size:29.07px;line-height:29.07px;color:rgba(40,40,40,.7);font-weight:bold;transform:scaleX(0.8583);-webkit-text-stroke:0.6px rgba(230,230,230,.75);">CHECK</div>
</body></html>
